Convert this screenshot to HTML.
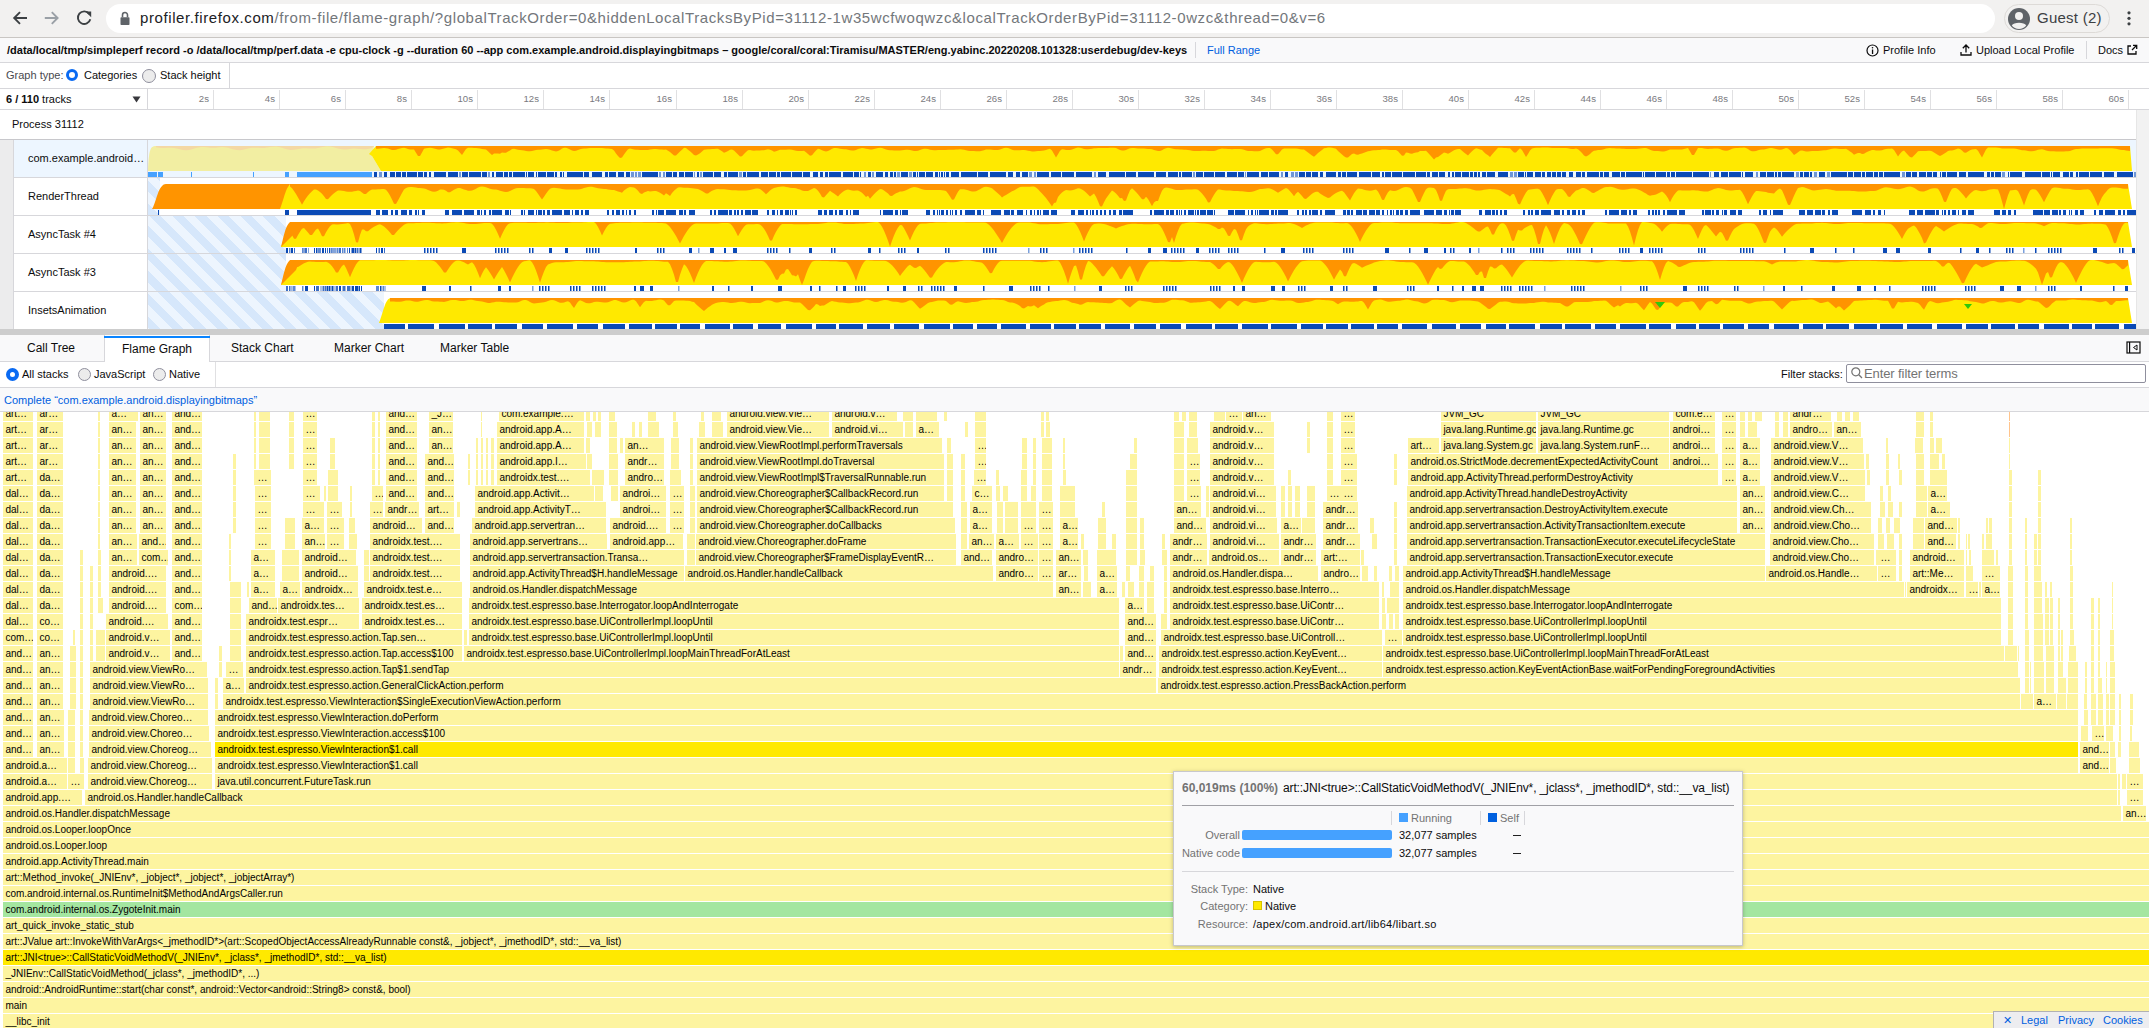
<!DOCTYPE html>
<html><head><meta charset="utf-8"><title>Firefox Profiler</title><style>
html,body{margin:0;padding:0}
body{width:2149px;height:1028px;overflow:hidden;position:relative;font-family:"Liberation Sans",sans-serif;background:#fff}
.b,.s{position:absolute;height:15px;overflow:hidden;white-space:nowrap}
.b{font-size:10px;line-height:16px;color:#000;padding-left:2.4px;box-sizing:border-box}
</style></head>
<body>

<div id="chrome" style="position:absolute;left:0;top:0;width:2149px;height:38px;background:#f2f1f0;border-bottom:1px solid #c9c6c3;box-sizing:border-box"></div>
<svg style="position:absolute;left:0;top:0" width="110" height="37" viewBox="0 0 110 37">
  <g fill="none" stroke="#3c4043" stroke-width="1.9" stroke-linecap="butt">
    <path d="M27 18 H14.2 M20 12.2 L14.2 18 L20 23.8"/>
  </g>
  <g fill="none" stroke="#9aa0a6" stroke-width="1.9" stroke-linecap="butt">
    <path d="M44.8 18 H57.6 M51.8 12.2 L57.6 18 L51.8 23.8"/>
  </g>
  <path d="M89.2 13.8 A6.3 6.3 0 1 0 90.3 19.2" fill="none" stroke="#3c4043" stroke-width="1.9"/>
  <path d="M85.3 11.4 L91.2 11.4 L91.2 17.3 Z" fill="#3c4043"/>
</svg>
<div style="position:absolute;left:106px;top:4px;width:1889px;height:29px;border-radius:15px;background:#fff"></div>
<svg style="position:absolute;left:117px;top:9px" width="16" height="18" viewBox="0 0 16 18">
  <rect x="3.5" y="8.2" width="9" height="7.8" rx="0.8" fill="#5f6368"/>
  <path d="M5.5 8.2 V6 A2.5 2.5 0 0 1 10.5 6 V8.2" fill="none" stroke="#5f6368" stroke-width="1.6"/>
</svg>
<div style="position:absolute;left:140px;top:8px;font-size:15px;line-height:20px;letter-spacing:0.595px;color:#202124;white-space:nowrap">profiler.firefox.com<span style="color:#73777b">/from-file/flame-graph/?globalTrackOrder=0&amp;hiddenLocalTracksByPid=31112-1w35wcfwoqwzc&amp;localTrackOrderByPid=31112-0wzc&amp;thread=0&amp;v=6</span></div>
<div style="position:absolute;left:2004px;top:4px;width:106px;height:29px;border-radius:15px;background:#f2f1f0;border:1px solid #dddad7;box-sizing:border-box"></div>
<svg style="position:absolute;left:2007px;top:7px" width="24" height="24" viewBox="0 0 24 24">
  <circle cx="12" cy="12" r="11" fill="#5f6368"/>
  <circle cx="12" cy="9" r="4" fill="#f2f1f0"/>
  <path d="M4.8 18.5 C6.5 14.8 17.5 14.8 19.2 18.5 C17.5 20.7 15 22 12 22 C9 22 6.5 20.7 4.8 18.5 Z" fill="#f2f1f0"/>
</svg>
<div style="position:absolute;left:2037px;top:8px;font-size:15px;line-height:20px;color:#3c4043;letter-spacing:0.25px;white-space:nowrap">Guest (2)</div>
<svg style="position:absolute;left:2123px;top:9px" width="12" height="20" viewBox="0 0 12 20">
  <circle cx="6" cy="3.8" r="1.6" fill="#3c4043"/><circle cx="6" cy="9.3" r="1.6" fill="#3c4043"/><circle cx="6" cy="14.8" r="1.6" fill="#3c4043"/>
</svg>


<div style="position:absolute;left:0;top:38px;width:2149px;height:25px;background:#f9f9fa;border-bottom:1px solid #d7d7db;box-sizing:border-box"></div>
<div style="position:absolute;left:7px;top:44px;font-weight:bold;font-size:11px;line-height:13px;color:#0c0c0d;white-space:nowrap">/data/local/tmp/simpleperf record -o /data/local/tmp/perf.data -e cpu-clock -g --duration 60 --app com.example.android.displayingbitmaps – google/coral/coral:Tiramisu/MASTER/eng.yabinc.20220208.101328:userdebug/dev-keys</div>
<div style="position:absolute;left:1195px;top:42px;width:1px;height:16px;background:#d7d7db"></div>
<div style="position:absolute;left:1207px;top:44px;font-size:11px;line-height:13px;color:#0060df;white-space:nowrap">Full Range</div>
<svg style="position:absolute;left:1866px;top:44px" width="13" height="13" viewBox="0 0 13 13">
  <circle cx="6.5" cy="6.5" r="5.5" fill="none" stroke="#0c0c0d" stroke-width="1.2"/>
  <rect x="5.9" y="5.5" width="1.3" height="4.5" fill="#0c0c0d"/><circle cx="6.5" cy="3.7" r="0.8" fill="#0c0c0d"/>
</svg>
<div style="position:absolute;left:1883px;top:44px;font-size:11px;line-height:13px;color:#0c0c0d;white-space:nowrap">Profile Info</div>
<svg style="position:absolute;left:1959px;top:43px" width="14" height="14" viewBox="0 0 14 14">
  <path d="M7 2 V9.5 M3.8 5.2 L7 2 L10.2 5.2 M2 9 V12 H12 V9" fill="none" stroke="#0c0c0d" stroke-width="1.3"/>
</svg>
<div style="position:absolute;left:1976px;top:44px;font-size:11px;line-height:13px;color:#0c0c0d;white-space:nowrap">Upload Local Profile</div>
<div style="position:absolute;left:2086px;top:41px;width:1px;height:18px;background:#d7d7db"></div>
<div style="position:absolute;left:2098px;top:44px;font-size:11px;line-height:13px;color:#0c0c0d;white-space:nowrap">Docs</div>
<svg style="position:absolute;left:2126px;top:44px" width="12" height="12" viewBox="0 0 12 12">
  <path d="M5 2 H2 V10 H10 V7" fill="none" stroke="#0c0c0d" stroke-width="1.3"/>
  <path d="M6 6 L10.5 1.5 M7 1.3 H10.7 V5" fill="none" stroke="#0c0c0d" stroke-width="1.3"/>
</svg>


<div style="position:absolute;left:0;top:63px;width:2149px;height:25px;background:#fff"></div>
<div style="position:absolute;left:6px;top:69px;font-size:11px;line-height:13px;color:#4a4a4f;white-space:nowrap">Graph type:</div>
<div style="position:absolute;left:66px;top:69px;width:6px;height:6px;border-radius:50%;border:3.5px solid #0a6af2;background:#fff"></div>
<div style="position:absolute;left:84px;top:69px;font-size:11px;line-height:13px;color:#0c0c0d;white-space:nowrap">Categories</div>
<div style="position:absolute;left:142px;top:69px;width:12px;height:12px;border-radius:50%;border:1px solid #8f8f9d;background:#ececec"></div>
<div style="position:absolute;left:160px;top:69px;font-size:11px;line-height:13px;color:#0c0c0d;white-space:nowrap">Stack height</div>
<div style="position:absolute;left:229px;top:62px;width:1px;height:26px;background:#d7d7db"></div>


<div style="position:absolute;left:0;top:88px;width:2149px;height:22px;background:#fff;border-top:1px solid #d7d7db;border-bottom:1px solid #d7d7db;box-sizing:border-box"></div>
<div style="position:absolute;left:6px;top:93px;font-size:11px;line-height:13px;color:#0c0c0d;white-space:nowrap"><b>6 / 110</b> tracks</div>
<svg style="position:absolute;left:132px;top:96px" width="9" height="7" viewBox="0 0 9 7"><path d="M0.5 0.5 H8.5 L4.5 6.5 Z" fill="#38383d"/></svg>
<div style="position:absolute;left:147px;top:88px;width:1px;height:22px;background:#d7d7db"></div>

<div style="position:absolute;left:213px;top:90px;width:1px;height:19px;background:#e0e0e2"></div>
<div style="position:absolute;left:153px;top:93px;width:56px;text-align:right;font-size:9.6px;line-height:12px;color:#7a7a80;white-space:nowrap">2s</div>
<div style="position:absolute;left:279px;top:90px;width:1px;height:19px;background:#e0e0e2"></div>
<div style="position:absolute;left:219px;top:93px;width:56px;text-align:right;font-size:9.6px;line-height:12px;color:#7a7a80;white-space:nowrap">4s</div>
<div style="position:absolute;left:345px;top:90px;width:1px;height:19px;background:#e0e0e2"></div>
<div style="position:absolute;left:285px;top:93px;width:56px;text-align:right;font-size:9.6px;line-height:12px;color:#7a7a80;white-space:nowrap">6s</div>
<div style="position:absolute;left:411px;top:90px;width:1px;height:19px;background:#e0e0e2"></div>
<div style="position:absolute;left:351px;top:93px;width:56px;text-align:right;font-size:9.6px;line-height:12px;color:#7a7a80;white-space:nowrap">8s</div>
<div style="position:absolute;left:477px;top:90px;width:1px;height:19px;background:#e0e0e2"></div>
<div style="position:absolute;left:417px;top:93px;width:56px;text-align:right;font-size:9.6px;line-height:12px;color:#7a7a80;white-space:nowrap">10s</div>
<div style="position:absolute;left:543px;top:90px;width:1px;height:19px;background:#e0e0e2"></div>
<div style="position:absolute;left:483px;top:93px;width:56px;text-align:right;font-size:9.6px;line-height:12px;color:#7a7a80;white-space:nowrap">12s</div>
<div style="position:absolute;left:609px;top:90px;width:1px;height:19px;background:#e0e0e2"></div>
<div style="position:absolute;left:549px;top:93px;width:56px;text-align:right;font-size:9.6px;line-height:12px;color:#7a7a80;white-space:nowrap">14s</div>
<div style="position:absolute;left:676px;top:90px;width:1px;height:19px;background:#e0e0e2"></div>
<div style="position:absolute;left:616px;top:93px;width:56px;text-align:right;font-size:9.6px;line-height:12px;color:#7a7a80;white-space:nowrap">16s</div>
<div style="position:absolute;left:742px;top:90px;width:1px;height:19px;background:#e0e0e2"></div>
<div style="position:absolute;left:682px;top:93px;width:56px;text-align:right;font-size:9.6px;line-height:12px;color:#7a7a80;white-space:nowrap">18s</div>
<div style="position:absolute;left:808px;top:90px;width:1px;height:19px;background:#e0e0e2"></div>
<div style="position:absolute;left:748px;top:93px;width:56px;text-align:right;font-size:9.6px;line-height:12px;color:#7a7a80;white-space:nowrap">20s</div>
<div style="position:absolute;left:874px;top:90px;width:1px;height:19px;background:#e0e0e2"></div>
<div style="position:absolute;left:814px;top:93px;width:56px;text-align:right;font-size:9.6px;line-height:12px;color:#7a7a80;white-space:nowrap">22s</div>
<div style="position:absolute;left:940px;top:90px;width:1px;height:19px;background:#e0e0e2"></div>
<div style="position:absolute;left:880px;top:93px;width:56px;text-align:right;font-size:9.6px;line-height:12px;color:#7a7a80;white-space:nowrap">24s</div>
<div style="position:absolute;left:1006px;top:90px;width:1px;height:19px;background:#e0e0e2"></div>
<div style="position:absolute;left:946px;top:93px;width:56px;text-align:right;font-size:9.6px;line-height:12px;color:#7a7a80;white-space:nowrap">26s</div>
<div style="position:absolute;left:1072px;top:90px;width:1px;height:19px;background:#e0e0e2"></div>
<div style="position:absolute;left:1012px;top:93px;width:56px;text-align:right;font-size:9.6px;line-height:12px;color:#7a7a80;white-space:nowrap">28s</div>
<div style="position:absolute;left:1138px;top:90px;width:1px;height:19px;background:#e0e0e2"></div>
<div style="position:absolute;left:1078px;top:93px;width:56px;text-align:right;font-size:9.6px;line-height:12px;color:#7a7a80;white-space:nowrap">30s</div>
<div style="position:absolute;left:1204px;top:90px;width:1px;height:19px;background:#e0e0e2"></div>
<div style="position:absolute;left:1144px;top:93px;width:56px;text-align:right;font-size:9.6px;line-height:12px;color:#7a7a80;white-space:nowrap">32s</div>
<div style="position:absolute;left:1270px;top:90px;width:1px;height:19px;background:#e0e0e2"></div>
<div style="position:absolute;left:1210px;top:93px;width:56px;text-align:right;font-size:9.6px;line-height:12px;color:#7a7a80;white-space:nowrap">34s</div>
<div style="position:absolute;left:1336px;top:90px;width:1px;height:19px;background:#e0e0e2"></div>
<div style="position:absolute;left:1276px;top:93px;width:56px;text-align:right;font-size:9.6px;line-height:12px;color:#7a7a80;white-space:nowrap">36s</div>
<div style="position:absolute;left:1402px;top:90px;width:1px;height:19px;background:#e0e0e2"></div>
<div style="position:absolute;left:1342px;top:93px;width:56px;text-align:right;font-size:9.6px;line-height:12px;color:#7a7a80;white-space:nowrap">38s</div>
<div style="position:absolute;left:1468px;top:90px;width:1px;height:19px;background:#e0e0e2"></div>
<div style="position:absolute;left:1408px;top:93px;width:56px;text-align:right;font-size:9.6px;line-height:12px;color:#7a7a80;white-space:nowrap">40s</div>
<div style="position:absolute;left:1534px;top:90px;width:1px;height:19px;background:#e0e0e2"></div>
<div style="position:absolute;left:1474px;top:93px;width:56px;text-align:right;font-size:9.6px;line-height:12px;color:#7a7a80;white-space:nowrap">42s</div>
<div style="position:absolute;left:1600px;top:90px;width:1px;height:19px;background:#e0e0e2"></div>
<div style="position:absolute;left:1540px;top:93px;width:56px;text-align:right;font-size:9.6px;line-height:12px;color:#7a7a80;white-space:nowrap">44s</div>
<div style="position:absolute;left:1666px;top:90px;width:1px;height:19px;background:#e0e0e2"></div>
<div style="position:absolute;left:1606px;top:93px;width:56px;text-align:right;font-size:9.6px;line-height:12px;color:#7a7a80;white-space:nowrap">46s</div>
<div style="position:absolute;left:1732px;top:90px;width:1px;height:19px;background:#e0e0e2"></div>
<div style="position:absolute;left:1672px;top:93px;width:56px;text-align:right;font-size:9.6px;line-height:12px;color:#7a7a80;white-space:nowrap">48s</div>
<div style="position:absolute;left:1798px;top:90px;width:1px;height:19px;background:#e0e0e2"></div>
<div style="position:absolute;left:1738px;top:93px;width:56px;text-align:right;font-size:9.6px;line-height:12px;color:#7a7a80;white-space:nowrap">50s</div>
<div style="position:absolute;left:1864px;top:90px;width:1px;height:19px;background:#e0e0e2"></div>
<div style="position:absolute;left:1804px;top:93px;width:56px;text-align:right;font-size:9.6px;line-height:12px;color:#7a7a80;white-space:nowrap">52s</div>
<div style="position:absolute;left:1930px;top:90px;width:1px;height:19px;background:#e0e0e2"></div>
<div style="position:absolute;left:1870px;top:93px;width:56px;text-align:right;font-size:9.6px;line-height:12px;color:#7a7a80;white-space:nowrap">54s</div>
<div style="position:absolute;left:1996px;top:90px;width:1px;height:19px;background:#e0e0e2"></div>
<div style="position:absolute;left:1936px;top:93px;width:56px;text-align:right;font-size:9.6px;line-height:12px;color:#7a7a80;white-space:nowrap">56s</div>
<div style="position:absolute;left:2062px;top:90px;width:1px;height:19px;background:#e0e0e2"></div>
<div style="position:absolute;left:2002px;top:93px;width:56px;text-align:right;font-size:9.6px;line-height:12px;color:#7a7a80;white-space:nowrap">58s</div>
<div style="position:absolute;left:2128px;top:90px;width:1px;height:19px;background:#e0e0e2"></div>
<div style="position:absolute;left:2068px;top:93px;width:56px;text-align:right;font-size:9.6px;line-height:12px;color:#7a7a80;white-space:nowrap">60s</div>

<div style="position:absolute;left:0;top:110px;width:2136px;height:30px;background:#fff;border-bottom:1px solid #c8c8cc;box-sizing:border-box"></div>
<div style="position:absolute;left:12px;top:118px;font-size:11px;line-height:13px;color:#0c0c0d;white-space:nowrap">Process 31112</div>
<div style="position:absolute;left:2136px;top:110px;width:13px;height:220px;background:#f2f2f2;border-left:1px solid #e6e6e6;box-sizing:border-box"></div>

<div style="position:absolute;left:0;top:140px;width:14px;height:190px;background:#ececed;border-right:1px solid #d7d7db;box-sizing:border-box"></div>
<div style="position:absolute;left:14px;top:140px;width:2122px;height:38px;background:#edf6ff;border-bottom:1px solid #d7d7db;box-sizing:border-box"></div>
<div style="position:absolute;left:28px;top:152px;font-size:11px;line-height:13px;color:#0c0c0d;white-space:nowrap">com.example.android…</div>
<div style="position:absolute;left:147px;top:140px;width:1px;height:37px;background:#d7d7db"></div>
<div style="position:absolute;left:14px;top:178px;width:2122px;height:38px;background:#fff;border-bottom:1px solid #d7d7db;box-sizing:border-box"></div>
<div style="position:absolute;left:28px;top:190px;font-size:11px;line-height:13px;color:#0c0c0d;white-space:nowrap">RenderThread</div>
<div style="position:absolute;left:147px;top:178px;width:1px;height:37px;background:#d7d7db"></div>
<div style="position:absolute;left:14px;top:216px;width:2122px;height:38px;background:#fff;border-bottom:1px solid #d7d7db;box-sizing:border-box"></div>
<div style="position:absolute;left:28px;top:228px;font-size:11px;line-height:13px;color:#0c0c0d;white-space:nowrap">AsyncTask #4</div>
<div style="position:absolute;left:147px;top:216px;width:1px;height:37px;background:#d7d7db"></div>
<div style="position:absolute;left:14px;top:254px;width:2122px;height:38px;background:#fff;border-bottom:1px solid #d7d7db;box-sizing:border-box"></div>
<div style="position:absolute;left:28px;top:266px;font-size:11px;line-height:13px;color:#0c0c0d;white-space:nowrap">AsyncTask #3</div>
<div style="position:absolute;left:147px;top:254px;width:1px;height:37px;background:#d7d7db"></div>
<div style="position:absolute;left:14px;top:292px;width:2122px;height:38px;background:#fff;border-bottom:1px solid #d7d7db;box-sizing:border-box"></div>
<div style="position:absolute;left:28px;top:304px;font-size:11px;line-height:13px;color:#0c0c0d;white-space:nowrap">InsetsAnimation</div>
<div style="position:absolute;left:147px;top:292px;width:1px;height:37px;background:#d7d7db"></div>
<div style="position:absolute;left:148px;top:178px;width:12px;height:37px;background:repeating-linear-gradient(45deg,#edf5fe 0px,#edf5fe 8px,#d6e7fb 8px,#d6e7fb 16px);background-attachment:fixed"></div>
<div style="position:absolute;left:148px;top:216px;width:138px;height:37px;background:repeating-linear-gradient(45deg,#edf5fe 0px,#edf5fe 8px,#d6e7fb 8px,#d6e7fb 16px);background-attachment:fixed"></div>
<div style="position:absolute;left:148px;top:254px;width:138px;height:37px;background:repeating-linear-gradient(45deg,#edf5fe 0px,#edf5fe 8px,#d6e7fb 8px,#d6e7fb 16px);background-attachment:fixed"></div>
<div style="position:absolute;left:148px;top:292px;width:236px;height:37px;background:repeating-linear-gradient(45deg,#edf5fe 0px,#edf5fe 8px,#d6e7fb 8px,#d6e7fb 16px);background-attachment:fixed"></div>
<svg style="position:absolute;left:0;top:0" width="2149" height="335" viewBox="0 0 2149 335">
<path d="M148,171 C149,150 150,146 156,146 L374,146 L372,156 L381,171 Z" fill="#f2eea2"/>
<path d="M156,146 L156,147.275855750327 L159,147.79524111260116 L162,148.0754487604258 L165,148.05728198359256 L168,147.87415717763864 L171,147.7701404472669 L174,147.95845470132318 L177,148.4947134782284 L180,149.23171568264323 L183,149.88078547638548 L186,150.14979862266676 L189,149.88830934857074 L192,149.16596949000177 L195,148.24394049728483 L198,147.45315517910055 L201,147.04043427156253 L204,147.05952568632682 L207,147.36093189648548 L210,147.68382395434108 L213,147.8012952447072 L216,147.64330411887332 L219,147.33362069903555 L222,147.12174362546185 L225,147.2451604163982 L228,147.79356692823103 L231,148.6461197145663 L234,149.5156964192198 L237,150.0794438101329 L240,150.13059160351165 L243,149.67529621792593 L246,148.9259288725838 L249,148.1946359902045 L252,147.7414106150825 L255,147.6535854854522 L258,147.81705278744857 L261,147.9921906194505 L264,147.95369935588408 L267,147.62087160827085 L270,147.10996279011482 L273,146.68063530608043 L276,146.60323722771645 L279,147.01483667403383 L282,147.8383250472818 L285,148.80718358290312 L288,149.58485357433267 L291,149.9194800596901 L294,149.75674307865984 L297,149.25478723350494 L300,148.6950243988493 L303,148.33537930864114 L306,148.28140233004763 L309,148.44088369884435 L312,148.58425147251307 L315,148.47838128574037 L318,148.02352387658888 L321,147.32131724841219 L324,146.6372002872118 L327,146.27487923255006 L330,146.42597175058742 L333,147.07123668949603 L336,147.984027359574 L339,148.83490470324395 L342,149.34511222692905 L345,149.41201475161537 L348,149.14418572022038 L351,148.79010232719702 L354,148.59868247060103 L357,148.68440856744724 L360,148.96690533163576 L363,149.2161033181735 L366,149.1794254244512 L369,148.72485012831478 L372,147.92509810031856 L374,146 Z" fill="#f4d8a4"/>
<path d="M369,154 L376,146 L2130,146 L2132,171 L381,171 L372,156 Z" fill="#ffe900"/>
<path d="M376,146 L376,148.8 L378,148.7 L380,148.5 L382,148.3 L384,148.1 L386,148.2 L388,148.6 L390,149.3 L392,149.9 L394,150.1 L396,149.8 L398,149.1 L400,148.4 L402,147.9 L404,147.8 L406,148.3 L408,148.9 L410,149.4 L412,149.6 L414,149.6 L416,152.8 L418,156.0 L420,155.9 L422,152.4 L424,148.7 L426,148.2 L428,147.9 L430,147.7 L432,147.9 L434,148.5 L436,149.1 L438,149.5 L440,149.5 L442,149.1 L444,148.4 L446,147.9 L448,147.6 L450,147.8 L452,148.3 L454,148.8 L456,149.2 L458,150.5 L460,152.8 L462,154.9 L464,151.9 L466,149.1 L468,147.8 L470,147.8 L472,147.8 L474,147.9 L476,147.9 L478,148.2 L480,148.6 L482,149.0 L484,149.2 L486,149.4 L488,151.3 L490,153.3 L492,155.1 L494,153.6 L496,153.4 L498,153.5 L500,153.8 L502,152.4 L504,152.7 L506,152.8 L508,151.6 L510,150.4 L512,149.1 L514,148.8 L516,149.3 L518,149.8 L520,150.0 L522,150.2 L524,150.5 L526,151.0 L528,151.3 L530,151.2 L532,150.9 L534,150.4 L536,150.0 L538,149.8 L540,149.7 L542,149.5 L544,149.3 L546,149.1 L548,149.2 L550,149.7 L552,150.4 L554,151.1 L556,151.4 L558,151.0 L560,149.9 L562,148.6 L564,147.8 L566,147.8 L568,148.5 L570,149.6 L572,150.6 L574,150.9 L576,150.7 L578,150.0 L580,149.2 L582,148.7 L584,148.6 L586,148.5 L588,148.3 L590,148.1 L592,148.1 L594,148.1 L596,148.0 L598,148.0 L600,148.0 L602,148.0 L604,148.2 L606,148.4 L608,148.6 L610,148.7 L612,149.0 L614,150.6 L616,153.4 L618,156.0 L620,158.1 L622,157.5 L624,154.6 L626,151.7 L628,149.3 L630,148.4 L632,148.9 L634,149.4 L636,149.8 L638,149.8 L640,149.9 L642,150.0 L644,150.0 L646,150.1 L648,149.9 L650,149.6 L652,149.3 L654,149.0 L656,149.0 L658,149.2 L660,149.4 L662,149.6 L664,149.7 L666,149.5 L668,150.8 L670,152.1 L672,153.7 L674,155.6 L676,155.6 L678,153.6 L680,151.6 L682,149.7 L684,147.8 L686,148.0 L688,149.7 L690,151.3 L692,152.9 L694,154.9 L696,155.5 L698,154.6 L700,153.3 L702,151.6 L704,149.8 L706,149.5 L708,149.2 L710,149.2 L712,149.1 L714,148.9 L716,148.8 L718,148.8 L720,149.9 L722,151.3 L724,152.8 L726,151.9 L728,150.9 L730,149.7 L732,149.5 L734,150.4 L736,152.5 L738,154.6 L740,156.5 L742,156.3 L744,154.0 L746,152.0 L748,150.3 L750,149.9 L752,150.4 L754,150.7 L756,150.6 L758,150.5 L760,150.4 L762,150.3 L764,150.2 L766,149.8 L768,149.2 L770,149.8 L772,150.6 L774,151.8 L776,151.2 L778,150.5 L780,149.8 L782,149.8 L784,149.7 L786,149.7 L788,149.6 L790,149.6 L792,149.8 L794,150.2 L796,150.7 L798,151.0 L800,151.0 L802,150.9 L804,150.7 L806,152.3 L808,154.1 L810,155.8 L812,155.3 L814,152.8 L816,150.6 L818,148.7 L820,149.3 L822,150.3 L824,151.1 L826,151.4 L828,151.0 L830,150.0 L832,148.8 L834,148.1 L836,148.0 L838,148.3 L840,148.7 L842,149.0 L844,149.2 L846,149.3 L848,149.7 L850,150.2 L852,150.5 L854,150.5 L856,149.9 L858,149.1 L860,148.4 L862,148.1 L864,148.3 L866,148.7 L868,149.1 L870,149.4 L872,149.4 L874,149.0 L876,148.4 L878,147.9 L880,147.7 L882,148.0 L884,148.7 L886,149.5 L888,150.1 L890,150.2 L892,150.3 L894,150.4 L896,150.5 L898,150.6 L900,150.5 L902,150.2 L904,150.0 L906,149.8 L908,149.8 L910,150.1 L912,150.5 L914,150.9 L916,151.0 L918,150.7 L920,150.1 L922,149.3 L924,148.8 L926,148.8 L928,149.1 L930,149.7 L932,150.1 L934,150.3 L936,150.2 L938,150.1 L940,150.0 L942,149.9 L944,149.9 L946,149.9 L948,149.8 L950,149.8 L952,149.8 L954,149.8 L956,149.6 L958,149.4 L960,149.3 L962,149.4 L964,149.7 L966,150.2 L968,150.7 L970,150.9 L972,150.9 L974,151.0 L976,151.2 L978,151.3 L980,151.2 L982,150.8 L984,150.2 L986,149.6 L988,149.4 L990,149.5 L992,149.7 L994,150.0 L996,150.1 L998,150.1 L1000,149.6 L1002,148.7 L1004,148.0 L1006,147.7 L1008,148.0 L1010,148.8 L1012,149.7 L1014,150.2 L1016,150.3 L1018,150.3 L1020,150.2 L1022,150.1 L1024,150.1 L1026,150.3 L1028,150.7 L1030,151.1 L1032,151.4 L1034,151.5 L1036,151.3 L1038,151.1 L1040,150.9 L1042,150.8 L1044,150.5 L1046,149.9 L1048,149.2 L1050,148.7 L1052,150.4 L1054,153.9 L1056,157.5 L1058,154.2 L1060,150.8 L1062,149.2 L1064,149.5 L1066,149.9 L1068,150.1 L1070,150.1 L1072,149.5 L1074,148.7 L1076,147.9 L1078,147.6 L1080,147.8 L1082,148.3 L1084,148.9 L1086,149.3 L1088,149.3 L1090,149.1 L1092,148.7 L1094,148.3 L1096,148.2 L1098,148.1 L1100,148.1 L1102,148.0 L1104,148.0 L1106,148.0 L1108,147.9 L1110,147.8 L1112,147.8 L1114,147.7 L1116,148.1 L1118,148.9 L1120,149.9 L1122,150.5 L1124,150.5 L1126,149.9 L1128,149.1 L1130,148.3 L1132,148.0 L1134,148.1 L1136,148.2 L1138,148.4 L1140,148.5 L1142,148.5 L1144,148.6 L1146,148.8 L1148,149.0 L1150,149.1 L1152,149.3 L1154,149.9 L1156,150.5 L1158,150.9 L1160,150.9 L1162,150.2 L1164,149.1 L1166,148.2 L1168,147.8 L1170,148.0 L1172,148.4 L1174,148.9 L1176,149.3 L1178,149.3 L1180,149.4 L1182,149.5 L1184,149.7 L1186,149.7 L1188,149.9 L1190,150.2 L1192,150.7 L1194,151.0 L1196,151.0 L1198,151.0 L1200,150.9 L1202,150.8 L1204,150.8 L1206,150.8 L1208,150.9 L1210,150.9 L1212,151.0 L1214,150.9 L1216,150.4 L1218,149.6 L1220,148.9 L1222,148.6 L1224,148.7 L1226,148.8 L1228,149.0 L1230,149.1 L1232,149.2 L1234,149.1 L1236,149.0 L1238,149.0 L1240,148.9 L1242,149.2 L1244,149.8 L1246,150.5 L1248,151.0 L1250,151.0 L1252,151.1 L1254,151.2 L1256,151.3 L1258,151.3 L1260,151.0 L1262,150.0 L1264,148.9 L1266,148.2 L1268,148.1 L1270,148.1 L1272,149.4 L1274,151.8 L1276,154.3 L1278,154.3 L1280,151.9 L1282,149.6 L1284,148.4 L1286,148.4 L1288,148.4 L1290,148.4 L1292,148.4 L1294,148.4 L1296,148.6 L1298,148.8 L1300,149.2 L1302,149.4 L1304,149.5 L1306,151.0 L1308,152.5 L1310,154.1 L1312,155.5 L1314,156.8 L1316,155.0 L1318,153.1 L1320,151.4 L1322,149.9 L1324,148.3 L1326,147.9 L1328,147.6 L1330,147.5 L1332,147.7 L1334,148.2 L1336,148.8 L1338,150.9 L1340,152.8 L1342,154.5 L1344,156.2 L1346,157.6 L1348,157.6 L1350,155.8 L1352,154.1 L1354,153.4 L1356,154.6 L1358,154.7 L1360,153.9 L1362,153.4 L1364,152.8 L1366,151.9 L1368,151.2 L1370,150.9 L1372,150.5 L1374,150.3 L1376,150.2 L1378,150.1 L1380,149.9 L1382,149.6 L1384,149.6 L1386,149.6 L1388,149.7 L1390,149.9 L1392,150.0 L1394,150.0 L1396,150.0 L1398,151.2 L1400,153.5 L1402,155.8 L1404,155.5 L1406,152.5 L1408,152.7 L1410,153.6 L1412,153.7 L1414,153.0 L1416,152.6 L1418,152.2 L1420,151.1 L1422,151.0 L1424,150.9 L1426,150.7 L1428,152.8 L1430,155.0 L1432,157.3 L1434,159.6 L1436,157.5 L1438,157.1 L1440,155.6 L1442,153.9 L1444,152.5 L1446,153.1 L1448,153.8 L1450,152.7 L1452,151.5 L1454,150.3 L1456,149.4 L1458,149.1 L1460,149.1 L1462,150.7 L1464,152.4 L1466,154.0 L1468,155.4 L1470,153.3 L1472,151.3 L1474,149.6 L1476,148.2 L1478,148.8 L1480,149.5 L1482,150.0 L1484,152.2 L1486,153.9 L1488,155.3 L1490,156.9 L1492,154.4 L1494,152.2 L1496,150.0 L1498,147.8 L1500,147.8 L1502,147.8 L1504,147.9 L1506,148.1 L1508,148.3 L1510,148.3 L1512,150.4 L1514,152.5 L1516,152.4 L1518,150.3 L1520,148.2 L1522,150.0 L1524,153.6 L1526,157.1 L1528,153.9 L1530,150.4 L1532,148.4 L1534,148.0 L1536,147.7 L1538,147.7 L1540,147.7 L1542,147.6 L1544,147.5 L1546,147.5 L1548,147.6 L1550,147.8 L1552,148.0 L1554,148.1 L1556,148.1 L1558,148.1 L1560,148.0 L1562,147.9 L1564,147.9 L1566,148.0 L1568,148.3 L1570,148.7 L1572,148.9 L1574,148.9 L1576,148.6 L1578,149.2 L1580,151.0 L1582,153.0 L1584,155.6 L1586,156.6 L1588,155.6 L1590,154.1 L1592,152.0 L1594,150.7 L1596,150.4 L1598,150.1 L1600,150.0 L1602,149.7 L1604,149.2 L1606,148.6 L1608,148.2 L1610,148.1 L1612,148.2 L1614,148.3 L1616,148.5 L1618,148.5 L1620,148.6 L1622,148.7 L1624,148.8 L1626,148.9 L1628,148.9 L1630,148.9 L1632,148.9 L1634,148.9 L1636,149.0 L1638,148.8 L1640,148.6 L1642,148.2 L1644,148.0 L1646,148.1 L1648,148.7 L1650,149.7 L1652,150.6 L1654,150.9 L1656,151.0 L1658,151.1 L1660,151.3 L1662,151.5 L1664,151.4 L1666,150.9 L1668,150.2 L1670,149.6 L1672,149.4 L1674,149.4 L1676,149.4 L1678,149.4 L1680,149.4 L1682,149.4 L1684,149.0 L1686,148.5 L1688,148.0 L1690,151.4 L1692,154.9 L1694,154.9 L1696,151.4 L1698,147.9 L1700,147.9 L1702,148.1 L1704,148.5 L1706,148.8 L1708,148.9 L1710,148.8 L1712,148.7 L1714,148.6 L1716,148.6 L1718,148.6 L1720,149.1 L1722,149.9 L1724,150.6 L1726,150.8 L1728,150.5 L1730,149.7 L1732,148.8 L1734,148.2 L1736,148.1 L1738,148.0 L1740,147.8 L1742,147.7 L1744,147.6 L1746,148.0 L1748,149.1 L1750,150.4 L1752,151.2 L1754,151.3 L1756,150.9 L1758,150.3 L1760,149.8 L1762,149.6 L1764,149.4 L1766,149.0 L1768,148.5 L1770,148.1 L1772,148.1 L1774,148.5 L1776,149.0 L1778,149.5 L1780,149.7 L1782,149.4 L1784,148.8 L1786,148.1 L1788,148.6 L1790,150.3 L1792,152.5 L1794,155.0 L1796,153.8 L1798,152.3 L1800,150.7 L1802,150.4 L1804,151.0 L1806,151.4 L1808,151.4 L1810,151.3 L1812,151.1 L1814,151.0 L1816,151.0 L1818,150.9 L1820,150.7 L1822,150.5 L1824,150.3 L1826,150.2 L1828,149.8 L1830,149.3 L1832,148.7 L1834,148.5 L1836,148.6 L1838,148.7 L1840,148.9 L1842,149.0 L1844,148.9 L1846,148.8 L1848,150.1 L1850,151.4 L1852,152.8 L1854,154.7 L1856,153.8 L1858,153.1 L1860,153.1 L1862,153.9 L1864,153.7 L1866,152.6 L1868,151.6 L1870,150.7 L1872,150.1 L1874,150.0 L1876,150.4 L1878,150.6 L1880,150.6 L1882,150.2 L1884,149.6 L1886,149.0 L1888,148.8 L1890,148.8 L1892,148.6 L1894,150.1 L1896,153.2 L1898,156.5 L1900,153.8 L1902,151.4 L1904,150.5 L1906,152.8 L1908,154.9 L1910,157.1 L1912,157.6 L1914,155.6 L1916,153.5 L1918,151.3 L1920,151.1 L1922,151.0 L1924,150.9 L1926,150.9 L1928,150.8 L1930,150.8 L1932,151.3 L1934,152.5 L1936,153.7 L1938,154.9 L1940,156.0 L1942,154.9 L1944,153.7 L1946,152.4 L1948,151.1 L1950,150.5 L1952,150.4 L1954,149.9 L1956,149.3 L1958,148.6 L1960,149.1 L1962,150.6 L1964,152.4 L1966,152.8 L1968,151.6 L1970,150.3 L1972,149.4 L1974,149.2 L1976,149.0 L1978,150.8 L1980,154.3 L1982,157.6 L1984,153.5 L1986,149.5 L1988,147.6 L1990,147.6 L1992,147.6 L1994,147.6 L1996,147.6 L1998,147.7 L2000,148.0 L2002,148.4 L2004,148.6 L2006,148.6 L2008,148.6 L2010,148.6 L2012,148.5 L2014,148.5 L2016,148.7 L2018,149.3 L2020,149.8 L2022,150.2 L2024,150.3 L2026,150.5 L2028,150.9 L2030,151.2 L2032,151.3 L2034,151.1 L2036,150.5 L2038,149.8 L2040,149.4 L2042,149.3 L2044,149.8 L2046,150.4 L2048,151.0 L2050,151.2 L2052,151.3 L2054,151.3 L2056,151.4 L2058,151.4 L2060,151.4 L2062,151.4 L2064,151.4 L2066,151.3 L2068,151.3 L2070,151.0 L2072,150.3 L2074,149.5 L2076,149.0 L2078,148.9 L2080,148.8 L2082,148.6 L2084,148.4 L2086,148.4 L2088,148.4 L2090,148.4 L2092,148.4 L2094,148.4 L2096,148.4 L2098,148.4 L2100,148.3 L2102,148.3 L2104,148.3 L2106,148.3 L2108,148.3 L2110,148.3 L2112,148.3 L2114,148.4 L2116,148.7 L2118,149.3 L2120,149.8 L2122,150.0 L2124,150.1 L2126,150.5 L2128,150.8 L2130,151.1 L2130,146 Z" fill="#ff9400"/>
<rect x="148" y="172" width="1988" height="5" fill="#edf6ff"/>
<rect x="148" y="172" width="9" height="5" fill="#45a1ff"/><rect x="158" y="172" width="5" height="5" fill="#45a1ff"/><rect x="191" y="172" width="1" height="5" fill="#45a1ff"/><rect x="253" y="172" width="1" height="5" fill="#45a1ff"/><rect x="285" y="172" width="4" height="5" fill="#45a1ff"/><rect x="297" y="172" width="75" height="5" fill="#45a1ff"/>
<rect x="374" y="172" width="3" height="5" fill="#0b4ab5"/><rect x="379" y="172" width="3" height="5" fill="#6f96d6"/><rect x="384" y="172" width="3" height="5" fill="#0b4ab5"/><rect x="390" y="172" width="5" height="5" fill="#0b4ab5"/><rect x="396" y="172" width="5" height="5" fill="#0b4ab5"/><rect x="402" y="172" width="4" height="5" fill="#0b4ab5"/><rect x="407" y="172" width="10" height="5" fill="#0b4ab5"/><rect x="418" y="172" width="5" height="5" fill="#0b4ab5"/><rect x="424" y="172" width="3" height="5" fill="#0b4ab5"/><rect x="429" y="172" width="2" height="5" fill="#0b4ab5"/><rect x="434" y="172" width="12" height="5" fill="#0b4ab5"/><rect x="448" y="172" width="10" height="5" fill="#0b4ab5"/><rect x="459" y="172" width="2" height="5" fill="#6f96d6"/><rect x="462" y="172" width="6" height="5" fill="#0b4ab5"/><rect x="469" y="172" width="12" height="5" fill="#0b4ab5"/><rect x="482" y="172" width="5" height="5" fill="#0b4ab5"/><rect x="488" y="172" width="2" height="5" fill="#6f96d6"/><rect x="492" y="172" width="2" height="5" fill="#0b4ab5"/><rect x="496" y="172" width="7" height="5" fill="#0b4ab5"/><rect x="504" y="172" width="4" height="5" fill="#0b4ab5"/><rect x="509" y="172" width="3" height="5" fill="#0b4ab5"/><rect x="513" y="172" width="12" height="5" fill="#0b4ab5"/><rect x="526" y="172" width="1" height="5" fill="#0b4ab5"/><rect x="528" y="172" width="6" height="5" fill="#0b4ab5"/><rect x="536" y="172" width="1" height="5" fill="#0b4ab5"/><rect x="538" y="172" width="8" height="5" fill="#0b4ab5"/><rect x="547" y="172" width="7" height="5" fill="#0b4ab5"/><rect x="555" y="172" width="2" height="5" fill="#0b4ab5"/><rect x="560" y="172" width="2" height="5" fill="#0b4ab5"/><rect x="563" y="172" width="1" height="5" fill="#0b4ab5"/><rect x="567" y="172" width="16" height="5" fill="#0b4ab5"/><rect x="584" y="172" width="5" height="5" fill="#0b4ab5"/><rect x="592" y="172" width="10" height="5" fill="#0b4ab5"/><rect x="605" y="172" width="3" height="5" fill="#0b4ab5"/><rect x="609" y="172" width="7" height="5" fill="#0b4ab5"/><rect x="618" y="172" width="6" height="5" fill="#0b4ab5"/><rect x="626" y="172" width="4" height="5" fill="#0b4ab5"/><rect x="631" y="172" width="3" height="5" fill="#6f96d6"/><rect x="635" y="172" width="2" height="5" fill="#6f96d6"/><rect x="638" y="172" width="3" height="5" fill="#6f96d6"/><rect x="642" y="172" width="16" height="5" fill="#0b4ab5"/><rect x="659" y="172" width="2" height="5" fill="#6f96d6"/><rect x="663" y="172" width="2" height="5" fill="#6f96d6"/><rect x="666" y="172" width="6" height="5" fill="#0b4ab5"/><rect x="673" y="172" width="4" height="5" fill="#0b4ab5"/><rect x="679" y="172" width="5" height="5" fill="#0b4ab5"/><rect x="685" y="172" width="8" height="5" fill="#0b4ab5"/><rect x="694" y="172" width="1" height="5" fill="#6f96d6"/><rect x="697" y="172" width="2" height="5" fill="#0b4ab5"/><rect x="700" y="172" width="2" height="5" fill="#6f96d6"/><rect x="703" y="172" width="10" height="5" fill="#0b4ab5"/><rect x="714" y="172" width="7" height="5" fill="#0b4ab5"/><rect x="724" y="172" width="3" height="5" fill="#0b4ab5"/><rect x="728" y="172" width="10" height="5" fill="#0b4ab5"/><rect x="739" y="172" width="3" height="5" fill="#6f96d6"/><rect x="743" y="172" width="3" height="5" fill="#0b4ab5"/><rect x="747" y="172" width="12" height="5" fill="#0b4ab5"/><rect x="761" y="172" width="7" height="5" fill="#0b4ab5"/><rect x="769" y="172" width="7" height="5" fill="#0b4ab5"/><rect x="777" y="172" width="3" height="5" fill="#0b4ab5"/><rect x="781" y="172" width="10" height="5" fill="#0b4ab5"/><rect x="792" y="172" width="10" height="5" fill="#0b4ab5"/><rect x="803" y="172" width="7" height="5" fill="#0b4ab5"/><rect x="813" y="172" width="5" height="5" fill="#0b4ab5"/><rect x="820" y="172" width="3" height="5" fill="#0b4ab5"/><rect x="825" y="172" width="3" height="5" fill="#0b4ab5"/><rect x="829" y="172" width="12" height="5" fill="#0b4ab5"/><rect x="843" y="172" width="10" height="5" fill="#0b4ab5"/><rect x="854" y="172" width="5" height="5" fill="#0b4ab5"/><rect x="860" y="172" width="1" height="5" fill="#0b4ab5"/><rect x="864" y="172" width="2" height="5" fill="#6f96d6"/><rect x="868" y="172" width="3" height="5" fill="#0b4ab5"/><rect x="872" y="172" width="2" height="5" fill="#6f96d6"/><rect x="876" y="172" width="7" height="5" fill="#0b4ab5"/><rect x="885" y="172" width="3" height="5" fill="#0b4ab5"/><rect x="890" y="172" width="3" height="5" fill="#0b4ab5"/><rect x="894" y="172" width="2" height="5" fill="#0b4ab5"/><rect x="897" y="172" width="3" height="5" fill="#6f96d6"/><rect x="901" y="172" width="7" height="5" fill="#0b4ab5"/><rect x="909" y="172" width="3" height="5" fill="#6f96d6"/><rect x="913" y="172" width="3" height="5" fill="#0b4ab5"/><rect x="917" y="172" width="1" height="5" fill="#0b4ab5"/><rect x="919" y="172" width="6" height="5" fill="#0b4ab5"/><rect x="926" y="172" width="7" height="5" fill="#0b4ab5"/><rect x="935" y="172" width="3" height="5" fill="#0b4ab5"/><rect x="939" y="172" width="1" height="5" fill="#0b4ab5"/><rect x="941" y="172" width="2" height="5" fill="#0b4ab5"/><rect x="944" y="172" width="1" height="5" fill="#0b4ab5"/><rect x="946" y="172" width="3" height="5" fill="#0b4ab5"/><rect x="951" y="172" width="8" height="5" fill="#0b4ab5"/><rect x="961" y="172" width="16" height="5" fill="#0b4ab5"/><rect x="978" y="172" width="10" height="5" fill="#0b4ab5"/><rect x="990" y="172" width="16" height="5" fill="#0b4ab5"/><rect x="1008" y="172" width="5" height="5" fill="#0b4ab5"/><rect x="1016" y="172" width="4" height="5" fill="#0b4ab5"/><rect x="1022" y="172" width="6" height="5" fill="#0b4ab5"/><rect x="1029" y="172" width="3" height="5" fill="#6f96d6"/><rect x="1034" y="172" width="2" height="5" fill="#6f96d6"/><rect x="1037" y="172" width="12" height="5" fill="#0b4ab5"/><rect x="1051" y="172" width="10" height="5" fill="#0b4ab5"/><rect x="1062" y="172" width="12" height="5" fill="#0b4ab5"/><rect x="1076" y="172" width="16" height="5" fill="#0b4ab5"/><rect x="1094" y="172" width="2" height="5" fill="#6f96d6"/><rect x="1098" y="172" width="8" height="5" fill="#0b4ab5"/><rect x="1109" y="172" width="16" height="5" fill="#0b4ab5"/><rect x="1126" y="172" width="10" height="5" fill="#0b4ab5"/><rect x="1138" y="172" width="16" height="5" fill="#0b4ab5"/><rect x="1156" y="172" width="10" height="5" fill="#0b4ab5"/><rect x="1168" y="172" width="10" height="5" fill="#0b4ab5"/><rect x="1179" y="172" width="2" height="5" fill="#0b4ab5"/><rect x="1182" y="172" width="10" height="5" fill="#0b4ab5"/><rect x="1193" y="172" width="2" height="5" fill="#6f96d6"/><rect x="1196" y="172" width="7" height="5" fill="#0b4ab5"/><rect x="1204" y="172" width="10" height="5" fill="#0b4ab5"/><rect x="1215" y="172" width="10" height="5" fill="#0b4ab5"/><rect x="1227" y="172" width="10" height="5" fill="#0b4ab5"/><rect x="1238" y="172" width="6" height="5" fill="#0b4ab5"/><rect x="1245" y="172" width="1" height="5" fill="#6f96d6"/><rect x="1247" y="172" width="12" height="5" fill="#0b4ab5"/><rect x="1261" y="172" width="7" height="5" fill="#0b4ab5"/><rect x="1269" y="172" width="10" height="5" fill="#0b4ab5"/><rect x="1281" y="172" width="2" height="5" fill="#6f96d6"/><rect x="1285" y="172" width="3" height="5" fill="#0b4ab5"/><rect x="1291" y="172" width="3" height="5" fill="#6f96d6"/><rect x="1295" y="172" width="3" height="5" fill="#6f96d6"/><rect x="1299" y="172" width="6" height="5" fill="#0b4ab5"/><rect x="1306" y="172" width="5" height="5" fill="#0b4ab5"/><rect x="1312" y="172" width="6" height="5" fill="#0b4ab5"/><rect x="1320" y="172" width="3" height="5" fill="#0b4ab5"/><rect x="1326" y="172" width="10" height="5" fill="#0b4ab5"/><rect x="1338" y="172" width="3" height="5" fill="#0b4ab5"/><rect x="1342" y="172" width="4" height="5" fill="#0b4ab5"/><rect x="1347" y="172" width="10" height="5" fill="#0b4ab5"/><rect x="1359" y="172" width="12" height="5" fill="#0b4ab5"/><rect x="1372" y="172" width="8" height="5" fill="#0b4ab5"/><rect x="1382" y="172" width="2" height="5" fill="#0b4ab5"/><rect x="1385" y="172" width="6" height="5" fill="#0b4ab5"/><rect x="1392" y="172" width="10" height="5" fill="#0b4ab5"/><rect x="1403" y="172" width="12" height="5" fill="#0b4ab5"/><rect x="1416" y="172" width="10" height="5" fill="#0b4ab5"/><rect x="1427" y="172" width="3" height="5" fill="#0b4ab5"/><rect x="1432" y="172" width="6" height="5" fill="#0b4ab5"/><rect x="1439" y="172" width="6" height="5" fill="#0b4ab5"/><rect x="1448" y="172" width="2" height="5" fill="#0b4ab5"/><rect x="1452" y="172" width="2" height="5" fill="#0b4ab5"/><rect x="1455" y="172" width="6" height="5" fill="#0b4ab5"/><rect x="1462" y="172" width="7" height="5" fill="#0b4ab5"/><rect x="1470" y="172" width="3" height="5" fill="#0b4ab5"/><rect x="1474" y="172" width="3" height="5" fill="#0b4ab5"/><rect x="1478" y="172" width="2" height="5" fill="#0b4ab5"/><rect x="1482" y="172" width="4" height="5" fill="#0b4ab5"/><rect x="1487" y="172" width="8" height="5" fill="#0b4ab5"/><rect x="1498" y="172" width="10" height="5" fill="#0b4ab5"/><rect x="1510" y="172" width="3" height="5" fill="#6f96d6"/><rect x="1514" y="172" width="3" height="5" fill="#6f96d6"/><rect x="1518" y="172" width="6" height="5" fill="#0b4ab5"/><rect x="1525" y="172" width="1" height="5" fill="#0b4ab5"/><rect x="1527" y="172" width="6" height="5" fill="#0b4ab5"/><rect x="1535" y="172" width="6" height="5" fill="#0b4ab5"/><rect x="1542" y="172" width="3" height="5" fill="#0b4ab5"/><rect x="1547" y="172" width="4" height="5" fill="#0b4ab5"/><rect x="1552" y="172" width="4" height="5" fill="#0b4ab5"/><rect x="1557" y="172" width="4" height="5" fill="#0b4ab5"/><rect x="1562" y="172" width="4" height="5" fill="#0b4ab5"/><rect x="1569" y="172" width="4" height="5" fill="#0b4ab5"/><rect x="1576" y="172" width="5" height="5" fill="#0b4ab5"/><rect x="1582" y="172" width="3" height="5" fill="#0b4ab5"/><rect x="1587" y="172" width="12" height="5" fill="#0b4ab5"/><rect x="1600" y="172" width="3" height="5" fill="#0b4ab5"/><rect x="1604" y="172" width="5" height="5" fill="#0b4ab5"/><rect x="1612" y="172" width="8" height="5" fill="#0b4ab5"/><rect x="1621" y="172" width="4" height="5" fill="#0b4ab5"/><rect x="1626" y="172" width="16" height="5" fill="#0b4ab5"/><rect x="1643" y="172" width="1" height="5" fill="#0b4ab5"/><rect x="1645" y="172" width="10" height="5" fill="#0b4ab5"/><rect x="1656" y="172" width="10" height="5" fill="#0b4ab5"/><rect x="1667" y="172" width="3" height="5" fill="#0b4ab5"/><rect x="1671" y="172" width="4" height="5" fill="#0b4ab5"/><rect x="1676" y="172" width="16" height="5" fill="#0b4ab5"/><rect x="1693" y="172" width="16" height="5" fill="#0b4ab5"/><rect x="1710" y="172" width="1" height="5" fill="#6f96d6"/><rect x="1714" y="172" width="5" height="5" fill="#0b4ab5"/><rect x="1721" y="172" width="7" height="5" fill="#0b4ab5"/><rect x="1729" y="172" width="12" height="5" fill="#0b4ab5"/><rect x="1742" y="172" width="1" height="5" fill="#0b4ab5"/><rect x="1745" y="172" width="8" height="5" fill="#0b4ab5"/><rect x="1756" y="172" width="2" height="5" fill="#6f96d6"/><rect x="1760" y="172" width="6" height="5" fill="#0b4ab5"/><rect x="1767" y="172" width="7" height="5" fill="#0b4ab5"/><rect x="1775" y="172" width="2" height="5" fill="#0b4ab5"/><rect x="1778" y="172" width="3" height="5" fill="#0b4ab5"/><rect x="1782" y="172" width="12" height="5" fill="#0b4ab5"/><rect x="1796" y="172" width="3" height="5" fill="#6f96d6"/><rect x="1800" y="172" width="3" height="5" fill="#0b4ab5"/><rect x="1804" y="172" width="5" height="5" fill="#0b4ab5"/><rect x="1810" y="172" width="2" height="5" fill="#0b4ab5"/><rect x="1814" y="172" width="3" height="5" fill="#6f96d6"/><rect x="1819" y="172" width="6" height="5" fill="#0b4ab5"/><rect x="1827" y="172" width="3" height="5" fill="#6f96d6"/><rect x="1831" y="172" width="16" height="5" fill="#0b4ab5"/><rect x="1848" y="172" width="5" height="5" fill="#0b4ab5"/><rect x="1854" y="172" width="7" height="5" fill="#0b4ab5"/><rect x="1862" y="172" width="3" height="5" fill="#0b4ab5"/><rect x="1866" y="172" width="7" height="5" fill="#0b4ab5"/><rect x="1874" y="172" width="4" height="5" fill="#0b4ab5"/><rect x="1879" y="172" width="4" height="5" fill="#0b4ab5"/><rect x="1884" y="172" width="16" height="5" fill="#0b4ab5"/><rect x="1902" y="172" width="3" height="5" fill="#6f96d6"/><rect x="1906" y="172" width="5" height="5" fill="#0b4ab5"/><rect x="1912" y="172" width="5" height="5" fill="#0b4ab5"/><rect x="1919" y="172" width="7" height="5" fill="#0b4ab5"/><rect x="1927" y="172" width="5" height="5" fill="#0b4ab5"/><rect x="1933" y="172" width="4" height="5" fill="#0b4ab5"/><rect x="1940" y="172" width="1" height="5" fill="#0b4ab5"/><rect x="1942" y="172" width="4" height="5" fill="#0b4ab5"/><rect x="1947" y="172" width="10" height="5" fill="#0b4ab5"/><rect x="1959" y="172" width="7" height="5" fill="#0b4ab5"/><rect x="1968" y="172" width="16" height="5" fill="#0b4ab5"/><rect x="1987" y="172" width="3" height="5" fill="#0b4ab5"/><rect x="1991" y="172" width="3" height="5" fill="#0b4ab5"/><rect x="1995" y="172" width="6" height="5" fill="#0b4ab5"/><rect x="2002" y="172" width="3" height="5" fill="#6f96d6"/><rect x="2008" y="172" width="1" height="5" fill="#0b4ab5"/><rect x="2010" y="172" width="12" height="5" fill="#0b4ab5"/><rect x="2025" y="172" width="16" height="5" fill="#0b4ab5"/><rect x="2042" y="172" width="8" height="5" fill="#0b4ab5"/><rect x="2051" y="172" width="1" height="5" fill="#0b4ab5"/><rect x="2053" y="172" width="7" height="5" fill="#0b4ab5"/><rect x="2063" y="172" width="6" height="5" fill="#0b4ab5"/><rect x="2070" y="172" width="3" height="5" fill="#0b4ab5"/><rect x="2076" y="172" width="2" height="5" fill="#0b4ab5"/><rect x="2079" y="172" width="10" height="5" fill="#0b4ab5"/><rect x="2090" y="172" width="12" height="5" fill="#0b4ab5"/><rect x="2104" y="172" width="10" height="5" fill="#0b4ab5"/><rect x="2117" y="172" width="16" height="5" fill="#0b4ab5"/><rect x="2134" y="172" width="2" height="5" fill="#6f96d6"/>
<path d="M152,209 C156,204 158,184 166,184 L290,184 L282,209 Z" fill="#ff9400"/>
<path d="M280,209 C284,200 286,184 292,184 L2128,184 L2132,209 Z" fill="#ffe900"/>
<path d="M290,184 L290,186.5 L292,188.3 L294,190.9 L296,194.0 L298,197.4 L300,201.0 L302,204.8 L304,201.3 L306,198.2 L308,195.6 L310,193.2 L312,191.2 L314,189.6 L316,189.4 L318,190.4 L320,191.9 L322,193.8 L324,196.2 L326,199.1 L328,199.3 L330,196.9 L332,194.9 L334,193.3 L336,191.7 L338,190.4 L340,190.5 L342,190.8 L344,191.1 L346,191.5 L348,191.7 L350,191.8 L352,191.7 L354,191.3 L356,190.9 L358,190.4 L360,191.1 L362,192.4 L364,194.1 L366,194.0 L368,192.1 L370,190.5 L372,189.4 L374,189.4 L376,189.4 L378,189.3 L380,189.2 L382,189.0 L384,188.9 L386,189.7 L388,192.3 L390,195.6 L392,199.5 L394,203.7 L396,204.0 L398,200.4 L400,196.7 L402,193.0 L404,189.6 L406,188.0 L408,187.3 L410,187.0 L412,187.1 L414,187.3 L416,187.6 L418,187.9 L420,188.1 L422,188.2 L424,188.4 L426,189.0 L428,189.9 L430,190.8 L432,191.5 L434,191.7 L436,191.4 L438,190.7 L440,189.6 L442,189.4 L444,189.7 L446,190.8 L448,192.2 L450,192.3 L452,191.0 L454,189.7 L456,188.7 L458,187.9 L460,188.1 L462,188.7 L464,189.4 L466,190.1 L468,190.7 L470,190.8 L472,190.6 L474,189.8 L476,188.7 L478,187.6 L480,186.8 L482,186.5 L484,186.7 L486,187.2 L488,188.0 L490,188.7 L492,189.3 L494,189.5 L496,189.6 L498,190.1 L500,190.7 L502,191.3 L504,191.8 L506,192.0 L508,191.7 L510,191.0 L512,190.0 L514,189.0 L516,188.3 L518,188.0 L520,188.0 L522,188.1 L524,188.1 L526,188.2 L528,188.2 L530,188.2 L532,188.4 L534,189.0 L536,191.1 L538,193.8 L540,196.7 L542,199.6 L544,196.7 L546,193.7 L548,190.9 L550,188.7 L552,188.1 L554,187.8 L556,187.9 L558,188.2 L560,188.6 L562,189.0 L564,189.3 L566,189.4 L568,189.4 L570,189.4 L572,189.5 L574,189.5 L576,189.5 L578,189.5 L580,189.3 L582,188.8 L584,188.1 L586,187.4 L588,186.9 L590,186.7 L592,186.8 L594,187.2 L596,187.7 L598,188.2 L600,188.6 L602,188.8 L604,188.9 L606,189.1 L608,189.4 L610,189.7 L612,190.0 L614,190.1 L616,190.7 L618,191.4 L620,192.0 L622,192.8 L624,190.6 L626,188.9 L628,187.7 L630,187.0 L632,187.2 L634,187.4 L636,188.8 L638,190.7 L640,193.2 L642,193.9 L644,192.6 L646,191.7 L648,191.1 L650,191.4 L652,191.3 L654,191.0 L656,191.0 L658,191.7 L660,192.7 L662,194.1 L664,195.4 L666,193.3 L668,194.5 L670,196.0 L672,193.1 L674,190.8 L676,189.0 L678,187.6 L680,187.3 L682,187.6 L684,187.7 L686,187.8 L688,187.8 L690,188.0 L692,188.3 L694,188.6 L696,188.8 L698,189.1 L700,190.0 L702,191.0 L704,192.2 L706,193.4 L708,193.4 L710,192.0 L712,190.8 L714,189.9 L716,189.2 L718,189.0 L720,189.2 L722,189.2 L724,189.3 L726,189.5 L728,189.8 L730,190.0 L732,190.3 L734,190.3 L736,190.3 L738,190.4 L740,190.4 L742,190.4 L744,190.4 L746,190.5 L748,190.3 L750,190.0 L752,189.5 L754,189.0 L756,188.6 L758,188.5 L760,189.0 L762,190.4 L764,192.3 L766,194.3 L768,192.4 L770,190.6 L772,189.0 L774,188.1 L776,187.6 L778,187.1 L780,186.7 L782,186.5 L784,186.6 L786,186.9 L788,187.3 L790,187.7 L792,188.0 L794,188.1 L796,188.3 L798,188.9 L800,189.6 L802,190.4 L804,190.9 L806,191.1 L808,190.9 L810,190.1 L812,189.0 L814,187.9 L816,188.7 L818,190.8 L820,193.6 L822,197.0 L824,197.6 L826,195.2 L828,193.0 L830,190.8 L832,192.2 L834,193.6 L836,195.0 L838,196.6 L840,194.3 L842,192.4 L844,190.9 L846,190.0 L848,189.5 L850,189.9 L852,190.5 L854,190.7 L856,190.5 L858,190.5 L860,191.4 L862,192.8 L864,194.7 L866,197.1 L868,195.8 L870,198.8 L872,196.4 L874,194.3 L876,192.3 L878,190.4 L880,189.0 L882,189.2 L884,190.4 L886,191.9 L888,193.6 L890,195.7 L892,196.0 L894,194.4 L896,193.3 L898,192.4 L900,191.6 L902,191.4 L904,191.1 L906,190.3 L908,189.2 L910,188.2 L912,187.4 L914,187.1 L916,187.3 L918,187.8 L920,188.5 L922,189.2 L924,189.7 L926,189.9 L928,189.9 L930,189.9 L932,189.9 L934,189.9 L936,189.9 L938,189.9 L940,190.0 L942,190.2 L944,190.6 L946,191.0 L948,193.4 L950,196.5 L952,199.8 L954,199.4 L956,195.4 L958,191.8 L960,189.3 L962,189.2 L964,189.3 L966,189.8 L968,190.3 L970,190.9 L972,191.4 L974,191.5 L976,191.2 L978,190.3 L980,189.2 L982,188.0 L984,187.1 L986,186.8 L988,187.0 L990,187.6 L992,188.3 L994,189.9 L996,191.8 L998,193.5 L1000,195.3 L1002,197.5 L1004,196.1 L1006,194.9 L1008,193.7 L1010,192.5 L1012,191.3 L1014,190.4 L1016,189.2 L1018,188.0 L1020,187.1 L1022,186.8 L1024,186.8 L1026,186.8 L1028,186.7 L1030,186.7 L1032,186.6 L1034,186.6 L1036,187.6 L1038,189.3 L1040,191.4 L1042,193.6 L1044,195.7 L1046,198.1 L1048,200.8 L1050,203.5 L1052,206.4 L1054,203.0 L1056,202.5 L1058,197.1 L1060,194.6 L1062,192.5 L1064,191.0 L1066,190.0 L1068,190.3 L1070,190.4 L1072,190.2 L1074,189.7 L1076,189.0 L1078,188.2 L1080,188.5 L1082,189.4 L1084,190.8 L1086,192.5 L1088,194.4 L1090,196.5 L1092,195.1 L1094,193.6 L1096,196.7 L1098,201.2 L1100,206.2 L1102,206.5 L1104,202.2 L1106,198.4 L1108,195.8 L1110,193.1 L1112,190.6 L1114,191.8 L1116,193.6 L1118,195.8 L1120,198.3 L1122,198.1 L1124,200.9 L1126,200.6 L1128,195.0 L1130,190.3 L1132,188.3 L1134,190.0 L1136,192.0 L1138,194.3 L1140,196.7 L1142,199.3 L1144,199.3 L1146,196.8 L1148,198.9 L1150,202.5 L1152,206.2 L1154,202.6 L1156,200.9 L1158,200.9 L1160,195.4 L1162,190.7 L1164,188.2 L1166,187.5 L1168,187.7 L1170,188.2 L1172,188.8 L1174,189.5 L1176,189.9 L1178,190.1 L1180,190.0 L1182,189.9 L1184,189.7 L1186,189.6 L1188,189.4 L1190,189.4 L1192,189.4 L1194,189.3 L1196,189.2 L1198,189.7 L1200,191.4 L1202,193.6 L1204,196.0 L1206,198.8 L1208,202.5 L1210,202.3 L1212,198.2 L1214,194.7 L1216,191.7 L1218,189.6 L1220,189.4 L1222,189.9 L1224,190.3 L1226,190.5 L1228,190.5 L1230,190.6 L1232,190.8 L1234,191.0 L1236,191.1 L1238,191.1 L1240,191.2 L1242,191.3 L1244,191.5 L1246,191.7 L1248,191.9 L1250,191.9 L1252,191.7 L1254,191.2 L1256,190.4 L1258,189.7 L1260,189.1 L1262,188.9 L1264,188.8 L1266,188.5 L1268,188.3 L1270,188.6 L1272,189.3 L1274,190.3 L1276,191.5 L1278,192.8 L1280,191.4 L1282,190.2 L1284,189.0 L1286,188.0 L1288,189.1 L1290,191.2 L1292,193.6 L1294,196.2 L1296,193.6 L1298,191.7 L1300,193.7 L1302,196.0 L1304,198.6 L1306,199.0 L1308,197.3 L1310,195.4 L1312,193.8 L1314,192.5 L1316,191.7 L1318,191.8 L1320,193.4 L1322,194.7 L1324,195.9 L1326,196.9 L1328,198.0 L1330,197.5 L1332,195.7 L1334,194.2 L1336,193.0 L1338,192.0 L1340,191.2 L1342,190.7 L1344,192.3 L1346,194.9 L1348,197.7 L1350,200.5 L1352,196.8 L1354,193.3 L1356,190.4 L1358,188.6 L1360,188.7 L1362,189.1 L1364,189.7 L1366,190.2 L1368,190.6 L1370,190.7 L1372,190.6 L1374,190.1 L1376,189.5 L1378,191.6 L1380,195.2 L1382,199.8 L1384,200.0 L1386,195.7 L1388,192.3 L1390,190.2 L1392,190.7 L1394,190.9 L1396,190.7 L1398,189.9 L1400,189.0 L1402,188.0 L1404,187.2 L1406,187.0 L1408,187.2 L1410,187.8 L1412,189.6 L1414,193.4 L1416,197.7 L1418,202.1 L1420,201.9 L1422,197.3 L1424,192.9 L1426,189.2 L1428,187.8 L1430,187.6 L1432,187.7 L1434,188.1 L1436,189.9 L1438,194.8 L1440,200.7 L1442,200.8 L1444,195.3 L1446,190.7 L1448,189.2 L1450,189.1 L1452,189.0 L1454,189.0 L1456,188.9 L1458,188.8 L1460,188.6 L1462,188.4 L1464,188.3 L1466,188.3 L1468,188.4 L1470,188.8 L1472,189.4 L1474,190.0 L1476,190.4 L1478,190.6 L1480,190.5 L1482,190.2 L1484,189.8 L1486,189.5 L1488,189.2 L1490,189.1 L1492,189.2 L1494,189.3 L1496,189.5 L1498,189.8 L1500,190.3 L1502,191.5 L1504,192.7 L1506,193.9 L1508,195.1 L1510,196.4 L1512,194.2 L1514,194.1 L1516,198.6 L1518,203.8 L1520,204.4 L1522,200.1 L1524,196.1 L1526,192.5 L1528,189.9 L1530,189.6 L1532,189.3 L1534,189.0 L1536,188.8 L1538,188.7 L1540,189.7 L1542,192.7 L1544,196.4 L1546,200.6 L1548,205.2 L1550,200.5 L1552,196.3 L1554,192.7 L1556,189.8 L1558,188.9 L1560,189.0 L1562,189.1 L1564,190.7 L1566,193.3 L1568,196.5 L1570,196.9 L1572,194.6 L1574,192.5 L1576,190.6 L1578,189.9 L1580,188.9 L1582,188.1 L1584,188.1 L1586,188.8 L1588,190.0 L1590,191.3 L1592,192.8 L1594,192.9 L1596,191.8 L1598,190.7 L1600,189.5 L1602,188.4 L1604,187.5 L1606,187.0 L1608,186.9 L1610,186.8 L1612,187.0 L1614,187.6 L1616,188.3 L1618,189.1 L1620,189.6 L1622,189.8 L1624,189.7 L1626,189.5 L1628,189.2 L1630,188.8 L1632,188.6 L1634,188.5 L1636,188.7 L1638,189.4 L1640,190.3 L1642,191.3 L1644,192.4 L1646,193.6 L1648,195.1 L1650,195.7 L1652,195.3 L1654,194.9 L1656,194.4 L1658,193.6 L1660,192.4 L1662,191.4 L1664,193.0 L1666,195.2 L1668,198.2 L1670,202.2 L1672,198.2 L1674,194.9 L1676,192.4 L1678,190.5 L1680,190.3 L1682,190.6 L1684,190.6 L1686,190.5 L1688,190.4 L1690,190.4 L1692,190.3 L1694,190.3 L1696,190.4 L1698,190.6 L1700,190.9 L1702,191.3 L1704,191.5 L1706,191.6 L1708,191.4 L1710,190.7 L1712,189.9 L1714,189.0 L1716,188.4 L1718,188.1 L1720,188.3 L1722,188.7 L1724,189.3 L1726,189.9 L1728,190.3 L1730,190.5 L1732,190.4 L1734,190.3 L1736,190.1 L1738,189.9 L1740,189.8 L1742,192.1 L1744,195.5 L1746,199.7 L1748,204.3 L1750,200.2 L1752,196.5 L1754,193.2 L1756,191.0 L1758,191.1 L1760,191.3 L1762,191.5 L1764,191.7 L1766,192.0 L1768,192.7 L1770,193.1 L1772,193.3 L1774,193.6 L1776,191.2 L1778,189.5 L1780,188.5 L1782,190.2 L1784,194.7 L1786,199.7 L1788,204.8 L1790,205.1 L1792,200.5 L1794,195.8 L1796,191.4 L1798,188.1 L1800,187.4 L1802,187.1 L1804,187.3 L1806,187.9 L1808,188.8 L1810,189.6 L1812,190.2 L1814,190.4 L1816,190.3 L1818,190.1 L1820,189.7 L1822,189.4 L1824,189.2 L1826,189.1 L1828,189.2 L1830,189.5 L1832,189.9 L1834,190.3 L1836,190.7 L1838,190.8 L1840,190.8 L1842,190.8 L1844,190.8 L1846,190.8 L1848,190.8 L1850,190.8 L1852,190.9 L1854,191.0 L1856,191.2 L1858,191.4 L1860,191.5 L1862,191.5 L1864,191.5 L1866,191.4 L1868,191.3 L1870,191.1 L1872,191.0 L1874,191.0 L1876,190.7 L1878,190.0 L1880,189.1 L1882,188.2 L1884,187.5 L1886,187.2 L1888,187.4 L1890,187.7 L1892,188.2 L1894,188.7 L1896,189.1 L1898,189.2 L1900,189.1 L1902,188.6 L1904,187.9 L1906,187.2 L1908,186.7 L1910,186.5 L1912,186.9 L1914,187.8 L1916,189.1 L1918,190.4 L1920,191.3 L1922,191.6 L1924,191.4 L1926,190.8 L1928,189.9 L1930,189.0 L1932,188.4 L1934,188.2 L1936,188.3 L1938,188.7 L1940,192.0 L1942,196.6 L1944,201.7 L1946,201.9 L1948,196.9 L1950,192.3 L1952,188.8 L1954,188.1 L1956,188.0 L1958,189.3 L1960,191.2 L1962,193.4 L1964,195.8 L1966,198.4 L1968,196.0 L1970,193.8 L1972,191.9 L1974,190.6 L1976,190.0 L1978,190.4 L1980,191.0 L1982,191.2 L1984,191.1 L1986,190.7 L1988,190.1 L1990,189.6 L1992,189.2 L1994,189.0 L1996,189.2 L1998,189.5 L2000,194.4 L2002,201.4 L2004,209.0 L2006,201.8 L2008,195.2 L2010,190.6 L2012,190.3 L2014,190.0 L2016,189.8 L2018,191.0 L2020,195.0 L2022,199.9 L2024,205.5 L2026,199.7 L2028,194.6 L2030,190.6 L2032,189.3 L2034,189.2 L2036,189.8 L2038,192.1 L2040,195.1 L2042,198.5 L2044,202.3 L2046,198.2 L2048,194.4 L2050,191.0 L2052,188.3 L2054,187.4 L2056,187.5 L2058,187.7 L2060,188.1 L2062,188.4 L2064,188.7 L2066,188.7 L2068,188.8 L2070,189.1 L2072,189.4 L2074,189.7 L2076,190.0 L2078,190.1 L2080,190.0 L2082,189.8 L2084,189.6 L2086,189.4 L2088,189.2 L2090,190.3 L2092,193.2 L2094,197.0 L2096,201.4 L2098,206.2 L2100,201.6 L2102,197.3 L2104,194.3 L2106,191.9 L2108,189.6 L2110,187.9 L2112,187.5 L2114,187.4 L2116,187.5 L2118,187.7 L2120,188.1 L2122,188.5 L2124,188.7 L2126,188.8 L2128,188.7 L2128,184 Z" fill="#ff9400"/>
<rect x="158" y="210" width="1" height="5" fill="#0b4ab5"/>
<rect x="285" y="210" width="4" height="5" fill="#0b4ab5"/><rect x="297" y="210" width="74" height="5" fill="#0b4ab5"/>
<rect x="376" y="210" width="4" height="5" fill="#0b4ab5"/><rect x="382" y="210" width="6" height="5" fill="#0b4ab5"/><rect x="391" y="210" width="2" height="5" fill="#0b4ab5"/><rect x="395" y="210" width="3" height="5" fill="#0b4ab5"/><rect x="401" y="210" width="6" height="5" fill="#0b4ab5"/><rect x="409" y="210" width="3" height="5" fill="#0b4ab5"/><rect x="415" y="210" width="2" height="5" fill="#0b4ab5"/><rect x="418" y="210" width="1" height="5" fill="#0b4ab5"/><rect x="422" y="210" width="3" height="5" fill="#0b4ab5"/><rect x="445" y="210" width="4" height="5" fill="#0b4ab5"/><rect x="452" y="210" width="10" height="5" fill="#0b4ab5"/><rect x="464" y="210" width="10" height="5" fill="#0b4ab5"/><rect x="477" y="210" width="3" height="5" fill="#0b4ab5"/><rect x="481" y="210" width="1" height="5" fill="#0b4ab5"/><rect x="484" y="210" width="2" height="5" fill="#0b4ab5"/><rect x="489" y="210" width="2" height="5" fill="#0b4ab5"/><rect x="492" y="210" width="10" height="5" fill="#0b4ab5"/><rect x="505" y="210" width="4" height="5" fill="#0b4ab5"/><rect x="510" y="210" width="1" height="5" fill="#0b4ab5"/><rect x="521" y="210" width="2" height="5" fill="#0b4ab5"/><rect x="524" y="210" width="1" height="5" fill="#0b4ab5"/><rect x="528" y="210" width="6" height="5" fill="#0b4ab5"/><rect x="536" y="210" width="1" height="5" fill="#0b4ab5"/><rect x="538" y="210" width="4" height="5" fill="#0b4ab5"/><rect x="543" y="210" width="2" height="5" fill="#0b4ab5"/><rect x="547" y="210" width="3" height="5" fill="#0b4ab5"/><rect x="552" y="210" width="10" height="5" fill="#0b4ab5"/><rect x="564" y="210" width="6" height="5" fill="#0b4ab5"/><rect x="572" y="210" width="1" height="5" fill="#0b4ab5"/><rect x="575" y="210" width="4" height="5" fill="#0b4ab5"/><rect x="581" y="210" width="2" height="5" fill="#0b4ab5"/><rect x="585" y="210" width="4" height="5" fill="#0b4ab5"/><rect x="607" y="210" width="2" height="5" fill="#0b4ab5"/><rect x="612" y="210" width="2" height="5" fill="#0b4ab5"/><rect x="616" y="210" width="4" height="5" fill="#0b4ab5"/><rect x="622" y="210" width="2" height="5" fill="#0b4ab5"/><rect x="626" y="210" width="1" height="5" fill="#0b4ab5"/><rect x="629" y="210" width="2" height="5" fill="#0b4ab5"/><rect x="634" y="210" width="2" height="5" fill="#0b4ab5"/><rect x="652" y="210" width="2" height="5" fill="#0b4ab5"/><rect x="656" y="210" width="1" height="5" fill="#0b4ab5"/><rect x="658" y="210" width="6" height="5" fill="#0b4ab5"/><rect x="666" y="210" width="10" height="5" fill="#0b4ab5"/><rect x="679" y="210" width="4" height="5" fill="#0b4ab5"/><rect x="684" y="210" width="2" height="5" fill="#0b4ab5"/><rect x="689" y="210" width="6" height="5" fill="#0b4ab5"/><rect x="710" y="210" width="2" height="5" fill="#0b4ab5"/><rect x="714" y="210" width="2" height="5" fill="#0b4ab5"/><rect x="718" y="210" width="10" height="5" fill="#0b4ab5"/><rect x="729" y="210" width="3" height="5" fill="#0b4ab5"/><rect x="734" y="210" width="2" height="5" fill="#0b4ab5"/><rect x="737" y="210" width="2" height="5" fill="#0b4ab5"/><rect x="741" y="210" width="2" height="5" fill="#0b4ab5"/><rect x="745" y="210" width="6" height="5" fill="#0b4ab5"/><rect x="752" y="210" width="6" height="5" fill="#0b4ab5"/><rect x="767" y="210" width="2" height="5" fill="#0b4ab5"/><rect x="772" y="210" width="3" height="5" fill="#0b4ab5"/><rect x="777" y="210" width="1" height="5" fill="#0b4ab5"/><rect x="780" y="210" width="3" height="5" fill="#0b4ab5"/><rect x="785" y="210" width="4" height="5" fill="#0b4ab5"/><rect x="790" y="210" width="1" height="5" fill="#0b4ab5"/><rect x="792" y="210" width="1" height="5" fill="#0b4ab5"/><rect x="795" y="210" width="2" height="5" fill="#0b4ab5"/><rect x="818" y="210" width="4" height="5" fill="#0b4ab5"/><rect x="824" y="210" width="3" height="5" fill="#0b4ab5"/><rect x="829" y="210" width="4" height="5" fill="#0b4ab5"/><rect x="835" y="210" width="2" height="5" fill="#0b4ab5"/><rect x="839" y="210" width="4" height="5" fill="#0b4ab5"/><rect x="846" y="210" width="2" height="5" fill="#0b4ab5"/><rect x="850" y="210" width="1" height="5" fill="#0b4ab5"/><rect x="853" y="210" width="6" height="5" fill="#0b4ab5"/><rect x="880" y="210" width="1" height="5" fill="#0b4ab5"/><rect x="883" y="210" width="10" height="5" fill="#0b4ab5"/><rect x="895" y="210" width="3" height="5" fill="#0b4ab5"/><rect x="900" y="210" width="1" height="5" fill="#0b4ab5"/><rect x="902" y="210" width="6" height="5" fill="#0b4ab5"/><rect x="926" y="210" width="4" height="5" fill="#0b4ab5"/><rect x="933" y="210" width="2" height="5" fill="#0b4ab5"/><rect x="937" y="210" width="1" height="5" fill="#0b4ab5"/><rect x="939" y="210" width="1" height="5" fill="#0b4ab5"/><rect x="941" y="210" width="3" height="5" fill="#0b4ab5"/><rect x="946" y="210" width="2" height="5" fill="#0b4ab5"/><rect x="950" y="210" width="1" height="5" fill="#0b4ab5"/><rect x="952" y="210" width="1" height="5" fill="#0b4ab5"/><rect x="955" y="210" width="2" height="5" fill="#0b4ab5"/><rect x="960" y="210" width="2" height="5" fill="#0b4ab5"/><rect x="965" y="210" width="10" height="5" fill="#0b4ab5"/><rect x="977" y="210" width="4" height="5" fill="#0b4ab5"/><rect x="983" y="210" width="1" height="5" fill="#0b4ab5"/><rect x="991" y="210" width="10" height="5" fill="#0b4ab5"/><rect x="1004" y="210" width="6" height="5" fill="#0b4ab5"/><rect x="1011" y="210" width="3" height="5" fill="#0b4ab5"/><rect x="1017" y="210" width="6" height="5" fill="#0b4ab5"/><rect x="1026" y="210" width="1" height="5" fill="#0b4ab5"/><rect x="1030" y="210" width="2" height="5" fill="#0b4ab5"/><rect x="1034" y="210" width="1" height="5" fill="#0b4ab5"/><rect x="1037" y="210" width="2" height="5" fill="#0b4ab5"/><rect x="1040" y="210" width="1" height="5" fill="#0b4ab5"/><rect x="1043" y="210" width="6" height="5" fill="#0b4ab5"/><rect x="1051" y="210" width="6" height="5" fill="#0b4ab5"/><rect x="1071" y="210" width="4" height="5" fill="#0b4ab5"/><rect x="1078" y="210" width="6" height="5" fill="#0b4ab5"/><rect x="1086" y="210" width="2" height="5" fill="#0b4ab5"/><rect x="1090" y="210" width="1" height="5" fill="#0b4ab5"/><rect x="1092" y="210" width="2" height="5" fill="#0b4ab5"/><rect x="1096" y="210" width="2" height="5" fill="#0b4ab5"/><rect x="1100" y="210" width="2" height="5" fill="#0b4ab5"/><rect x="1104" y="210" width="2" height="5" fill="#0b4ab5"/><rect x="1109" y="210" width="2" height="5" fill="#0b4ab5"/><rect x="1113" y="210" width="3" height="5" fill="#0b4ab5"/><rect x="1119" y="210" width="3" height="5" fill="#0b4ab5"/><rect x="1123" y="210" width="10" height="5" fill="#0b4ab5"/><rect x="1150" y="210" width="2" height="5" fill="#0b4ab5"/><rect x="1154" y="210" width="10" height="5" fill="#0b4ab5"/><rect x="1166" y="210" width="3" height="5" fill="#0b4ab5"/><rect x="1170" y="210" width="4" height="5" fill="#0b4ab5"/><rect x="1176" y="210" width="2" height="5" fill="#0b4ab5"/><rect x="1179" y="210" width="1" height="5" fill="#0b4ab5"/><rect x="1181" y="210" width="1" height="5" fill="#0b4ab5"/><rect x="1184" y="210" width="2" height="5" fill="#0b4ab5"/><rect x="1188" y="210" width="6" height="5" fill="#0b4ab5"/><rect x="1195" y="210" width="1" height="5" fill="#0b4ab5"/><rect x="1197" y="210" width="2" height="5" fill="#0b4ab5"/><rect x="1200" y="210" width="6" height="5" fill="#0b4ab5"/><rect x="1207" y="210" width="6" height="5" fill="#0b4ab5"/><rect x="1214" y="210" width="1" height="5" fill="#0b4ab5"/><rect x="1228" y="210" width="6" height="5" fill="#0b4ab5"/><rect x="1235" y="210" width="10" height="5" fill="#0b4ab5"/><rect x="1248" y="210" width="1" height="5" fill="#0b4ab5"/><rect x="1251" y="210" width="2" height="5" fill="#0b4ab5"/><rect x="1255" y="210" width="1" height="5" fill="#0b4ab5"/><rect x="1257" y="210" width="1" height="5" fill="#0b4ab5"/><rect x="1259" y="210" width="10" height="5" fill="#0b4ab5"/><rect x="1271" y="210" width="3" height="5" fill="#0b4ab5"/><rect x="1275" y="210" width="2" height="5" fill="#0b4ab5"/><rect x="1278" y="210" width="10" height="5" fill="#0b4ab5"/><rect x="1297" y="210" width="2" height="5" fill="#0b4ab5"/><rect x="1302" y="210" width="2" height="5" fill="#0b4ab5"/><rect x="1305" y="210" width="2" height="5" fill="#0b4ab5"/><rect x="1309" y="210" width="2" height="5" fill="#0b4ab5"/><rect x="1312" y="210" width="6" height="5" fill="#0b4ab5"/><rect x="1320" y="210" width="2" height="5" fill="#0b4ab5"/><rect x="1325" y="210" width="10" height="5" fill="#0b4ab5"/><rect x="1343" y="210" width="3" height="5" fill="#0b4ab5"/><rect x="1347" y="210" width="3" height="5" fill="#0b4ab5"/><rect x="1351" y="210" width="2" height="5" fill="#0b4ab5"/><rect x="1356" y="210" width="6" height="5" fill="#0b4ab5"/><rect x="1363" y="210" width="4" height="5" fill="#0b4ab5"/><rect x="1369" y="210" width="6" height="5" fill="#0b4ab5"/><rect x="1376" y="210" width="4" height="5" fill="#0b4ab5"/><rect x="1382" y="210" width="2" height="5" fill="#0b4ab5"/><rect x="1387" y="210" width="1" height="5" fill="#0b4ab5"/><rect x="1390" y="210" width="2" height="5" fill="#0b4ab5"/><rect x="1393" y="210" width="1" height="5" fill="#0b4ab5"/><rect x="1396" y="210" width="3" height="5" fill="#0b4ab5"/><rect x="1400" y="210" width="3" height="5" fill="#0b4ab5"/><rect x="1405" y="210" width="3" height="5" fill="#0b4ab5"/><rect x="1410" y="210" width="10" height="5" fill="#0b4ab5"/><rect x="1424" y="210" width="10" height="5" fill="#0b4ab5"/><rect x="1436" y="210" width="6" height="5" fill="#0b4ab5"/><rect x="1444" y="210" width="3" height="5" fill="#0b4ab5"/><rect x="1449" y="210" width="1" height="5" fill="#0b4ab5"/><rect x="1451" y="210" width="3" height="5" fill="#0b4ab5"/><rect x="1455" y="210" width="6" height="5" fill="#0b4ab5"/><rect x="1479" y="210" width="3" height="5" fill="#0b4ab5"/><rect x="1485" y="210" width="6" height="5" fill="#0b4ab5"/><rect x="1492" y="210" width="3" height="5" fill="#0b4ab5"/><rect x="1496" y="210" width="2" height="5" fill="#0b4ab5"/><rect x="1500" y="210" width="2" height="5" fill="#0b4ab5"/><rect x="1504" y="210" width="3" height="5" fill="#0b4ab5"/><rect x="1523" y="210" width="2" height="5" fill="#0b4ab5"/><rect x="1528" y="210" width="2" height="5" fill="#0b4ab5"/><rect x="1531" y="210" width="2" height="5" fill="#0b4ab5"/><rect x="1535" y="210" width="4" height="5" fill="#0b4ab5"/><rect x="1541" y="210" width="10" height="5" fill="#0b4ab5"/><rect x="1554" y="210" width="6" height="5" fill="#0b4ab5"/><rect x="1562" y="210" width="2" height="5" fill="#0b4ab5"/><rect x="1567" y="210" width="3" height="5" fill="#0b4ab5"/><rect x="1572" y="210" width="4" height="5" fill="#0b4ab5"/><rect x="1578" y="210" width="2" height="5" fill="#0b4ab5"/><rect x="1582" y="210" width="3" height="5" fill="#0b4ab5"/><rect x="1605" y="210" width="2" height="5" fill="#0b4ab5"/><rect x="1609" y="210" width="10" height="5" fill="#0b4ab5"/><rect x="1621" y="210" width="6" height="5" fill="#0b4ab5"/><rect x="1629" y="210" width="2" height="5" fill="#0b4ab5"/><rect x="1633" y="210" width="4" height="5" fill="#0b4ab5"/><rect x="1648" y="210" width="2" height="5" fill="#0b4ab5"/><rect x="1652" y="210" width="2" height="5" fill="#0b4ab5"/><rect x="1655" y="210" width="2" height="5" fill="#0b4ab5"/><rect x="1658" y="210" width="2" height="5" fill="#0b4ab5"/><rect x="1663" y="210" width="2" height="5" fill="#0b4ab5"/><rect x="1667" y="210" width="10" height="5" fill="#0b4ab5"/><rect x="1679" y="210" width="6" height="5" fill="#0b4ab5"/><rect x="1702" y="210" width="2" height="5" fill="#0b4ab5"/><rect x="1705" y="210" width="6" height="5" fill="#0b4ab5"/><rect x="1712" y="210" width="2" height="5" fill="#0b4ab5"/><rect x="1716" y="210" width="3" height="5" fill="#0b4ab5"/><rect x="1722" y="210" width="1" height="5" fill="#0b4ab5"/><rect x="1724" y="210" width="3" height="5" fill="#0b4ab5"/><rect x="1730" y="210" width="6" height="5" fill="#0b4ab5"/><rect x="1738" y="210" width="4" height="5" fill="#0b4ab5"/><rect x="1759" y="210" width="2" height="5" fill="#0b4ab5"/><rect x="1763" y="210" width="4" height="5" fill="#0b4ab5"/><rect x="1770" y="210" width="1" height="5" fill="#0b4ab5"/><rect x="1773" y="210" width="10" height="5" fill="#0b4ab5"/><rect x="1799" y="210" width="6" height="5" fill="#0b4ab5"/><rect x="1807" y="210" width="6" height="5" fill="#0b4ab5"/><rect x="1815" y="210" width="6" height="5" fill="#0b4ab5"/><rect x="1822" y="210" width="3" height="5" fill="#0b4ab5"/><rect x="1828" y="210" width="2" height="5" fill="#0b4ab5"/><rect x="1832" y="210" width="6" height="5" fill="#0b4ab5"/><rect x="1852" y="210" width="10" height="5" fill="#0b4ab5"/><rect x="1865" y="210" width="6" height="5" fill="#0b4ab5"/><rect x="1873" y="210" width="2" height="5" fill="#0b4ab5"/><rect x="1878" y="210" width="3" height="5" fill="#0b4ab5"/><rect x="1884" y="210" width="1" height="5" fill="#0b4ab5"/><rect x="1909" y="210" width="6" height="5" fill="#0b4ab5"/><rect x="1917" y="210" width="6" height="5" fill="#0b4ab5"/><rect x="1925" y="210" width="10" height="5" fill="#0b4ab5"/><rect x="1936" y="210" width="3" height="5" fill="#0b4ab5"/><rect x="1942" y="210" width="1" height="5" fill="#0b4ab5"/><rect x="1944" y="210" width="2" height="5" fill="#0b4ab5"/><rect x="1948" y="210" width="2" height="5" fill="#0b4ab5"/><rect x="1952" y="210" width="4" height="5" fill="#0b4ab5"/><rect x="1958" y="210" width="1" height="5" fill="#0b4ab5"/><rect x="1962" y="210" width="4" height="5" fill="#0b4ab5"/><rect x="1968" y="210" width="6" height="5" fill="#0b4ab5"/><rect x="1994" y="210" width="6" height="5" fill="#0b4ab5"/><rect x="2002" y="210" width="4" height="5" fill="#0b4ab5"/><rect x="2008" y="210" width="3" height="5" fill="#0b4ab5"/><rect x="2014" y="210" width="2" height="5" fill="#0b4ab5"/><rect x="2033" y="210" width="10" height="5" fill="#0b4ab5"/><rect x="2044" y="210" width="6" height="5" fill="#0b4ab5"/><rect x="2052" y="210" width="6" height="5" fill="#0b4ab5"/><rect x="2059" y="210" width="2" height="5" fill="#0b4ab5"/><rect x="2063" y="210" width="3" height="5" fill="#0b4ab5"/><rect x="2069" y="210" width="1" height="5" fill="#0b4ab5"/><rect x="2071" y="210" width="1" height="5" fill="#0b4ab5"/><rect x="2075" y="210" width="3" height="5" fill="#0b4ab5"/><rect x="2080" y="210" width="4" height="5" fill="#0b4ab5"/><rect x="2094" y="210" width="2" height="5" fill="#0b4ab5"/><rect x="2099" y="210" width="4" height="5" fill="#0b4ab5"/><rect x="2105" y="210" width="10" height="5" fill="#0b4ab5"/><rect x="2118" y="210" width="3" height="5" fill="#0b4ab5"/><rect x="2123" y="210" width="2" height="5" fill="#0b4ab5"/><rect x="2127" y="210" width="9" height="5" fill="#0b4ab5"/>
<path d="M281,247 C285,238 287,222 293,222 L2128,222 L2132,247 Z" fill="#ffe900"/>
<path d="M281,247 C283,240 285,226 290,222 L300,222 L296,232 Z" fill="#ff9400"/>
<path d="M292,222 L292,235.0 L294,238.7 L296,238.7 L298,235.1 L300,231.7 L302,228.8 L304,228.0 L306,230.2 L308,232.5 L310,235.1 L312,235.0 L314,232.2 L316,229.6 L318,228.4 L320,232.0 L322,236.2 L324,236.3 L326,232.2 L328,228.9 L330,226.2 L332,224.5 L334,224.2 L336,224.4 L338,224.4 L340,224.3 L342,224.0 L344,223.7 L346,223.4 L348,223.1 L350,224.0 L352,228.3 L354,234.5 L356,242.2 L358,242.4 L360,234.9 L362,229.5 L364,229.4 L366,231.2 L368,231.2 L370,229.5 L372,228.1 L374,226.8 L376,225.7 L378,224.8 L380,224.3 L382,225.2 L384,226.6 L386,228.3 L388,230.3 L390,232.5 L392,234.9 L394,234.9 L396,232.5 L398,230.3 L400,228.2 L402,226.4 L404,224.8 L406,223.7 L408,223.3 L410,223.2 L412,223.2 L414,223.2 L416,223.1 L418,223.0 L420,222.9 L422,222.8 L424,222.8 L426,222.7 L428,222.7 L430,222.8 L432,222.9 L434,223.0 L436,223.2 L438,223.3 L440,223.3 L442,223.4 L444,223.3 L446,223.2 L448,223.0 L450,222.8 L452,222.6 L454,222.4 L456,222.3 L458,222.3 L460,222.5 L462,222.8 L464,223.1 L466,223.5 L468,223.8 L470,224.0 L472,224.1 L474,224.0 L476,223.9 L478,223.7 L480,223.4 L482,223.2 L484,223.0 L486,222.9 L488,222.9 L490,223.0 L492,223.7 L494,226.3 L496,229.8 L498,234.0 L500,238.8 L502,234.3 L504,230.2 L506,226.7 L508,224.2 L510,223.3 L512,223.0 L514,222.8 L516,222.7 L518,222.7 L520,222.7 L522,222.7 L524,222.8 L526,222.8 L528,222.9 L530,222.9 L532,222.9 L534,222.9 L536,222.9 L538,222.8 L540,222.8 L542,222.7 L544,222.7 L546,222.6 L548,222.6 L550,222.7 L552,222.7 L554,222.8 L556,222.9 L558,223.0 L560,223.0 L562,223.1 L564,223.0 L566,223.0 L568,222.9 L570,222.7 L572,222.6 L574,222.5 L576,222.5 L578,222.5 L580,222.4 L582,222.4 L584,222.3 L586,222.2 L588,222.1 L590,222.0 L592,222.0 L594,222.1 L596,223.8 L598,226.9 L600,230.9 L602,235.5 L604,231.5 L606,228.1 L608,225.3 L610,223.7 L612,223.5 L614,223.3 L616,223.1 L618,222.9 L620,222.8 L622,222.7 L624,222.7 L626,222.7 L628,222.7 L630,222.7 L632,222.6 L634,222.6 L636,222.6 L638,222.6 L640,222.6 L642,222.6 L644,222.7 L646,222.7 L648,222.7 L650,222.7 L652,222.8 L654,222.8 L656,222.8 L658,222.9 L660,223.0 L662,223.1 L664,223.2 L666,223.5 L668,225.0 L670,227.1 L672,229.7 L674,232.7 L676,236.0 L678,239.7 L680,243.6 L682,239.7 L684,236.0 L686,232.7 L688,229.8 L690,227.3 L692,225.3 L694,223.9 L696,223.6 L698,223.6 L700,223.6 L702,223.6 L704,223.6 L706,223.6 L708,223.6 L710,223.6 L712,223.6 L714,223.6 L716,223.5 L718,223.4 L720,223.2 L722,223.1 L724,223.0 L726,222.9 L728,222.9 L730,223.5 L732,225.6 L734,228.6 L736,232.2 L738,236.3 L740,232.7 L742,229.4 L744,226.7 L746,224.7 L748,224.3 L750,224.2 L752,224.2 L754,224.2 L756,224.1 L758,224.1 L760,224.4 L762,226.2 L764,228.8 L766,232.1 L768,236.0 L770,240.5 L772,240.4 L774,235.7 L776,231.7 L778,228.4 L780,225.8 L782,224.1 L784,223.9 L786,224.0 L788,224.1 L790,224.1 L792,224.1 L794,224.2 L796,224.2 L798,224.2 L800,224.3 L802,224.3 L804,224.3 L806,224.2 L808,224.2 L810,224.1 L812,224.0 L814,224.0 L816,224.0 L818,223.9 L820,223.8 L822,223.6 L824,223.2 L826,222.9 L828,222.6 L830,222.4 L832,222.4 L834,222.4 L836,222.6 L838,222.9 L840,223.3 L842,223.6 L844,223.9 L846,224.1 L848,224.1 L850,224.0 L852,224.0 L854,223.9 L856,223.8 L858,223.7 L860,223.6 L862,223.6 L864,223.5 L866,223.3 L868,223.0 L870,222.7 L872,222.4 L874,222.2 L876,222.1 L878,222.0 L880,223.7 L882,226.8 L884,230.8 L886,235.5 L888,240.8 L890,246.7 L892,240.8 L894,235.6 L896,231.1 L898,227.6 L900,225.0 L902,225.2 L904,228.2 L906,231.9 L908,235.9 L910,240.4 L912,235.7 L914,231.5 L916,228.0 L918,225.2 L920,223.7 L922,223.6 L924,223.6 L926,223.5 L928,223.3 L930,223.1 L932,222.9 L934,222.7 L936,222.6 L938,222.6 L940,222.6 L942,222.5 L944,222.5 L946,222.4 L948,222.3 L950,222.3 L952,222.3 L954,222.3 L956,222.3 L958,222.3 L960,222.3 L962,222.3 L964,222.3 L966,222.4 L968,222.4 L970,222.4 L972,222.4 L974,222.5 L976,222.5 L978,222.5 L980,222.6 L982,222.6 L984,222.6 L986,222.8 L988,223.9 L990,225.7 L992,228.0 L994,230.6 L996,233.4 L998,236.4 L1000,239.6 L1002,242.9 L1004,239.2 L1006,235.7 L1008,232.5 L1010,229.7 L1012,227.3 L1014,225.2 L1016,223.6 L1018,222.7 L1020,222.6 L1022,222.5 L1024,222.4 L1026,222.4 L1028,222.4 L1030,222.6 L1032,222.9 L1034,223.2 L1036,223.6 L1038,223.9 L1040,224.2 L1042,224.3 L1044,224.2 L1046,224.2 L1048,224.2 L1050,224.1 L1052,224.0 L1054,224.0 L1056,224.0 L1058,224.0 L1060,223.8 L1062,223.6 L1064,223.3 L1066,223.0 L1068,222.7 L1070,222.5 L1072,222.4 L1074,222.5 L1076,224.3 L1078,227.4 L1080,231.5 L1082,236.2 L1084,241.4 L1086,236.6 L1088,232.3 L1090,228.6 L1092,225.6 L1094,223.9 L1096,223.8 L1098,223.6 L1100,223.6 L1102,223.7 L1104,224.1 L1106,224.6 L1108,225.3 L1110,226.0 L1112,226.8 L1114,227.6 L1116,228.4 L1118,227.6 L1120,226.8 L1122,226.1 L1124,225.4 L1126,224.8 L1128,224.3 L1130,223.9 L1132,223.7 L1134,223.7 L1136,223.8 L1138,223.9 L1140,224.0 L1142,224.1 L1144,224.2 L1146,224.2 L1148,224.2 L1150,224.2 L1152,224.2 L1154,224.1 L1156,224.1 L1158,224.0 L1160,225.6 L1162,228.6 L1164,232.4 L1166,237.0 L1168,242.1 L1170,242.2 L1172,237.0 L1174,242.9 L1176,236.3 L1178,230.7 L1180,226.3 L1182,223.7 L1184,223.4 L1186,223.0 L1188,222.8 L1190,222.6 L1192,222.5 L1194,222.5 L1196,222.7 L1198,222.9 L1200,223.2 L1202,223.4 L1204,223.6 L1206,223.7 L1208,223.9 L1210,224.5 L1212,225.4 L1214,226.4 L1216,227.6 L1218,229.0 L1220,229.0 L1222,227.5 L1224,228.4 L1226,231.8 L1228,235.8 L1230,235.9 L1232,232.1 L1234,228.9 L1236,229.7 L1238,234.6 L1240,240.3 L1242,240.2 L1244,234.3 L1246,229.2 L1248,226.5 L1250,225.1 L1252,224.0 L1254,223.3 L1256,223.3 L1258,223.5 L1260,223.7 L1262,223.9 L1264,224.1 L1266,224.2 L1268,224.2 L1270,224.1 L1272,224.0 L1274,223.8 L1276,223.7 L1278,223.5 L1280,223.4 L1282,223.4 L1284,223.4 L1286,223.3 L1288,223.1 L1290,223.1 L1292,223.4 L1294,224.0 L1296,224.7 L1298,225.7 L1300,226.7 L1302,227.9 L1304,226.7 L1306,225.6 L1308,224.7 L1310,223.8 L1312,223.2 L1314,222.7 L1316,222.5 L1318,222.5 L1320,222.5 L1322,222.4 L1324,222.4 L1326,222.4 L1328,222.4 L1330,222.4 L1332,222.6 L1334,222.7 L1336,222.9 L1338,223.1 L1340,223.2 L1342,223.2 L1344,223.2 L1346,223.1 L1348,223.3 L1350,224.8 L1352,227.1 L1354,230.0 L1356,233.5 L1358,237.5 L1360,241.9 L1362,237.7 L1364,233.9 L1366,230.6 L1368,227.7 L1370,225.3 L1372,223.6 L1374,223.1 L1376,223.0 L1378,222.9 L1380,222.7 L1382,222.6 L1384,222.4 L1386,222.4 L1388,222.4 L1390,222.4 L1392,222.6 L1394,222.7 L1396,222.9 L1398,223.1 L1400,223.2 L1402,223.2 L1404,223.2 L1406,223.2 L1408,223.2 L1410,223.2 L1412,223.2 L1414,223.2 L1416,223.2 L1418,223.2 L1420,223.3 L1422,223.3 L1424,223.3 L1426,223.3 L1428,223.3 L1430,223.3 L1432,223.3 L1434,223.4 L1436,223.5 L1438,223.6 L1440,223.8 L1442,224.0 L1444,224.1 L1446,224.1 L1448,224.1 L1450,224.0 L1452,223.6 L1454,223.2 L1456,222.8 L1458,222.4 L1460,222.1 L1462,222.0 L1464,222.2 L1466,223.0 L1468,224.2 L1470,225.6 L1472,227.1 L1474,228.6 L1476,230.2 L1478,231.6 L1480,231.6 L1482,230.0 L1484,228.4 L1486,227.0 L1488,226.5 L1490,230.0 L1492,234.5 L1494,234.5 L1496,230.0 L1498,226.4 L1500,223.9 L1502,223.3 L1504,223.4 L1506,225.6 L1508,229.5 L1510,234.7 L1512,240.8 L1514,240.8 L1516,234.8 L1518,229.7 L1520,230.5 L1522,230.5 L1524,228.4 L1526,227.2 L1528,226.2 L1530,225.3 L1532,225.1 L1534,229.6 L1536,236.1 L1538,244.0 L1540,243.9 L1542,235.8 L1544,229.2 L1546,225.2 L1548,228.5 L1550,232.8 L1552,238.0 L1554,244.0 L1556,238.0 L1558,232.8 L1560,228.3 L1562,224.9 L1564,223.1 L1566,223.5 L1568,224.1 L1570,225.4 L1572,228.1 L1574,231.5 L1576,235.3 L1578,239.6 L1580,244.1 L1582,244.2 L1584,239.7 L1586,235.4 L1588,231.5 L1590,227.9 L1592,224.9 L1594,222.8 L1596,222.2 L1598,222.2 L1600,222.3 L1602,222.5 L1604,222.8 L1606,223.1 L1608,223.4 L1610,223.5 L1612,223.6 L1614,223.6 L1616,223.6 L1618,223.6 L1620,223.6 L1622,223.6 L1624,223.6 L1626,223.6 L1628,226.4 L1630,231.5 L1632,238.0 L1634,245.6 L1636,237.3 L1638,230.3 L1640,225.0 L1642,222.1 L1644,222.1 L1646,222.3 L1648,222.6 L1650,222.9 L1652,223.2 L1654,223.7 L1656,225.1 L1658,226.9 L1660,229.1 L1662,231.7 L1664,229.2 L1666,227.0 L1668,225.2 L1670,224.0 L1672,223.7 L1674,223.7 L1676,223.8 L1678,223.9 L1680,224.1 L1682,224.2 L1684,224.3 L1686,224.3 L1688,224.3 L1690,224.8 L1692,227.0 L1694,230.3 L1696,234.4 L1698,239.1 L1700,233.9 L1702,229.5 L1704,226.0 L1706,225.0 L1708,226.8 L1710,229.0 L1712,231.4 L1714,234.0 L1716,236.6 L1718,234.1 L1720,231.7 L1722,232.8 L1724,236.5 L1726,240.7 L1728,240.4 L1730,235.9 L1732,231.9 L1734,229.0 L1736,227.5 L1738,226.2 L1740,225.0 L1742,224.0 L1744,223.4 L1746,223.2 L1748,223.2 L1750,223.3 L1752,223.5 L1754,223.7 L1756,225.6 L1758,228.8 L1760,232.9 L1762,237.7 L1764,242.9 L1766,242.7 L1768,236.9 L1770,231.8 L1772,228.9 L1774,227.4 L1776,228.7 L1778,231.0 L1780,233.7 L1782,236.7 L1784,234.3 L1786,232.1 L1788,230.1 L1790,228.2 L1792,226.5 L1794,225.1 L1796,224.0 L1798,223.7 L1800,223.7 L1802,223.6 L1804,223.6 L1806,223.6 L1808,223.6 L1810,223.5 L1812,223.4 L1814,223.2 L1816,223.1 L1818,223.0 L1820,222.9 L1822,222.8 L1824,222.9 L1826,223.1 L1828,223.3 L1830,223.6 L1832,223.8 L1834,224.0 L1836,224.1 L1838,224.1 L1840,224.0 L1842,223.8 L1844,223.6 L1846,223.3 L1848,223.1 L1850,223.0 L1852,222.9 L1854,222.9 L1856,223.0 L1858,223.0 L1860,223.1 L1862,223.1 L1864,223.2 L1866,223.2 L1868,223.2 L1870,223.2 L1872,223.2 L1874,223.2 L1876,223.3 L1878,223.3 L1880,223.3 L1882,223.3 L1884,223.3 L1886,223.4 L1888,223.5 L1890,223.7 L1892,224.8 L1894,226.8 L1896,229.3 L1898,232.3 L1900,235.5 L1902,238.9 L1904,235.0 L1906,231.4 L1908,228.8 L1910,227.5 L1912,226.3 L1914,225.4 L1916,227.3 L1918,230.4 L1920,234.0 L1922,238.1 L1924,243.4 L1926,242.5 L1928,238.2 L1930,234.3 L1932,230.8 L1934,227.7 L1936,226.1 L1938,227.3 L1940,228.6 L1942,230.0 L1944,231.6 L1946,230.1 L1948,228.7 L1950,227.4 L1952,226.3 L1954,225.3 L1956,224.4 L1958,223.8 L1960,223.5 L1962,223.6 L1964,223.7 L1966,223.8 L1968,224.0 L1970,224.0 L1972,224.1 L1974,224.6 L1976,225.5 L1978,226.6 L1980,228.0 L1982,227.7 L1984,225.9 L1986,224.4 L1988,223.3 L1990,222.9 L1992,223.1 L1994,223.3 L1996,223.6 L1998,223.8 L2000,224.0 L2002,224.1 L2004,224.0 L2006,223.9 L2008,223.7 L2010,223.5 L2012,223.3 L2014,223.1 L2016,223.0 L2018,223.0 L2020,223.0 L2022,223.1 L2024,223.1 L2026,223.2 L2028,223.2 L2030,223.2 L2032,223.3 L2034,223.2 L2036,223.5 L2038,223.9 L2040,224.6 L2042,225.3 L2044,226.2 L2046,225.2 L2048,224.3 L2050,223.6 L2052,223.1 L2054,222.9 L2056,223.1 L2058,223.2 L2060,223.2 L2062,223.3 L2064,223.3 L2066,223.5 L2068,223.7 L2070,223.9 L2072,224.1 L2074,224.3 L2076,224.4 L2078,224.4 L2080,224.4 L2082,224.2 L2084,224.1 L2086,223.9 L2088,223.8 L2090,223.7 L2092,223.6 L2094,223.7 L2096,223.7 L2098,223.8 L2100,223.8 L2102,223.9 L2104,224.2 L2106,224.7 L2108,227.8 L2110,232.0 L2112,237.2 L2114,243.2 L2116,242.9 L2118,236.5 L2120,231.0 L2122,226.6 L2124,223.6 L2126,222.8 L2128,222.8 L2128,222 Z" fill="#ff9400"/>
<rect x="286" y="248" width="2" height="5" fill="#0b4ab5"/><rect x="289" y="248" width="1.5" height="5" fill="#5d88d0"/><rect x="291.0" y="248" width="2" height="5" fill="#0b4ab5"/><rect x="294.0" y="248" width="1" height="5" fill="#3d6fc4"/>
<rect x="302" y="248" width="1" height="5" fill="#5d88d0"/><rect x="303.5" y="248" width="1" height="5" fill="#0b4ab5"/><rect x="305.0" y="248" width="2" height="5" fill="#3d6fc4"/><rect x="308.5" y="248" width="0.5" height="5" fill="#0b4ab5"/>
<rect x="314" y="248" width="1" height="5" fill="#0b4ab5"/><rect x="316" y="248" width="1.5" height="5" fill="#0b4ab5"/><rect x="318.0" y="248" width="3" height="5" fill="#5d88d0"/><rect x="322.0" y="248" width="2" height="5" fill="#0b4ab5"/><rect x="325.0" y="248" width="1" height="5" fill="#0b4ab5"/><rect x="327.0" y="248" width="1" height="5" fill="#3d6fc4"/><rect x="329.0" y="248" width="1" height="5" fill="#0b4ab5"/><rect x="330.5" y="248" width="1.5" height="5" fill="#5d88d0"/><rect x="332.5" y="248" width="1" height="5" fill="#0b4ab5"/><rect x="334.5" y="248" width="1" height="5" fill="#0b4ab5"/><rect x="336.5" y="248" width="2" height="5" fill="#5d88d0"/><rect x="339.0" y="248" width="2" height="5" fill="#3d6fc4"/><rect x="342.0" y="248" width="1.5" height="5" fill="#5d88d0"/><rect x="344.0" y="248" width="1.5" height="5" fill="#5d88d0"/><rect x="347.0" y="248" width="1" height="5" fill="#5d88d0"/><rect x="349.0" y="248" width="1" height="5" fill="#0b4ab5"/><rect x="351.5" y="248" width="3" height="5" fill="#0b4ab5"/><rect x="355.0" y="248" width="1" height="5" fill="#0b4ab5"/><rect x="356.5" y="248" width="2" height="5" fill="#3d6fc4"/><rect x="359.5" y="248" width="2" height="5" fill="#0b4ab5"/>
<rect x="376" y="248" width="1" height="5" fill="#0b4ab5"/><rect x="378.5" y="248" width="1.5" height="5" fill="#3d6fc4"/><rect x="381.0" y="248" width="2" height="5" fill="#0b4ab5"/><rect x="384.0" y="248" width="1" height="5" fill="#3d6fc4"/>
<rect x="424" y="248" width="1.5" height="5" fill="#0b4ab5"/><rect x="427" y="248" width="1.5" height="5" fill="#0b4ab5"/><rect x="430" y="248" width="1.5" height="5" fill="#0b4ab5"/><rect x="433" y="248" width="1.5" height="5" fill="#0b4ab5"/><rect x="436" y="248" width="1.5" height="5" fill="#0b4ab5"/><rect x="462" y="248" width="4" height="5" fill="#0b4ab5"/><rect x="495" y="248" width="1.5" height="5" fill="#0b4ab5"/><rect x="498" y="248" width="1.5" height="5" fill="#0b4ab5"/><rect x="501" y="248" width="1.5" height="5" fill="#0b4ab5"/><rect x="504" y="248" width="1.5" height="5" fill="#0b4ab5"/><rect x="507" y="248" width="1.5" height="5" fill="#0b4ab5"/><rect x="529" y="248" width="1.5" height="5" fill="#0b4ab5"/><rect x="532" y="248" width="1.5" height="5" fill="#0b4ab5"/><rect x="549" y="248" width="3" height="5" fill="#0b4ab5"/><rect x="565" y="248" width="3" height="5" fill="#0b4ab5"/><rect x="586" y="248" width="1.5" height="5" fill="#0b4ab5"/><rect x="589" y="248" width="1.5" height="5" fill="#0b4ab5"/><rect x="592" y="248" width="1.5" height="5" fill="#0b4ab5"/><rect x="595" y="248" width="1.5" height="5" fill="#0b4ab5"/><rect x="598" y="248" width="1.5" height="5" fill="#0b4ab5"/><rect x="635" y="248" width="2" height="5" fill="#0b4ab5"/><rect x="657" y="248" width="1.5" height="5" fill="#0b4ab5"/><rect x="660" y="248" width="1.5" height="5" fill="#0b4ab5"/><rect x="663" y="248" width="1.5" height="5" fill="#0b4ab5"/><rect x="689" y="248" width="3" height="5" fill="#0b4ab5"/><rect x="698" y="248" width="1.5" height="5" fill="#7aa0dd"/><rect x="710" y="248" width="4" height="5" fill="#0b4ab5"/><rect x="724" y="248" width="2" height="5" fill="#0b4ab5"/><rect x="733" y="248" width="4" height="5" fill="#0b4ab5"/><rect x="767" y="248" width="1.5" height="5" fill="#0b4ab5"/><rect x="770" y="248" width="1.5" height="5" fill="#0b4ab5"/><rect x="773" y="248" width="1.5" height="5" fill="#0b4ab5"/><rect x="776" y="248" width="1.5" height="5" fill="#0b4ab5"/><rect x="789" y="248" width="1.5" height="5" fill="#0b4ab5"/><rect x="809" y="248" width="3" height="5" fill="#0b4ab5"/><rect x="831" y="248" width="1.5" height="5" fill="#0b4ab5"/><rect x="834" y="248" width="1.5" height="5" fill="#0b4ab5"/><rect x="868" y="248" width="3" height="5" fill="#0b4ab5"/><rect x="879" y="248" width="1.5" height="5" fill="#0b4ab5"/><rect x="898" y="248" width="1.5" height="5" fill="#0b4ab5"/><rect x="901" y="248" width="1.5" height="5" fill="#0b4ab5"/><rect x="904" y="248" width="1.5" height="5" fill="#0b4ab5"/><rect x="917" y="248" width="2" height="5" fill="#0b4ab5"/><rect x="945" y="248" width="1.5" height="5" fill="#0b4ab5"/><rect x="948" y="248" width="1.5" height="5" fill="#0b4ab5"/><rect x="983" y="248" width="1.5" height="5" fill="#0b4ab5"/><rect x="986" y="248" width="1.5" height="5" fill="#0b4ab5"/><rect x="989" y="248" width="1.5" height="5" fill="#0b4ab5"/><rect x="992" y="248" width="1.5" height="5" fill="#0b4ab5"/><rect x="995" y="248" width="1.5" height="5" fill="#0b4ab5"/><rect x="1028" y="248" width="1.5" height="5" fill="#7aa0dd"/><rect x="1040" y="248" width="1.5" height="5" fill="#0b4ab5"/><rect x="1043" y="248" width="1.5" height="5" fill="#0b4ab5"/><rect x="1046" y="248" width="1.5" height="5" fill="#0b4ab5"/><rect x="1073" y="248" width="1.5" height="5" fill="#7aa0dd"/><rect x="1079" y="248" width="1.5" height="5" fill="#0b4ab5"/><rect x="1082" y="248" width="1.5" height="5" fill="#0b4ab5"/><rect x="1085" y="248" width="1.5" height="5" fill="#0b4ab5"/><rect x="1088" y="248" width="1.5" height="5" fill="#0b4ab5"/><rect x="1091" y="248" width="1.5" height="5" fill="#0b4ab5"/><rect x="1126" y="248" width="1.5" height="5" fill="#0b4ab5"/><rect x="1148" y="248" width="3" height="5" fill="#0b4ab5"/><rect x="1163" y="248" width="4" height="5" fill="#0b4ab5"/><rect x="1171" y="248" width="1.5" height="5" fill="#0b4ab5"/><rect x="1174" y="248" width="1.5" height="5" fill="#0b4ab5"/><rect x="1177" y="248" width="1.5" height="5" fill="#0b4ab5"/><rect x="1180" y="248" width="1.5" height="5" fill="#0b4ab5"/><rect x="1183" y="248" width="1.5" height="5" fill="#0b4ab5"/><rect x="1196" y="248" width="3" height="5" fill="#0b4ab5"/><rect x="1209" y="248" width="1.5" height="5" fill="#0b4ab5"/><rect x="1212" y="248" width="1.5" height="5" fill="#0b4ab5"/><rect x="1215" y="248" width="1.5" height="5" fill="#0b4ab5"/><rect x="1218" y="248" width="1.5" height="5" fill="#0b4ab5"/><rect x="1228" y="248" width="1.5" height="5" fill="#0b4ab5"/><rect x="1231" y="248" width="1.5" height="5" fill="#0b4ab5"/><rect x="1234" y="248" width="1.5" height="5" fill="#0b4ab5"/><rect x="1237" y="248" width="1.5" height="5" fill="#0b4ab5"/><rect x="1264" y="248" width="1.5" height="5" fill="#0b4ab5"/><rect x="1281" y="248" width="4" height="5" fill="#0b4ab5"/><rect x="1303" y="248" width="1.5" height="5" fill="#0b4ab5"/><rect x="1306" y="248" width="1.5" height="5" fill="#0b4ab5"/><rect x="1309" y="248" width="1.5" height="5" fill="#0b4ab5"/><rect x="1312" y="248" width="1.5" height="5" fill="#0b4ab5"/><rect x="1343" y="248" width="1.5" height="5" fill="#0b4ab5"/><rect x="1346" y="248" width="1.5" height="5" fill="#0b4ab5"/><rect x="1349" y="248" width="1.5" height="5" fill="#0b4ab5"/><rect x="1352" y="248" width="1.5" height="5" fill="#0b4ab5"/><rect x="1385" y="248" width="4" height="5" fill="#0b4ab5"/><rect x="1409" y="248" width="1.5" height="5" fill="#0b4ab5"/><rect x="1424" y="248" width="4" height="5" fill="#0b4ab5"/><rect x="1444" y="248" width="2" height="5" fill="#0b4ab5"/><rect x="1450" y="248" width="1.5" height="5" fill="#0b4ab5"/><rect x="1453" y="248" width="1.5" height="5" fill="#0b4ab5"/><rect x="1469" y="248" width="2" height="5" fill="#0b4ab5"/><rect x="1478" y="248" width="1.5" height="5" fill="#7aa0dd"/><rect x="1501" y="248" width="1.5" height="5" fill="#0b4ab5"/><rect x="1507" y="248" width="1.5" height="5" fill="#0b4ab5"/><rect x="1510" y="248" width="1.5" height="5" fill="#0b4ab5"/><rect x="1513" y="248" width="1.5" height="5" fill="#0b4ab5"/><rect x="1530" y="248" width="1.5" height="5" fill="#0b4ab5"/><rect x="1533" y="248" width="1.5" height="5" fill="#0b4ab5"/><rect x="1536" y="248" width="1.5" height="5" fill="#0b4ab5"/><rect x="1539" y="248" width="1.5" height="5" fill="#0b4ab5"/><rect x="1542" y="248" width="1.5" height="5" fill="#0b4ab5"/><rect x="1567" y="248" width="1.5" height="5" fill="#0b4ab5"/><rect x="1570" y="248" width="1.5" height="5" fill="#0b4ab5"/><rect x="1573" y="248" width="1.5" height="5" fill="#0b4ab5"/><rect x="1576" y="248" width="1.5" height="5" fill="#0b4ab5"/><rect x="1579" y="248" width="1.5" height="5" fill="#0b4ab5"/><rect x="1591" y="248" width="1.5" height="5" fill="#0b4ab5"/><rect x="1619" y="248" width="1.5" height="5" fill="#0b4ab5"/><rect x="1622" y="248" width="1.5" height="5" fill="#0b4ab5"/><rect x="1625" y="248" width="1.5" height="5" fill="#0b4ab5"/><rect x="1628" y="248" width="1.5" height="5" fill="#0b4ab5"/><rect x="1640" y="248" width="3" height="5" fill="#0b4ab5"/><rect x="1649" y="248" width="1.5" height="5" fill="#0b4ab5"/><rect x="1652" y="248" width="1.5" height="5" fill="#0b4ab5"/><rect x="1655" y="248" width="1.5" height="5" fill="#0b4ab5"/><rect x="1658" y="248" width="1.5" height="5" fill="#0b4ab5"/><rect x="1661" y="248" width="1.5" height="5" fill="#0b4ab5"/><rect x="1698" y="248" width="1.5" height="5" fill="#0b4ab5"/><rect x="1701" y="248" width="1.5" height="5" fill="#0b4ab5"/><rect x="1704" y="248" width="1.5" height="5" fill="#0b4ab5"/><rect x="1740" y="248" width="1.5" height="5" fill="#0b4ab5"/><rect x="1743" y="248" width="1.5" height="5" fill="#0b4ab5"/><rect x="1746" y="248" width="1.5" height="5" fill="#0b4ab5"/><rect x="1749" y="248" width="1.5" height="5" fill="#0b4ab5"/><rect x="1752" y="248" width="1.5" height="5" fill="#0b4ab5"/><rect x="1784" y="248" width="1.5" height="5" fill="#0b4ab5"/><rect x="1810" y="248" width="4" height="5" fill="#0b4ab5"/><rect x="1835" y="248" width="1.5" height="5" fill="#0b4ab5"/><rect x="1853" y="248" width="1.5" height="5" fill="#0b4ab5"/><rect x="1883" y="248" width="4" height="5" fill="#0b4ab5"/><rect x="1896" y="248" width="4" height="5" fill="#0b4ab5"/><rect x="1928" y="248" width="3" height="5" fill="#0b4ab5"/><rect x="1960" y="248" width="1.5" height="5" fill="#0b4ab5"/><rect x="1976" y="248" width="3" height="5" fill="#0b4ab5"/><rect x="1989" y="248" width="1.5" height="5" fill="#0b4ab5"/><rect x="2006" y="248" width="1.5" height="5" fill="#0b4ab5"/><rect x="2009" y="248" width="1.5" height="5" fill="#0b4ab5"/><rect x="2012" y="248" width="1.5" height="5" fill="#0b4ab5"/><rect x="2023" y="248" width="1.5" height="5" fill="#7aa0dd"/><rect x="2035" y="248" width="1.5" height="5" fill="#0b4ab5"/><rect x="2048" y="248" width="1.5" height="5" fill="#0b4ab5"/><rect x="2051" y="248" width="1.5" height="5" fill="#0b4ab5"/><rect x="2054" y="248" width="1.5" height="5" fill="#0b4ab5"/><rect x="2057" y="248" width="1.5" height="5" fill="#0b4ab5"/><rect x="2060" y="248" width="1.5" height="5" fill="#0b4ab5"/><rect x="2093" y="248" width="4" height="5" fill="#0b4ab5"/><rect x="2119" y="248" width="1.5" height="5" fill="#0b4ab5"/><rect x="2122" y="248" width="1.5" height="5" fill="#0b4ab5"/><rect x="2132" y="248" width="3" height="5" fill="#0b4ab5"/>
<path d="M281,285 C285,276 287,260 293,260 L2128,260 L2132,285 Z" fill="#ffe900"/>
<path d="M281,285 C283,278 285,264 290,260 L300,260 L296,270 Z" fill="#ff9400"/>
<path d="M292,260 L292,264.4 L294,265.7 L296,267.1 L298,267.1 L300,265.7 L302,264.4 L304,263.3 L306,262.4 L308,261.7 L310,261.6 L312,261.7 L314,261.8 L316,261.9 L318,261.9 L320,262.0 L322,262.0 L324,261.9 L326,261.7 L328,262.5 L330,264.1 L332,266.3 L334,269.1 L336,272.4 L338,272.4 L340,268.9 L342,265.9 L344,264.5 L346,268.1 L348,272.4 L350,277.3 L352,272.5 L354,268.2 L356,264.6 L358,261.8 L360,260.3 L362,260.3 L364,260.3 L366,260.3 L368,260.3 L370,260.3 L372,260.2 L374,260.2 L376,260.1 L378,260.1 L380,260.0 L382,260.0 L384,260.1 L386,260.1 L388,260.2 L390,260.3 L392,260.5 L394,260.5 L396,260.6 L398,260.6 L400,260.5 L402,260.5 L404,260.4 L406,260.3 L408,260.2 L410,260.1 L412,260.1 L414,260.1 L416,260.1 L418,260.2 L420,260.2 L422,260.2 L424,260.3 L426,260.3 L428,260.3 L430,260.3 L432,260.4 L434,260.9 L436,262.3 L438,264.4 L440,266.8 L442,269.6 L444,272.6 L446,272.6 L448,269.4 L450,266.6 L452,264.1 L454,262.1 L456,260.7 L458,260.4 L460,260.8 L462,261.5 L464,262.3 L466,263.4 L468,264.6 L470,263.3 L472,262.2 L474,264.5 L476,268.3 L478,272.9 L480,278.2 L482,273.8 L484,270.0 L486,267.2 L488,269.8 L490,272.8 L492,276.0 L494,279.6 L496,276.0 L498,272.7 L500,269.7 L502,267.1 L504,270.3 L506,273.9 L508,278.0 L510,282.5 L512,278.0 L514,273.9 L516,270.2 L518,267.1 L520,264.3 L522,262.2 L524,261.3 L526,260.9 L528,260.5 L530,260.3 L532,262.2 L534,265.8 L536,270.6 L538,276.3 L540,282.8 L542,276.8 L544,271.5 L546,267.0 L548,264.6 L550,263.8 L552,263.1 L554,262.6 L556,262.3 L558,262.2 L560,262.3 L562,262.3 L564,262.3 L566,262.1 L568,261.9 L570,261.7 L572,261.4 L574,261.2 L576,261.1 L578,261.1 L580,261.1 L582,261.1 L584,261.2 L586,261.2 L588,261.2 L590,261.3 L592,261.3 L594,261.3 L596,261.4 L598,261.6 L600,261.8 L602,262.0 L604,262.1 L606,262.2 L608,262.2 L610,262.2 L612,262.2 L614,262.2 L616,262.3 L618,262.3 L620,262.3 L622,262.3 L624,262.3 L626,262.1 L628,262.0 L630,261.8 L632,261.7 L634,261.5 L636,261.5 L638,261.4 L640,261.4 L642,261.3 L644,261.1 L646,260.9 L648,260.8 L650,260.7 L652,260.7 L654,260.7 L656,260.9 L658,261.1 L660,261.3 L662,261.6 L664,261.7 L666,261.8 L668,261.8 L670,264.3 L672,268.9 L674,274.8 L676,281.9 L678,281.9 L680,274.8 L682,268.9 L684,264.3 L686,265.9 L688,269.3 L690,273.3 L692,277.9 L694,283.1 L696,277.6 L698,272.8 L700,268.6 L702,265.1 L704,262.4 L706,261.0 L708,261.1 L710,261.1 L712,261.1 L714,261.2 L716,261.2 L718,261.3 L720,261.5 L722,261.6 L724,261.7 L726,261.7 L728,261.7 L730,261.6 L732,261.4 L734,261.2 L736,261.0 L738,260.7 L740,260.6 L742,260.6 L744,260.6 L746,260.6 L748,260.7 L750,260.8 L752,260.9 L754,260.9 L756,261.0 L758,261.0 L760,261.0 L762,261.1 L764,261.5 L766,263.3 L768,265.7 L770,268.6 L772,272.0 L774,275.7 L776,279.8 L778,279.7 L780,275.5 L782,273.7 L784,273.6 L786,269.6 L788,269.0 L790,272.0 L792,275.3 L794,275.5 L796,276.5 L798,274.2 L800,280.0 L802,285.0 L804,280.0 L806,274.2 L808,269.1 L810,264.9 L812,261.8 L814,260.9 L816,260.8 L818,260.8 L820,260.8 L822,260.9 L824,261.0 L826,261.0 L828,261.1 L830,261.2 L832,261.2 L834,261.2 L836,261.3 L838,261.5 L840,261.7 L842,261.8 L844,262.0 L846,262.0 L848,263.8 L850,267.0 L852,270.9 L854,275.6 L856,280.9 L858,274.8 L860,269.5 L862,265.2 L864,261.9 L866,260.2 L868,260.3 L870,260.5 L872,260.6 L874,260.8 L876,260.8 L878,260.8 L880,260.8 L882,260.7 L884,260.7 L886,260.9 L888,261.9 L890,263.4 L892,265.2 L894,267.5 L896,270.0 L898,272.8 L900,275.9 L902,273.2 L904,270.7 L906,268.3 L908,266.1 L910,264.8 L912,266.2 L914,267.7 L916,267.9 L918,266.8 L920,265.7 L922,267.5 L924,269.8 L926,272.3 L928,274.9 L930,277.7 L932,277.4 L934,274.1 L936,271.1 L938,268.5 L940,266.2 L942,264.4 L944,263.0 L946,262.1 L948,262.1 L950,262.3 L952,262.3 L954,262.2 L956,262.0 L958,261.7 L960,261.3 L962,260.9 L964,260.6 L966,260.4 L968,260.4 L970,260.6 L972,260.9 L974,261.3 L976,261.7 L978,262.1 L980,262.3 L982,262.8 L984,264.6 L986,267.0 L988,269.9 L990,273.2 L992,272.9 L994,269.0 L996,265.7 L998,263.1 L1000,261.2 L1002,260.8 L1004,260.8 L1006,260.8 L1008,260.8 L1010,260.8 L1012,260.8 L1014,260.8 L1016,260.8 L1018,260.8 L1020,260.7 L1022,260.7 L1024,260.7 L1026,260.7 L1028,260.7 L1030,260.8 L1032,261.1 L1034,261.4 L1036,261.7 L1038,261.9 L1040,262.1 L1042,262.2 L1044,262.1 L1046,261.9 L1048,261.6 L1050,261.3 L1052,261.0 L1054,260.7 L1056,260.6 L1058,260.5 L1060,262.6 L1062,266.4 L1064,271.3 L1066,277.1 L1068,283.7 L1070,277.0 L1072,271.1 L1074,266.1 L1076,265.5 L1078,271.8 L1080,279.4 L1082,279.4 L1084,271.7 L1086,265.5 L1088,261.1 L1090,261.5 L1092,263.2 L1094,265.4 L1096,267.8 L1098,270.5 L1100,273.3 L1102,276.2 L1104,276.2 L1106,273.4 L1108,270.7 L1110,268.4 L1112,266.2 L1114,268.4 L1116,271.6 L1118,275.1 L1120,278.9 L1122,278.8 L1124,274.8 L1126,271.2 L1128,267.9 L1130,265.8 L1132,269.9 L1134,274.7 L1136,280.3 L1138,282.4 L1140,277.5 L1142,273.0 L1144,269.1 L1146,265.7 L1148,263.1 L1150,261.6 L1152,261.6 L1154,261.5 L1156,261.4 L1158,261.4 L1160,261.3 L1162,261.3 L1164,261.3 L1166,261.4 L1168,261.6 L1170,261.7 L1172,261.9 L1174,262.0 L1176,262.1 L1178,262.1 L1180,262.0 L1182,261.8 L1184,261.5 L1186,261.3 L1188,261.1 L1190,260.9 L1192,260.9 L1194,260.9 L1196,261.1 L1198,261.2 L1200,261.4 L1202,261.7 L1204,261.8 L1206,261.9 L1208,261.9 L1210,262.1 L1212,263.2 L1214,264.8 L1216,266.8 L1218,269.1 L1220,269.0 L1222,266.6 L1224,264.5 L1226,263.0 L1228,262.0 L1230,262.4 L1232,264.5 L1234,267.3 L1236,270.7 L1238,274.4 L1240,278.6 L1242,283.1 L1244,278.3 L1246,273.9 L1248,270.0 L1250,266.7 L1252,264.0 L1254,262.2 L1256,261.8 L1258,261.9 L1260,262.0 L1262,262.2 L1264,262.3 L1266,262.3 L1268,262.3 L1270,262.2 L1272,262.0 L1274,261.8 L1276,262.6 L1278,264.3 L1280,266.7 L1282,269.7 L1284,273.2 L1286,277.1 L1288,281.4 L1290,277.4 L1292,273.7 L1294,270.3 L1296,267.3 L1298,264.7 L1300,262.6 L1302,261.3 L1304,261.1 L1306,260.8 L1308,260.6 L1310,260.4 L1312,260.4 L1314,260.4 L1316,260.4 L1318,260.4 L1320,260.4 L1322,261.5 L1324,263.4 L1326,265.8 L1328,268.6 L1330,272.0 L1332,275.7 L1334,279.8 L1336,276.1 L1338,272.7 L1340,269.6 L1342,271.7 L1344,276.3 L1346,276.2 L1348,271.4 L1350,267.2 L1352,263.8 L1354,262.9 L1356,263.8 L1358,264.9 L1360,266.2 L1362,267.7 L1364,266.7 L1366,265.8 L1368,265.0 L1370,264.2 L1372,263.4 L1374,262.6 L1376,261.9 L1378,261.5 L1380,261.1 L1382,260.7 L1384,260.4 L1386,260.3 L1388,260.3 L1390,260.4 L1392,260.7 L1394,261.1 L1396,261.5 L1398,261.8 L1400,262.1 L1402,262.1 L1404,262.1 L1406,262.2 L1408,262.2 L1410,262.2 L1412,262.3 L1414,262.7 L1416,264.3 L1418,266.6 L1420,269.4 L1422,272.7 L1424,276.4 L1426,280.4 L1428,284.8 L1430,280.5 L1432,276.5 L1434,272.8 L1436,269.3 L1438,267.0 L1440,269.0 L1442,268.6 L1444,266.0 L1446,263.8 L1448,262.1 L1450,261.0 L1452,260.9 L1454,261.1 L1456,261.3 L1458,261.4 L1460,261.5 L1462,261.6 L1464,261.6 L1466,262.5 L1468,264.2 L1470,266.3 L1472,268.9 L1474,271.8 L1476,275.0 L1478,275.0 L1480,271.8 L1482,271.5 L1484,278.1 L1486,278.1 L1488,271.6 L1490,266.4 L1492,266.8 L1494,268.4 L1496,268.3 L1498,266.6 L1500,265.0 L1502,264.4 L1504,266.5 L1506,268.8 L1508,271.6 L1510,274.5 L1512,277.6 L1514,274.2 L1516,271.1 L1518,268.2 L1520,265.6 L1522,263.5 L1524,261.8 L1526,260.7 L1528,260.5 L1530,260.7 L1532,260.8 L1534,261.0 L1536,261.0 L1538,261.0 L1540,261.1 L1542,261.1 L1544,261.2 L1546,261.3 L1548,261.3 L1550,261.4 L1552,261.4 L1554,261.3 L1556,261.2 L1558,261.0 L1560,260.8 L1562,260.6 L1564,260.4 L1566,260.3 L1568,260.3 L1570,260.4 L1572,260.5 L1574,260.6 L1576,260.8 L1578,260.9 L1580,261.0 L1582,261.0 L1584,261.1 L1586,261.2 L1588,261.5 L1590,261.8 L1592,262.1 L1594,262.3 L1596,262.5 L1598,262.5 L1600,262.3 L1602,262.0 L1604,261.5 L1606,261.1 L1608,260.7 L1610,260.5 L1612,260.4 L1614,260.4 L1616,260.7 L1618,261.0 L1620,261.3 L1622,261.7 L1624,262.0 L1626,262.1 L1628,262.1 L1630,262.0 L1632,261.8 L1634,261.5 L1636,261.2 L1638,260.9 L1640,260.8 L1642,260.7 L1644,260.7 L1646,260.8 L1648,261.0 L1650,261.2 L1652,261.3 L1654,263.8 L1656,268.1 L1658,273.5 L1660,279.9 L1662,273.2 L1664,267.5 L1666,263.0 L1668,261.1 L1670,261.7 L1672,262.6 L1674,263.7 L1676,265.1 L1678,266.7 L1680,267.1 L1682,266.2 L1684,265.3 L1686,264.4 L1688,263.5 L1690,262.7 L1692,262.2 L1694,262.0 L1696,261.9 L1698,261.8 L1700,261.7 L1702,261.7 L1704,261.7 L1706,261.6 L1708,261.4 L1710,261.2 L1712,261.0 L1714,260.8 L1716,260.7 L1718,260.7 L1720,260.7 L1722,260.8 L1724,260.8 L1726,260.8 L1728,260.9 L1730,260.9 L1732,260.9 L1734,260.9 L1736,260.9 L1738,260.9 L1740,260.9 L1742,260.9 L1744,260.9 L1746,260.9 L1748,260.9 L1750,260.9 L1752,261.0 L1754,261.1 L1756,261.2 L1758,261.2 L1760,261.3 L1762,261.3 L1764,261.3 L1766,261.7 L1768,262.5 L1770,263.4 L1772,264.5 L1774,263.5 L1776,262.6 L1778,261.9 L1780,261.5 L1782,261.5 L1784,261.5 L1786,261.6 L1788,261.6 L1790,261.6 L1792,261.6 L1794,261.6 L1796,261.4 L1798,261.1 L1800,260.7 L1802,260.4 L1804,260.2 L1806,260.0 L1808,260.0 L1810,260.2 L1812,260.5 L1814,260.8 L1816,261.2 L1818,261.6 L1820,261.8 L1822,261.9 L1824,261.9 L1826,262.0 L1828,262.1 L1830,262.2 L1832,262.3 L1834,262.4 L1836,262.5 L1838,262.5 L1840,262.3 L1842,262.1 L1844,261.8 L1846,261.5 L1848,261.2 L1850,261.0 L1852,261.0 L1854,260.9 L1856,260.9 L1858,260.9 L1860,260.8 L1862,260.8 L1864,260.8 L1866,260.8 L1868,260.8 L1870,260.8 L1872,260.9 L1874,261.0 L1876,261.1 L1878,261.2 L1880,261.3 L1882,261.3 L1884,261.4 L1886,261.5 L1888,261.6 L1890,261.7 L1892,261.8 L1894,261.9 L1896,262.0 L1898,262.0 L1900,261.9 L1902,261.8 L1904,261.6 L1906,261.4 L1908,261.2 L1910,261.1 L1912,261.1 L1914,261.1 L1916,261.1 L1918,261.0 L1920,261.0 L1922,261.0 L1924,261.0 L1926,260.9 L1928,260.9 L1930,260.9 L1932,260.9 L1934,260.8 L1936,261.0 L1938,262.3 L1940,264.1 L1942,266.4 L1944,266.5 L1946,264.3 L1948,262.7 L1950,263.3 L1952,265.8 L1954,268.7 L1956,272.0 L1958,275.5 L1960,279.2 L1962,283.2 L1964,282.9 L1966,278.5 L1968,274.5 L1970,270.8 L1972,267.7 L1974,265.0 L1976,263.8 L1978,265.0 L1980,266.3 L1982,267.6 L1984,266.8 L1986,266.0 L1988,265.2 L1990,264.3 L1992,263.5 L1994,262.7 L1996,262.1 L1998,261.7 L2000,261.6 L2002,261.5 L2004,261.5 L2006,261.4 L2008,261.2 L2010,261.0 L2012,260.8 L2014,260.7 L2016,260.6 L2018,260.6 L2020,260.6 L2022,260.7 L2024,260.7 L2026,261.3 L2028,262.2 L2030,263.5 L2032,264.9 L2034,266.7 L2036,268.7 L2038,272.4 L2040,278.7 L2042,285.0 L2044,279.2 L2046,273.4 L2048,272.1 L2050,277.4 L2052,277.3 L2054,272.1 L2056,267.6 L2058,264.1 L2060,262.2 L2062,262.2 L2064,263.3 L2066,265.4 L2068,268.0 L2070,271.2 L2072,274.7 L2074,278.6 L2076,282.9 L2078,278.6 L2080,274.5 L2082,270.6 L2084,267.1 L2086,264.0 L2088,261.6 L2090,260.2 L2092,260.1 L2094,260.1 L2096,260.5 L2098,260.9 L2100,261.5 L2102,262.1 L2104,262.7 L2106,263.4 L2108,264.1 L2110,263.5 L2112,263.2 L2114,262.9 L2116,263.8 L2118,265.5 L2120,267.3 L2122,269.2 L2124,269.1 L2126,267.1 L2128,265.3 L2128,260 Z" fill="#ff9400"/>
<rect x="286" y="286" width="2" height="5" fill="#3d6fc4"/><rect x="289" y="286" width="1" height="5" fill="#3d6fc4"/><rect x="290.5" y="286" width="1" height="5" fill="#3d6fc4"/><rect x="292.5" y="286" width="3" height="5" fill="#5d88d0"/>
<rect x="302" y="286" width="1.5" height="5" fill="#5d88d0"/><rect x="305.0" y="286" width="3" height="5" fill="#0b4ab5"/>
<rect x="314" y="286" width="1" height="5" fill="#0b4ab5"/><rect x="316" y="286" width="3" height="5" fill="#3d6fc4"/><rect x="320.5" y="286" width="1" height="5" fill="#5d88d0"/><rect x="322.5" y="286" width="2" height="5" fill="#3d6fc4"/><rect x="325.0" y="286" width="1" height="5" fill="#3d6fc4"/><rect x="326.5" y="286" width="1.5" height="5" fill="#0b4ab5"/><rect x="328.5" y="286" width="2" height="5" fill="#0b4ab5"/><rect x="331.5" y="286" width="2" height="5" fill="#0b4ab5"/><rect x="334.5" y="286" width="1" height="5" fill="#5d88d0"/><rect x="336.0" y="286" width="2" height="5" fill="#3d6fc4"/><rect x="339.0" y="286" width="2" height="5" fill="#0b4ab5"/><rect x="342.5" y="286" width="3" height="5" fill="#3d6fc4"/><rect x="347.0" y="286" width="3" height="5" fill="#3d6fc4"/><rect x="350.5" y="286" width="1" height="5" fill="#3d6fc4"/><rect x="352.0" y="286" width="2" height="5" fill="#0b4ab5"/><rect x="355.0" y="286" width="3" height="5" fill="#0b4ab5"/><rect x="358.5" y="286" width="1.5" height="5" fill="#0b4ab5"/><rect x="361.0" y="286" width="1.0" height="5" fill="#0b4ab5"/>
<rect x="376" y="286" width="3" height="5" fill="#5d88d0"/><rect x="380" y="286" width="1.5" height="5" fill="#0b4ab5"/><rect x="382.5" y="286" width="2" height="5" fill="#5d88d0"/><rect x="385.5" y="286" width="0.5" height="5" fill="#5d88d0"/>
<rect x="422" y="286" width="4" height="5" fill="#0b4ab5"/><rect x="449" y="286" width="2" height="5" fill="#0b4ab5"/><rect x="470" y="286" width="1.5" height="5" fill="#0b4ab5"/><rect x="498" y="286" width="3" height="5" fill="#0b4ab5"/><rect x="509" y="286" width="2" height="5" fill="#0b4ab5"/><rect x="532" y="286" width="1.5" height="5" fill="#7aa0dd"/><rect x="539" y="286" width="1.5" height="5" fill="#0b4ab5"/><rect x="542" y="286" width="1.5" height="5" fill="#0b4ab5"/><rect x="545" y="286" width="1.5" height="5" fill="#0b4ab5"/><rect x="548" y="286" width="1.5" height="5" fill="#0b4ab5"/><rect x="570" y="286" width="1.5" height="5" fill="#0b4ab5"/><rect x="573" y="286" width="1.5" height="5" fill="#0b4ab5"/><rect x="576" y="286" width="1.5" height="5" fill="#0b4ab5"/><rect x="579" y="286" width="1.5" height="5" fill="#0b4ab5"/><rect x="592" y="286" width="1.5" height="5" fill="#0b4ab5"/><rect x="595" y="286" width="1.5" height="5" fill="#0b4ab5"/><rect x="598" y="286" width="1.5" height="5" fill="#0b4ab5"/><rect x="601" y="286" width="1.5" height="5" fill="#0b4ab5"/><rect x="604" y="286" width="1.5" height="5" fill="#0b4ab5"/><rect x="634" y="286" width="2" height="5" fill="#0b4ab5"/><rect x="640" y="286" width="4" height="5" fill="#0b4ab5"/><rect x="650" y="286" width="3" height="5" fill="#0b4ab5"/><rect x="678" y="286" width="1.5" height="5" fill="#7aa0dd"/><rect x="712" y="286" width="2" height="5" fill="#0b4ab5"/><rect x="728" y="286" width="1.5" height="5" fill="#0b4ab5"/><rect x="751" y="286" width="2" height="5" fill="#0b4ab5"/><rect x="778" y="286" width="4" height="5" fill="#0b4ab5"/><rect x="810" y="286" width="2" height="5" fill="#0b4ab5"/><rect x="819" y="286" width="1.5" height="5" fill="#0b4ab5"/><rect x="836" y="286" width="1.5" height="5" fill="#0b4ab5"/><rect x="843" y="286" width="3" height="5" fill="#0b4ab5"/><rect x="855" y="286" width="1.5" height="5" fill="#0b4ab5"/><rect x="858" y="286" width="1.5" height="5" fill="#0b4ab5"/><rect x="861" y="286" width="1.5" height="5" fill="#0b4ab5"/><rect x="864" y="286" width="1.5" height="5" fill="#0b4ab5"/><rect x="887" y="286" width="2" height="5" fill="#0b4ab5"/><rect x="903" y="286" width="3" height="5" fill="#0b4ab5"/><rect x="918" y="286" width="1.5" height="5" fill="#0b4ab5"/><rect x="921" y="286" width="1.5" height="5" fill="#0b4ab5"/><rect x="931" y="286" width="1.5" height="5" fill="#0b4ab5"/><rect x="934" y="286" width="1.5" height="5" fill="#0b4ab5"/><rect x="937" y="286" width="1.5" height="5" fill="#0b4ab5"/><rect x="940" y="286" width="1.5" height="5" fill="#0b4ab5"/><rect x="943" y="286" width="1.5" height="5" fill="#0b4ab5"/><rect x="954" y="286" width="3" height="5" fill="#0b4ab5"/><rect x="983" y="286" width="1.5" height="5" fill="#0b4ab5"/><rect x="1009" y="286" width="4" height="5" fill="#0b4ab5"/><rect x="1030" y="286" width="1.5" height="5" fill="#0b4ab5"/><rect x="1033" y="286" width="1.5" height="5" fill="#0b4ab5"/><rect x="1036" y="286" width="1.5" height="5" fill="#0b4ab5"/><rect x="1039" y="286" width="1.5" height="5" fill="#0b4ab5"/><rect x="1048" y="286" width="1.5" height="5" fill="#0b4ab5"/><rect x="1074" y="286" width="1.5" height="5" fill="#7aa0dd"/><rect x="1099" y="286" width="3" height="5" fill="#0b4ab5"/><rect x="1125" y="286" width="1.5" height="5" fill="#0b4ab5"/><rect x="1128" y="286" width="1.5" height="5" fill="#0b4ab5"/><rect x="1131" y="286" width="1.5" height="5" fill="#0b4ab5"/><rect x="1163" y="286" width="1.5" height="5" fill="#0b4ab5"/><rect x="1166" y="286" width="1.5" height="5" fill="#0b4ab5"/><rect x="1169" y="286" width="1.5" height="5" fill="#0b4ab5"/><rect x="1172" y="286" width="1.5" height="5" fill="#0b4ab5"/><rect x="1175" y="286" width="1.5" height="5" fill="#0b4ab5"/><rect x="1210" y="286" width="1.5" height="5" fill="#0b4ab5"/><rect x="1213" y="286" width="1.5" height="5" fill="#0b4ab5"/><rect x="1216" y="286" width="1.5" height="5" fill="#0b4ab5"/><rect x="1219" y="286" width="1.5" height="5" fill="#0b4ab5"/><rect x="1233" y="286" width="2" height="5" fill="#0b4ab5"/><rect x="1242" y="286" width="3" height="5" fill="#0b4ab5"/><rect x="1271" y="286" width="4" height="5" fill="#0b4ab5"/><rect x="1282" y="286" width="3" height="5" fill="#0b4ab5"/><rect x="1298" y="286" width="1.5" height="5" fill="#0b4ab5"/><rect x="1301" y="286" width="1.5" height="5" fill="#0b4ab5"/><rect x="1304" y="286" width="1.5" height="5" fill="#0b4ab5"/><rect x="1330" y="286" width="3" height="5" fill="#0b4ab5"/><rect x="1343" y="286" width="1.5" height="5" fill="#0b4ab5"/><rect x="1346" y="286" width="1.5" height="5" fill="#0b4ab5"/><rect x="1373" y="286" width="4" height="5" fill="#0b4ab5"/><rect x="1407" y="286" width="1.5" height="5" fill="#0b4ab5"/><rect x="1410" y="286" width="1.5" height="5" fill="#0b4ab5"/><rect x="1413" y="286" width="1.5" height="5" fill="#0b4ab5"/><rect x="1437" y="286" width="2" height="5" fill="#0b4ab5"/><rect x="1452" y="286" width="1.5" height="5" fill="#0b4ab5"/><rect x="1462" y="286" width="2" height="5" fill="#0b4ab5"/><rect x="1472" y="286" width="4" height="5" fill="#0b4ab5"/><rect x="1480" y="286" width="4" height="5" fill="#0b4ab5"/><rect x="1501" y="286" width="1.5" height="5" fill="#0b4ab5"/><rect x="1504" y="286" width="1.5" height="5" fill="#0b4ab5"/><rect x="1507" y="286" width="1.5" height="5" fill="#0b4ab5"/><rect x="1510" y="286" width="1.5" height="5" fill="#0b4ab5"/><rect x="1519" y="286" width="1.5" height="5" fill="#0b4ab5"/><rect x="1522" y="286" width="1.5" height="5" fill="#0b4ab5"/><rect x="1525" y="286" width="1.5" height="5" fill="#0b4ab5"/><rect x="1528" y="286" width="1.5" height="5" fill="#0b4ab5"/><rect x="1531" y="286" width="1.5" height="5" fill="#0b4ab5"/><rect x="1544" y="286" width="1.5" height="5" fill="#7aa0dd"/><rect x="1571" y="286" width="1.5" height="5" fill="#0b4ab5"/><rect x="1574" y="286" width="1.5" height="5" fill="#0b4ab5"/><rect x="1577" y="286" width="1.5" height="5" fill="#0b4ab5"/><rect x="1580" y="286" width="1.5" height="5" fill="#0b4ab5"/><rect x="1583" y="286" width="1.5" height="5" fill="#0b4ab5"/><rect x="1620" y="286" width="1.5" height="5" fill="#7aa0dd"/><rect x="1640" y="286" width="1.5" height="5" fill="#0b4ab5"/><rect x="1643" y="286" width="1.5" height="5" fill="#0b4ab5"/><rect x="1646" y="286" width="1.5" height="5" fill="#0b4ab5"/><rect x="1683" y="286" width="4" height="5" fill="#0b4ab5"/><rect x="1698" y="286" width="1.5" height="5" fill="#0b4ab5"/><rect x="1701" y="286" width="1.5" height="5" fill="#0b4ab5"/><rect x="1704" y="286" width="1.5" height="5" fill="#0b4ab5"/><rect x="1707" y="286" width="1.5" height="5" fill="#0b4ab5"/><rect x="1734" y="286" width="1.5" height="5" fill="#0b4ab5"/><rect x="1737" y="286" width="1.5" height="5" fill="#0b4ab5"/><rect x="1763" y="286" width="1.5" height="5" fill="#7aa0dd"/><rect x="1783" y="286" width="2" height="5" fill="#0b4ab5"/><rect x="1801" y="286" width="1.5" height="5" fill="#0b4ab5"/><rect x="1832" y="286" width="3" height="5" fill="#0b4ab5"/><rect x="1857" y="286" width="4" height="5" fill="#0b4ab5"/><rect x="1874" y="286" width="2" height="5" fill="#0b4ab5"/><rect x="1889" y="286" width="1.5" height="5" fill="#0b4ab5"/><rect x="1922" y="286" width="1.5" height="5" fill="#0b4ab5"/><rect x="1925" y="286" width="1.5" height="5" fill="#0b4ab5"/><rect x="1928" y="286" width="1.5" height="5" fill="#0b4ab5"/><rect x="1931" y="286" width="1.5" height="5" fill="#0b4ab5"/><rect x="1934" y="286" width="1.5" height="5" fill="#0b4ab5"/><rect x="1965" y="286" width="1.5" height="5" fill="#0b4ab5"/><rect x="1968" y="286" width="1.5" height="5" fill="#0b4ab5"/><rect x="1971" y="286" width="1.5" height="5" fill="#0b4ab5"/><rect x="1974" y="286" width="1.5" height="5" fill="#0b4ab5"/><rect x="2000" y="286" width="4" height="5" fill="#0b4ab5"/><rect x="2017" y="286" width="4" height="5" fill="#0b4ab5"/><rect x="2035" y="286" width="1.5" height="5" fill="#7aa0dd"/><rect x="2048" y="286" width="1.5" height="5" fill="#0b4ab5"/><rect x="2051" y="286" width="1.5" height="5" fill="#0b4ab5"/><rect x="2054" y="286" width="1.5" height="5" fill="#0b4ab5"/><rect x="2080" y="286" width="2" height="5" fill="#0b4ab5"/><rect x="2113" y="286" width="1.5" height="5" fill="#0b4ab5"/><rect x="2125" y="286" width="3" height="5" fill="#0b4ab5"/>
<path d="M379,323 C383,314 385,298 391,298 L2128,298 L2132,323 Z" fill="#ffe900"/>
<path d="M390,298 L390,301.5 L392,301.5 L394,301.6 L396,301.7 L398,301.7 L400,301.7 L402,301.4 L404,300.9 L406,300.6 L408,300.4 L410,300.6 L412,301.0 L414,301.4 L416,301.7 L418,301.7 L420,301.3 L422,300.7 L424,300.2 L426,300.0 L428,300.1 L430,300.6 L432,301.2 L434,301.5 L436,301.6 L438,301.6 L440,301.7 L442,301.8 L444,301.9 L446,301.6 L448,301.0 L450,300.3 L452,299.9 L454,299.9 L456,300.1 L458,300.6 L460,301.0 L462,301.1 L464,301.0 L466,300.6 L468,300.1 L470,299.8 L472,299.8 L474,300.2 L476,300.7 L478,301.1 L480,301.3 L482,301.5 L484,302.0 L486,302.5 L488,302.9 L490,302.9 L492,302.6 L494,302.2 L496,301.8 L498,301.7 L500,301.8 L502,302.0 L504,302.2 L506,302.3 L508,302.4 L510,302.4 L512,302.5 L514,302.5 L516,302.5 L518,302.2 L520,301.5 L522,300.6 L524,300.0 L526,300.1 L528,300.8 L530,302.0 L532,303.1 L534,303.5 L536,303.3 L538,303.0 L540,302.7 L542,302.4 L544,302.3 L546,301.8 L548,300.9 L550,300.2 L552,299.9 L554,300.2 L556,301.1 L558,302.1 L560,302.7 L562,302.8 L564,302.4 L566,301.8 L568,301.3 L570,302.5 L572,305.4 L574,308.1 L576,304.8 L578,301.7 L580,300.3 L582,301.0 L584,302.0 L586,303.0 L588,303.3 L590,303.2 L592,302.7 L594,302.1 L596,301.8 L598,301.8 L600,302.0 L602,302.2 L604,302.5 L606,302.6 L608,302.3 L610,301.5 L612,300.7 L614,300.1 L616,300.1 L618,300.7 L620,301.5 L622,302.3 L624,302.6 L626,302.3 L628,301.4 L630,300.4 L632,299.8 L634,299.8 L636,301.3 L638,304.2 L640,307.2 L642,304.5 L644,301.9 L646,300.7 L648,300.9 L650,301.0 L652,300.9 L654,300.6 L656,300.2 L658,299.7 L660,299.6 L662,299.8 L664,300.5 L666,303.0 L668,305.3 L670,305.3 L672,303.2 L674,301.0 L676,300.5 L678,300.4 L680,300.4 L682,300.5 L684,300.6 L686,300.7 L688,300.7 L690,301.1 L692,301.7 L694,302.1 L696,304.3 L698,306.1 L700,307.8 L702,309.4 L704,311.1 L706,309.2 L708,307.6 L710,306.2 L712,304.8 L714,303.7 L716,302.9 L718,302.6 L720,302.3 L722,302.0 L724,302.0 L726,302.2 L728,302.6 L730,302.9 L732,303.0 L734,302.8 L736,302.5 L738,302.1 L740,301.8 L742,301.8 L744,302.1 L746,302.6 L748,303.0 L750,303.2 L752,303.1 L754,303.1 L756,303.0 L758,303.0 L760,302.9 L762,302.3 L764,301.3 L766,300.5 L768,300.2 L770,300.4 L772,301.1 L774,301.9 L776,302.4 L778,302.4 L780,302.1 L782,301.5 L784,301.1 L786,300.9 L788,301.1 L790,301.6 L792,302.1 L794,302.5 L796,302.5 L798,302.5 L800,302.4 L802,304.1 L804,306.0 L806,307.9 L808,310.0 L810,310.2 L812,308.4 L814,306.5 L816,304.0 L818,304.5 L820,305.9 L822,305.6 L824,305.4 L826,304.2 L828,303.0 L830,301.7 L832,301.0 L834,301.4 L836,301.8 L838,302.3 L840,302.4 L842,302.5 L844,302.8 L846,303.1 L848,303.3 L850,303.3 L852,303.1 L854,302.8 L856,302.5 L858,302.4 L860,302.1 L862,301.3 L864,300.4 L866,299.8 L868,299.7 L870,300.2 L872,301.0 L874,301.7 L876,301.9 L878,301.7 L880,301.1 L882,300.4 L884,300.0 L886,300.0 L888,300.3 L890,301.0 L892,301.5 L894,301.7 L896,301.8 L898,302.1 L900,302.5 L902,302.7 L904,302.6 L906,302.0 L908,301.1 L910,300.3 L912,300.6 L914,302.2 L916,304.4 L918,306.7 L920,308.7 L922,307.5 L924,306.0 L926,304.5 L928,302.9 L930,302.2 L932,302.0 L934,301.5 L936,300.9 L938,300.6 L940,300.5 L942,300.5 L944,300.4 L946,301.1 L948,302.7 L950,304.4 L952,304.7 L954,303.4 L956,302.1 L958,301.3 L960,301.7 L962,302.2 L964,302.7 L966,302.9 L968,302.7 L970,302.4 L972,302.1 L974,301.9 L976,301.8 L978,301.4 L980,300.7 L982,300.2 L984,300.0 L986,299.9 L988,299.8 L990,299.7 L992,299.6 L994,299.6 L996,299.7 L998,299.8 L1000,299.9 L1002,299.9 L1004,300.3 L1006,301.1 L1008,302.0 L1010,302.6 L1012,302.6 L1014,302.9 L1016,303.8 L1018,304.7 L1020,306.1 L1022,308.0 L1024,308.4 L1026,307.2 L1028,305.9 L1030,306.4 L1032,306.2 L1034,305.3 L1036,306.7 L1038,308.2 L1040,306.7 L1042,305.5 L1044,304.4 L1046,303.0 L1048,302.2 L1050,301.9 L1052,301.5 L1054,301.2 L1056,301.0 L1058,300.9 L1060,300.6 L1062,300.3 L1064,300.1 L1066,300.2 L1068,300.8 L1070,301.8 L1072,302.7 L1074,303.0 L1076,303.4 L1078,304.1 L1080,304.8 L1082,304.5 L1084,303.4 L1086,302.4 L1088,302.0 L1090,302.2 L1092,302.3 L1094,302.3 L1096,302.5 L1098,302.6 L1100,302.7 L1102,302.7 L1104,302.9 L1106,303.1 L1108,303.2 L1110,303.3 L1112,302.9 L1114,301.7 L1116,300.5 L1118,299.7 L1120,299.6 L1122,300.6 L1124,302.6 L1126,304.4 L1128,306.1 L1130,307.5 L1132,305.8 L1134,304.0 L1136,302.4 L1138,300.9 L1140,300.5 L1142,300.9 L1144,301.3 L1146,301.5 L1148,301.7 L1150,302.1 L1152,302.6 L1154,302.9 L1156,303.0 L1158,302.9 L1160,302.8 L1162,302.7 L1164,302.7 L1166,302.3 L1168,301.4 L1170,300.4 L1172,299.7 L1174,299.7 L1176,299.8 L1178,300.0 L1180,300.2 L1182,300.2 L1184,300.5 L1186,301.3 L1188,302.1 L1190,302.7 L1192,302.8 L1194,302.6 L1196,302.4 L1198,302.3 L1200,302.2 L1202,302.1 L1204,301.7 L1206,301.4 L1208,301.1 L1210,301.1 L1212,302.0 L1214,303.8 L1216,305.7 L1218,307.4 L1220,309.0 L1222,306.9 L1224,304.8 L1226,302.8 L1228,301.1 L1230,300.8 L1232,301.7 L1234,303.3 L1236,305.0 L1238,306.3 L1240,304.3 L1242,302.2 L1244,301.1 L1246,301.1 L1248,301.6 L1250,302.2 L1252,302.8 L1254,303.0 L1256,302.9 L1258,302.6 L1260,302.2 L1262,302.0 L1264,301.9 L1266,301.4 L1268,300.7 L1270,300.1 L1272,299.8 L1274,299.9 L1276,300.2 L1278,300.6 L1280,300.8 L1282,300.8 L1284,300.7 L1286,300.6 L1288,300.4 L1290,300.4 L1292,300.7 L1294,301.5 L1296,302.4 L1298,303.0 L1300,303.0 L1302,302.8 L1304,302.4 L1306,302.0 L1308,301.9 L1310,301.6 L1312,301.0 L1314,300.2 L1316,299.7 L1318,299.7 L1320,299.8 L1322,300.0 L1324,300.1 L1326,300.2 L1328,300.3 L1330,300.5 L1332,300.8 L1334,301.6 L1336,302.9 L1338,304.2 L1340,303.1 L1342,302.0 L1344,301.4 L1346,301.4 L1348,301.6 L1350,301.7 L1352,301.8 L1354,301.8 L1356,301.6 L1358,301.4 L1360,301.1 L1362,301.1 L1364,302.7 L1366,306.1 L1368,309.4 L1370,306.0 L1372,302.6 L1374,300.6 L1376,300.1 L1378,299.7 L1380,299.5 L1382,299.8 L1384,300.5 L1386,301.2 L1388,301.7 L1390,301.8 L1392,301.6 L1394,301.2 L1396,300.9 L1398,300.8 L1400,300.7 L1402,300.3 L1404,299.9 L1406,299.6 L1408,299.6 L1410,300.0 L1412,300.6 L1414,301.1 L1416,301.3 L1418,301.6 L1420,302.2 L1422,302.9 L1424,303.4 L1426,303.3 L1428,302.5 L1430,301.2 L1432,300.1 L1434,299.7 L1436,299.7 L1438,299.8 L1440,300.0 L1442,300.1 L1444,300.1 L1446,300.6 L1448,301.3 L1450,301.9 L1452,302.2 L1454,302.0 L1456,301.5 L1458,301.0 L1460,300.6 L1462,300.6 L1464,300.6 L1466,300.6 L1468,300.6 L1470,300.6 L1472,300.7 L1474,301.0 L1476,301.3 L1478,301.5 L1480,302.4 L1482,304.0 L1484,305.5 L1486,307.0 L1488,308.8 L1490,308.9 L1492,307.4 L1494,306.0 L1496,304.5 L1498,302.7 L1500,301.7 L1502,301.7 L1504,301.6 L1506,301.6 L1508,301.8 L1510,302.3 L1512,302.9 L1514,303.3 L1516,303.3 L1518,303.4 L1520,303.4 L1522,303.5 L1524,303.5 L1526,303.5 L1528,303.3 L1530,302.9 L1532,303.0 L1534,302.9 L1536,302.5 L1538,302.3 L1540,302.0 L1542,301.7 L1544,301.8 L1546,302.1 L1548,302.4 L1550,302.6 L1552,302.6 L1554,302.7 L1556,302.8 L1558,302.9 L1560,303.0 L1562,304.3 L1564,305.5 L1566,306.6 L1568,306.6 L1570,305.2 L1572,303.8 L1574,302.3 L1576,302.1 L1578,302.0 L1580,302.0 L1582,302.0 L1584,302.0 L1586,302.0 L1588,302.0 L1590,301.8 L1592,301.4 L1594,301.1 L1596,301.0 L1598,300.9 L1600,300.8 L1602,300.7 L1604,300.6 L1606,300.7 L1608,302.3 L1610,304.2 L1612,306.0 L1614,307.5 L1616,306.3 L1618,305.2 L1620,306.5 L1622,305.1 L1624,303.7 L1626,303.1 L1628,303.1 L1630,303.2 L1632,303.3 L1634,303.1 L1636,302.8 L1638,303.7 L1640,305.9 L1642,308.2 L1644,310.3 L1646,307.4 L1648,304.5 L1650,301.9 L1652,303.4 L1654,306.4 L1656,309.5 L1658,310.0 L1660,307.5 L1662,305.0 L1664,302.5 L1666,302.5 L1668,302.5 L1670,302.4 L1672,303.0 L1674,304.7 L1676,306.4 L1678,306.4 L1680,304.6 L1682,302.8 L1684,302.0 L1686,302.0 L1688,301.9 L1690,301.6 L1692,301.2 L1694,302.3 L1696,305.0 L1698,307.9 L1700,310.8 L1702,308.4 L1704,305.8 L1706,303.0 L1708,301.5 L1710,301.3 L1712,301.1 L1714,302.8 L1716,304.3 L1718,303.8 L1720,301.7 L1722,299.7 L1724,299.9 L1726,300.2 L1728,300.6 L1730,300.8 L1732,300.8 L1734,300.8 L1736,300.8 L1738,300.8 L1740,300.8 L1742,301.1 L1744,301.9 L1746,302.8 L1748,303.4 L1750,303.4 L1752,302.9 L1754,302.3 L1756,301.7 L1758,301.4 L1760,301.4 L1762,301.2 L1764,301.1 L1766,301.0 L1768,301.0 L1770,300.8 L1772,300.7 L1774,301.5 L1776,303.5 L1778,305.5 L1780,307.5 L1782,309.5 L1784,307.5 L1786,305.5 L1788,303.6 L1790,301.7 L1792,300.8 L1794,300.9 L1796,300.8 L1798,300.5 L1800,300.3 L1802,300.1 L1804,300.0 L1806,299.9 L1808,299.7 L1810,299.6 L1812,299.5 L1814,299.9 L1816,301.0 L1818,302.1 L1820,302.9 L1822,302.9 L1824,302.6 L1826,302.0 L1828,301.5 L1830,303.0 L1832,304.8 L1834,306.5 L1836,308.2 L1838,306.5 L1840,306.6 L1842,308.5 L1844,310.4 L1846,308.8 L1848,307.1 L1850,305.2 L1852,303.1 L1854,301.0 L1856,300.7 L1858,300.7 L1860,300.6 L1862,300.4 L1864,300.2 L1866,300.2 L1868,300.1 L1870,300.0 L1872,299.9 L1874,299.8 L1876,299.8 L1878,300.0 L1880,300.3 L1882,300.6 L1884,300.7 L1886,300.7 L1888,300.7 L1890,304.6 L1892,308.5 L1894,308.6 L1896,305.0 L1898,301.7 L1900,302.2 L1902,302.4 L1904,302.3 L1906,302.1 L1908,301.9 L1910,301.7 L1912,301.8 L1914,302.1 L1916,302.6 L1918,303.1 L1920,304.8 L1922,307.5 L1924,309.8 L1926,306.0 L1928,302.4 L1930,300.9 L1932,301.4 L1934,302.2 L1936,302.9 L1938,303.2 L1940,303.0 L1942,302.6 L1944,302.2 L1946,301.9 L1948,301.8 L1950,301.3 L1952,300.7 L1954,300.1 L1956,299.8 L1958,299.9 L1960,300.0 L1962,300.1 L1964,300.2 L1966,300.3 L1968,300.6 L1970,301.2 L1972,301.6 L1974,301.8 L1976,302.0 L1978,302.5 L1980,303.0 L1982,303.4 L1984,303.4 L1986,302.8 L1988,302.0 L1990,301.2 L1992,300.9 L1994,301.1 L1996,301.6 L1998,302.2 L2000,302.5 L2002,302.6 L2004,302.3 L2006,301.8 L2008,301.4 L2010,301.2 L2012,301.4 L2014,301.9 L2016,302.5 L2018,302.9 L2020,302.9 L2022,302.2 L2024,301.1 L2026,300.1 L2028,299.8 L2030,300.0 L2032,300.5 L2034,301.0 L2036,301.4 L2038,301.5 L2040,303.1 L2042,304.8 L2044,306.5 L2046,307.9 L2048,307.6 L2050,305.7 L2052,303.6 L2054,301.9 L2056,300.6 L2058,300.6 L2060,300.6 L2062,300.5 L2064,300.5 L2066,300.4 L2068,300.1 L2070,299.8 L2072,299.6 L2074,299.6 L2076,299.7 L2078,299.9 L2080,300.1 L2082,300.2 L2084,300.2 L2086,300.3 L2088,300.5 L2090,300.6 L2092,300.6 L2094,301.0 L2096,301.6 L2098,302.1 L2100,302.3 L2102,302.1 L2104,301.5 L2106,300.9 L2108,302.6 L2110,304.8 L2112,305.0 L2114,303.0 L2116,301.0 L2118,301.1 L2120,301.0 L2122,300.8 L2124,300.5 L2126,300.3 L2128,300.3 L2128,298 Z" fill="#ff9400"/>
<path d="M1655,302 L1665,302 L1660,308 Z" fill="#30c80b"/>
<path d="M1964,304 L1972,304 L1968,309 Z" fill="#30c80b"/>
<rect x="384" y="324" width="21" height="5" fill="#0b4ab5"/><rect x="408" y="324" width="26" height="5" fill="#0b4ab5"/><rect x="439" y="324" width="26" height="5" fill="#0b4ab5"/><rect x="468" y="324" width="24" height="5" fill="#0b4ab5"/><rect x="495" y="324" width="22" height="5" fill="#0b4ab5"/><rect x="522" y="324" width="21" height="5" fill="#0b4ab5"/><rect x="547" y="324" width="26" height="5" fill="#0b4ab5"/><rect x="577" y="324" width="21" height="5" fill="#0b4ab5"/><rect x="603" y="324" width="22" height="5" fill="#0b4ab5"/><rect x="629" y="324" width="23" height="5" fill="#0b4ab5"/><rect x="655" y="324" width="22" height="5" fill="#0b4ab5"/><rect x="680" y="324" width="20" height="5" fill="#0b4ab5"/><rect x="705" y="324" width="25" height="5" fill="#0b4ab5"/><rect x="733" y="324" width="20" height="5" fill="#0b4ab5"/><rect x="758" y="324" width="23" height="5" fill="#0b4ab5"/><rect x="786" y="324" width="26" height="5" fill="#0b4ab5"/><rect x="816" y="324" width="20" height="5" fill="#0b4ab5"/><rect x="839" y="324" width="24" height="5" fill="#0b4ab5"/><rect x="867" y="324" width="23" height="5" fill="#0b4ab5"/><rect x="894" y="324" width="25" height="5" fill="#0b4ab5"/><rect x="924" y="324" width="26" height="5" fill="#0b4ab5"/><rect x="953" y="324" width="20" height="5" fill="#0b4ab5"/><rect x="977" y="324" width="20" height="5" fill="#0b4ab5"/><rect x="1001" y="324" width="25" height="5" fill="#0b4ab5"/><rect x="1030" y="324" width="21" height="5" fill="#0b4ab5"/><rect x="1054" y="324" width="22" height="5" fill="#0b4ab5"/><rect x="1079" y="324" width="22" height="5" fill="#0b4ab5"/><rect x="1105" y="324" width="25" height="5" fill="#0b4ab5"/><rect x="1134" y="324" width="22" height="5" fill="#0b4ab5"/><rect x="1160" y="324" width="21" height="5" fill="#0b4ab5"/><rect x="1186" y="324" width="26" height="5" fill="#0b4ab5"/><rect x="1215" y="324" width="23" height="5" fill="#0b4ab5"/><rect x="1242" y="324" width="26" height="5" fill="#0b4ab5"/><rect x="1271" y="324" width="26" height="5" fill="#0b4ab5"/><rect x="1301" y="324" width="22" height="5" fill="#0b4ab5"/><rect x="1326" y="324" width="22" height="5" fill="#0b4ab5"/><rect x="1351" y="324" width="23" height="5" fill="#0b4ab5"/><rect x="1377" y="324" width="21" height="5" fill="#0b4ab5"/><rect x="1402" y="324" width="25" height="5" fill="#0b4ab5"/><rect x="1432" y="324" width="24" height="5" fill="#0b4ab5"/><rect x="1460" y="324" width="21" height="5" fill="#0b4ab5"/><rect x="1486" y="324" width="20" height="5" fill="#0b4ab5"/><rect x="1509" y="324" width="26" height="5" fill="#0b4ab5"/><rect x="1540" y="324" width="22" height="5" fill="#0b4ab5"/><rect x="1565" y="324" width="26" height="5" fill="#0b4ab5"/><rect x="1595" y="324" width="21" height="5" fill="#0b4ab5"/><rect x="1620" y="324" width="26" height="5" fill="#0b4ab5"/><rect x="1649" y="324" width="22" height="5" fill="#0b4ab5"/><rect x="1676" y="324" width="20" height="5" fill="#0b4ab5"/><rect x="1699" y="324" width="21" height="5" fill="#0b4ab5"/><rect x="1723" y="324" width="21" height="5" fill="#0b4ab5"/><rect x="1748" y="324" width="21" height="5" fill="#0b4ab5"/><rect x="1774" y="324" width="25" height="5" fill="#0b4ab5"/><rect x="1803" y="324" width="20" height="5" fill="#0b4ab5"/><rect x="1826" y="324" width="23" height="5" fill="#0b4ab5"/><rect x="1854" y="324" width="23" height="5" fill="#0b4ab5"/><rect x="1880" y="324" width="23" height="5" fill="#0b4ab5"/><rect x="1907" y="324" width="25" height="5" fill="#0b4ab5"/><rect x="1937" y="324" width="25" height="5" fill="#0b4ab5"/><rect x="1966" y="324" width="22" height="5" fill="#0b4ab5"/><rect x="1991" y="324" width="24" height="5" fill="#0b4ab5"/><rect x="2018" y="324" width="21" height="5" fill="#0b4ab5"/><rect x="2044" y="324" width="25" height="5" fill="#0b4ab5"/><rect x="2072" y="324" width="20" height="5" fill="#0b4ab5"/><rect x="2095" y="324" width="24" height="5" fill="#0b4ab5"/><rect x="2124" y="324" width="12" height="5" fill="#0b4ab5"/>
</svg>
<div style="position:absolute;left:0;top:329px;width:2149px;height:6px;background:#cdcdcd"></div>

<div style="position:absolute;left:0;top:335px;width:2149px;height:27px;background:#f9f9fa;border-bottom:1px solid #d7d7db;box-sizing:border-box"></div>
<div style="position:absolute;left:104px;top:335px;width:106px;height:27px;background:#fff;border-left:1px solid #d7d7db;border-right:1px solid #d7d7db;box-sizing:border-box"></div>
<div style="position:absolute;left:104px;top:336px;width:106px;height:2px;background:#0a84ff"></div>
<div style="position:absolute;left:27px;top:341px;font-size:12px;line-height:14px;color:#0c0c0d;white-space:nowrap">Call Tree</div>
<div style="position:absolute;left:122px;top:342px;font-size:12px;line-height:14px;color:#0c0c0d;white-space:nowrap">Flame Graph</div>
<div style="position:absolute;left:231px;top:341px;font-size:12px;line-height:14px;color:#0c0c0d;white-space:nowrap">Stack Chart</div>
<div style="position:absolute;left:334px;top:341px;font-size:12px;line-height:14px;color:#0c0c0d;white-space:nowrap">Marker Chart</div>
<div style="position:absolute;left:440px;top:341px;font-size:12px;line-height:14px;color:#0c0c0d;white-space:nowrap">Marker Table</div>
<svg style="position:absolute;left:2126px;top:341px" width="16" height="14" viewBox="0 0 16 14">
  <rect x="1" y="1" width="13" height="11" fill="none" stroke="#0c0c0d" stroke-width="1.2"/>
  <rect x="3" y="1" width="1.2" height="11" fill="#0c0c0d"/>
  <path d="M11 4 L7.5 6.5 L11 9 Z" fill="none" stroke="#0c0c0d" stroke-width="1"/>
</svg>


<div style="position:absolute;left:0;top:362px;width:2149px;height:26px;background:#fff;border-bottom:1px solid #d7d7db;box-sizing:border-box"></div>
<div style="position:absolute;left:6px;top:368px;width:5px;height:5px;border-radius:50%;border:4px solid #0a6af2;background:#fff"></div>
<div style="position:absolute;left:22px;top:368px;font-size:11px;line-height:13px;color:#0c0c0d;white-space:nowrap">All stacks</div>
<div style="position:absolute;left:78px;top:368px;width:11px;height:11px;border-radius:50%;border:1px solid #8f8f9d;background:#ececec"></div>
<div style="position:absolute;left:94px;top:368px;font-size:11px;line-height:13px;color:#0c0c0d;white-space:nowrap">JavaScript</div>
<div style="position:absolute;left:153px;top:368px;width:11px;height:11px;border-radius:50%;border:1px solid #8f8f9d;background:#ececec"></div>
<div style="position:absolute;left:169px;top:368px;font-size:11px;line-height:13px;color:#0c0c0d;white-space:nowrap">Native</div>
<div style="position:absolute;left:215px;top:362px;width:1px;height:25px;background:#e0e0e2"></div>
<div style="position:absolute;left:1781px;top:368px;font-size:11px;line-height:13px;color:#0c0c0d;white-space:nowrap">Filter stacks:</div>
<div style="position:absolute;left:1846px;top:364px;width:300px;height:19px;border:1px solid #8f8f9d;border-radius:2px;background:#fff;box-sizing:border-box"></div>
<svg style="position:absolute;left:1850px;top:366px" width="14" height="14" viewBox="0 0 14 14">
  <circle cx="5.8" cy="5.8" r="4" fill="none" stroke="#737373" stroke-width="1.2"/>
  <path d="M8.8 8.8 L12 12" stroke="#737373" stroke-width="1.3"/>
</svg>
<div style="position:absolute;left:1864px;top:366px;font-size:13px;line-height:15px;color:#737373;white-space:nowrap;letter-spacing:-0.1px">Enter filter terms</div>


<div style="position:absolute;left:0;top:388px;width:2149px;height:24px;background:#f9f9fa;border-bottom:1px solid #d7d7db;box-sizing:border-box"></div>
<div style="position:absolute;left:4px;top:394px;font-size:11px;line-height:13px;color:#0060df;white-space:nowrap">Complete “com.example.android.displayingbitmaps”</div>

<div style="position:absolute;left:0;top:412px;width:2149px;height:616px;overflow:hidden;background:#fff">
<div class="b" style="left:3px;top:-6px;width:30px;background:#fdf4a0">art…</div>
<div class="b" style="left:37px;top:-6px;width:26px;background:#fdf4a0">ar…</div>
<div class="s" style="left:98px;top:-6px;width:2px;background:#fdf4a0"></div>
<div class="b" style="left:109px;top:-6px;width:27px;background:#fdf4a0">a…</div>
<div class="s" style="left:136px;top:-6px;width:2px;background:#fdf4a0"></div>
<div class="b" style="left:140px;top:-6px;width:26px;background:#fdf4a0">an…</div>
<div class="b" style="left:172px;top:-6px;width:30px;background:#fdf4a0">and…</div>
<div class="s" style="left:254px;top:-6px;width:2px;background:#fdf4a0"></div>
<div class="s" style="left:259px;top:-6px;width:11px;background:#fdf4a0"></div>
<div class="s" style="left:289px;top:-6px;width:5px;background:#fdf4a0"></div>
<div class="b" style="left:303px;top:-6px;width:14px;background:#fdf4a0">…</div>
<div class="s" style="left:372px;top:-6px;width:3px;background:#fdf4a0"></div>
<div class="s" style="left:378px;top:-6px;width:2px;background:#fdf4a0"></div>
<div class="b" style="left:386px;top:-6px;width:31px;background:#fdf4a0">and…</div>
<div class="b" style="left:429px;top:-6px;width:24px;background:#fdf4a0">_J…</div>
<div class="s" style="left:481px;top:-6px;width:1px;background:#fdf4a0"></div>
<div class="b" style="left:499px;top:-6px;width:85px;background:#fdf4a0">com.example.…</div>
<div class="s" style="left:586px;top:-6px;width:4px;background:#fdf4a0"></div>
<div class="s" style="left:593px;top:-6px;width:3px;background:#fdf4a0"></div>
<div class="s" style="left:598px;top:-6px;width:3px;background:#fdf4a0"></div>
<div class="s" style="left:609px;top:-6px;width:6px;background:#fdf4a0"></div>
<div class="s" style="left:648px;top:-6px;width:8px;background:#fdf4a0"></div>
<div class="s" style="left:673px;top:-6px;width:3px;background:#fdf4a0"></div>
<div class="s" style="left:701px;top:-6px;width:3px;background:#fdf4a0"></div>
<div class="s" style="left:712px;top:-6px;width:9px;background:#fdf4a0"></div>
<div class="b" style="left:727px;top:-6px;width:102px;background:#fdf4a0">android.view.Vie…</div>
<div class="b" style="left:832px;top:-6px;width:65px;background:#fdf4a0">android.v…</div>
<div class="s" style="left:903px;top:-6px;width:10px;background:#fdf4a0"></div>
<div class="s" style="left:916px;top:-6px;width:21px;background:#fdf4a0"></div>
<div class="s" style="left:944px;top:-6px;width:3px;background:#fdf4a0"></div>
<div class="s" style="left:975px;top:-6px;width:11px;background:#fdf4a0"></div>
<div class="s" style="left:1041px;top:-6px;width:3px;background:#fdf4a0"></div>
<div class="s" style="left:1046px;top:-6px;width:3px;background:#fdf4a0"></div>
<div class="s" style="left:1174px;top:-6px;width:5px;background:#fdf4a0"></div>
<div class="s" style="left:1182px;top:-6px;width:4px;background:#fdf4a0"></div>
<div class="s" style="left:1189px;top:-6px;width:8px;background:#fdf4a0"></div>
<div class="s" style="left:1214px;top:-6px;width:11px;background:#fdf4a0"></div>
<div class="b" style="left:1226px;top:-6px;width:16px;background:#fdf4a0">…</div>
<div class="b" style="left:1243px;top:-6px;width:28px;background:#fdf4a0">an…</div>
<div class="s" style="left:1327px;top:-6px;width:6px;background:#fdf4a0"></div>
<div class="b" style="left:1341px;top:-6px;width:14px;background:#fdf4a0">…</div>
<div class="b" style="left:1441px;top:-6px;width:95px;background:#fdf4a0">JVM_GC</div>
<div class="b" style="left:1538px;top:-6px;width:131px;background:#fdf4a0">JVM_GC</div>
<div class="b" style="left:1673px;top:-6px;width:42px;background:#fdf4a0">com.e…</div>
<div class="b" style="left:1722px;top:-6px;width:14px;background:#fdf4a0">…</div>
<div class="s" style="left:1740px;top:-6px;width:5px;background:#fdf4a0"></div>
<div class="s" style="left:1748px;top:-6px;width:4px;background:#fdf4a0"></div>
<div class="s" style="left:1755px;top:-6px;width:7px;background:#fdf4a0"></div>
<div class="s" style="left:1775px;top:-6px;width:4px;background:#fdf4a0"></div>
<div class="s" style="left:1783px;top:-6px;width:5px;background:#fdf4a0"></div>
<div class="b" style="left:1790px;top:-6px;width:41px;background:#fdf4a0">andr…</div>
<div class="s" style="left:1837px;top:-6px;width:5px;background:#fdf4a0"></div>
<div class="s" style="left:1845px;top:-6px;width:5px;background:#fdf4a0"></div>
<div class="s" style="left:1853px;top:-6px;width:6px;background:#fdf4a0"></div>
<div class="s" style="left:1916px;top:-6px;width:8px;background:#fdf4a0"></div>
<div class="s" style="left:1930px;top:-6px;width:3px;background:#fdf4a0"></div>
<div class="s" style="left:2009px;top:-6px;width:1px;background:#ffc48c"></div>
<div class="b" style="left:3px;top:10px;width:30px;background:#fdf4a0">art…</div>
<div class="b" style="left:37px;top:10px;width:26px;background:#fdf4a0">ar…</div>
<div class="s" style="left:98px;top:10px;width:2px;background:#fdf4a0"></div>
<div class="b" style="left:109px;top:10px;width:27px;background:#fdf4a0">an…</div>
<div class="b" style="left:140px;top:10px;width:26px;background:#fdf4a0">an…</div>
<div class="b" style="left:172px;top:10px;width:30px;background:#fdf4a0">and…</div>
<div class="s" style="left:254px;top:10px;width:2px;background:#fdf4a0"></div>
<div class="s" style="left:259px;top:10px;width:11px;background:#fdf4a0"></div>
<div class="s" style="left:289px;top:10px;width:5px;background:#fdf4a0"></div>
<div class="b" style="left:303px;top:10px;width:14px;background:#fdf4a0">…</div>
<div class="s" style="left:372px;top:10px;width:3px;background:#fdf4a0"></div>
<div class="s" style="left:378px;top:10px;width:2px;background:#fdf4a0"></div>
<div class="b" style="left:386px;top:10px;width:31px;background:#fdf4a0">and…</div>
<div class="b" style="left:429px;top:10px;width:24px;background:#fdf4a0">an…</div>
<div class="s" style="left:481px;top:10px;width:1px;background:#fdf4a0"></div>
<div class="b" style="left:497px;top:10px;width:87px;background:#fdf4a0">android.app.A…</div>
<div class="s" style="left:587px;top:10px;width:5px;background:#fdf4a0"></div>
<div class="s" style="left:595px;top:10px;width:6px;background:#fdf4a0"></div>
<div class="s" style="left:609px;top:10px;width:8px;background:#fdf4a0"></div>
<div class="s" style="left:632px;top:10px;width:3px;background:#fdf4a0"></div>
<div class="s" style="left:639px;top:10px;width:3px;background:#fdf4a0"></div>
<div class="s" style="left:648px;top:10px;width:11px;background:#fdf4a0"></div>
<div class="s" style="left:673px;top:10px;width:5px;background:#fdf4a0"></div>
<div class="s" style="left:699px;top:10px;width:6px;background:#fdf4a0"></div>
<div class="s" style="left:712px;top:10px;width:11px;background:#fdf4a0"></div>
<div class="b" style="left:727px;top:10px;width:102px;background:#fdf4a0">android.view.Vie…</div>
<div class="b" style="left:832px;top:10px;width:71px;background:#fdf4a0">android.vi…</div>
<div class="s" style="left:905px;top:10px;width:8px;background:#fdf4a0"></div>
<div class="b" style="left:916px;top:10px;width:23px;background:#fdf4a0">a…</div>
<div class="s" style="left:965px;top:10px;width:3px;background:#fdf4a0"></div>
<div class="s" style="left:975px;top:10px;width:11px;background:#fdf4a0"></div>
<div class="s" style="left:1041px;top:10px;width:3px;background:#fdf4a0"></div>
<div class="s" style="left:1046px;top:10px;width:4px;background:#fdf4a0"></div>
<div class="s" style="left:1174px;top:10px;width:10px;background:#fdf4a0"></div>
<div class="s" style="left:1189px;top:10px;width:8px;background:#fdf4a0"></div>
<div class="b" style="left:1210px;top:10px;width:64px;background:#fdf4a0">android.v…</div>
<div class="s" style="left:1307px;top:10px;width:3px;background:#fdf4a0"></div>
<div class="s" style="left:1327px;top:10px;width:6px;background:#fdf4a0"></div>
<div class="b" style="left:1341px;top:10px;width:14px;background:#fdf4a0">…</div>
<div class="b" style="left:1441px;top:10px;width:95px;background:#fdf4a0">java.lang.Runtime.gc</div>
<div class="b" style="left:1538px;top:10px;width:131px;background:#fdf4a0">java.lang.Runtime.gc</div>
<div class="b" style="left:1670px;top:10px;width:45px;background:#fdf4a0">androi…</div>
<div class="b" style="left:1722px;top:10px;width:14px;background:#fdf4a0">…</div>
<div class="s" style="left:1740px;top:10px;width:5px;background:#fdf4a0"></div>
<div class="s" style="left:1748px;top:10px;width:9px;background:#fdf4a0"></div>
<div class="s" style="left:1775px;top:10px;width:4px;background:#fdf4a0"></div>
<div class="s" style="left:1783px;top:10px;width:5px;background:#fdf4a0"></div>
<div class="b" style="left:1790px;top:10px;width:42px;background:#fdf4a0">andro…</div>
<div class="b" style="left:1834px;top:10px;width:27px;background:#fdf4a0">an…</div>
<div class="s" style="left:1916px;top:10px;width:8px;background:#fdf4a0"></div>
<div class="s" style="left:1930px;top:10px;width:3px;background:#fdf4a0"></div>
<div class="s" style="left:2009px;top:10px;width:1px;background:#ffc48c"></div>
<div class="b" style="left:3px;top:26px;width:30px;background:#fdf4a0">art…</div>
<div class="b" style="left:37px;top:26px;width:26px;background:#fdf4a0">ar…</div>
<div class="s" style="left:98px;top:26px;width:2px;background:#fdf4a0"></div>
<div class="b" style="left:109px;top:26px;width:27px;background:#fdf4a0">an…</div>
<div class="b" style="left:140px;top:26px;width:26px;background:#fdf4a0">an…</div>
<div class="b" style="left:172px;top:26px;width:30px;background:#fdf4a0">and…</div>
<div class="s" style="left:254px;top:26px;width:2px;background:#fdf4a0"></div>
<div class="s" style="left:259px;top:26px;width:11px;background:#fdf4a0"></div>
<div class="s" style="left:289px;top:26px;width:5px;background:#fdf4a0"></div>
<div class="b" style="left:303px;top:26px;width:14px;background:#fdf4a0">…</div>
<div class="s" style="left:330px;top:26px;width:5px;background:#fdf4a0"></div>
<div class="s" style="left:372px;top:26px;width:3px;background:#fdf4a0"></div>
<div class="s" style="left:378px;top:26px;width:2px;background:#fdf4a0"></div>
<div class="b" style="left:386px;top:26px;width:31px;background:#fdf4a0">and…</div>
<div class="b" style="left:429px;top:26px;width:24px;background:#fdf4a0">an…</div>
<div class="s" style="left:476px;top:26px;width:2px;background:#fdf4a0"></div>
<div class="s" style="left:481px;top:26px;width:2px;background:#fdf4a0"></div>
<div class="s" style="left:486px;top:26px;width:2px;background:#fdf4a0"></div>
<div class="s" style="left:491px;top:26px;width:3px;background:#fdf4a0"></div>
<div class="b" style="left:497px;top:26px;width:87px;background:#fdf4a0">android.app.A…</div>
<div class="s" style="left:586px;top:26px;width:4px;background:#fdf4a0"></div>
<div class="s" style="left:609px;top:26px;width:8px;background:#fdf4a0"></div>
<div class="s" style="left:620px;top:26px;width:3px;background:#fdf4a0"></div>
<div class="b" style="left:625px;top:26px;width:39px;background:#fdf4a0">an…</div>
<div class="s" style="left:671px;top:26px;width:8px;background:#fdf4a0"></div>
<div class="s" style="left:690px;top:26px;width:3px;background:#fdf4a0"></div>
<div class="b" style="left:697px;top:26px;width:245px;background:#fdf4a0">android.view.ViewRootImpl.performTraversals</div>
<div class="s" style="left:947px;top:26px;width:4px;background:#fdf4a0"></div>
<div class="b" style="left:975px;top:26px;width:11px;background:#fdf4a0">…</div>
<div class="s" style="left:1022px;top:26px;width:5px;background:#fdf4a0"></div>
<div class="s" style="left:1033px;top:26px;width:3px;background:#fdf4a0"></div>
<div class="s" style="left:1042px;top:26px;width:10px;background:#fdf4a0"></div>
<div class="s" style="left:1063px;top:26px;width:2px;background:#fdf4a0"></div>
<div class="s" style="left:1134px;top:26px;width:3px;background:#fdf4a0"></div>
<div class="s" style="left:1174px;top:26px;width:10px;background:#fdf4a0"></div>
<div class="s" style="left:1187px;top:26px;width:11px;background:#fdf4a0"></div>
<div class="b" style="left:1210px;top:26px;width:64px;background:#fdf4a0">android.v…</div>
<div class="s" style="left:1307px;top:26px;width:3px;background:#fdf4a0"></div>
<div class="s" style="left:1327px;top:26px;width:6px;background:#fdf4a0"></div>
<div class="b" style="left:1341px;top:26px;width:14px;background:#fdf4a0">…</div>
<div class="b" style="left:1408px;top:26px;width:31px;background:#fdf4a0">art…</div>
<div class="b" style="left:1441px;top:26px;width:95px;background:#fdf4a0">java.lang.System.gc</div>
<div class="b" style="left:1538px;top:26px;width:131px;background:#fdf4a0">java.lang.System.runF…</div>
<div class="b" style="left:1670px;top:26px;width:45px;background:#fdf4a0">androi…</div>
<div class="b" style="left:1722px;top:26px;width:14px;background:#fdf4a0">…</div>
<div class="b" style="left:1740px;top:26px;width:20px;background:#fdf4a0">a…</div>
<div class="b" style="left:1771px;top:26px;width:92px;background:#fdf4a0">android.view.V…</div>
<div class="s" style="left:1886px;top:26px;width:2px;background:#fdf4a0"></div>
<div class="s" style="left:1915px;top:26px;width:8px;background:#fdf4a0"></div>
<div class="s" style="left:1930px;top:26px;width:4px;background:#fdf4a0"></div>
<div class="s" style="left:1936px;top:26px;width:6px;background:#fdf4a0"></div>
<div class="s" style="left:2009px;top:26px;width:1px;background:#fdf4a0"></div>
<div class="b" style="left:3px;top:42px;width:30px;background:#fdf4a0">art…</div>
<div class="b" style="left:37px;top:42px;width:26px;background:#fdf4a0">ar…</div>
<div class="s" style="left:98px;top:42px;width:2px;background:#fdf4a0"></div>
<div class="b" style="left:109px;top:42px;width:27px;background:#fdf4a0">an…</div>
<div class="b" style="left:140px;top:42px;width:26px;background:#fdf4a0">an…</div>
<div class="b" style="left:172px;top:42px;width:30px;background:#fdf4a0">and…</div>
<div class="s" style="left:233px;top:42px;width:3px;background:#fdf4a0"></div>
<div class="s" style="left:254px;top:42px;width:2px;background:#fdf4a0"></div>
<div class="s" style="left:259px;top:42px;width:11px;background:#fdf4a0"></div>
<div class="s" style="left:289px;top:42px;width:5px;background:#fdf4a0"></div>
<div class="b" style="left:303px;top:42px;width:14px;background:#fdf4a0">…</div>
<div class="s" style="left:330px;top:42px;width:5px;background:#fdf4a0"></div>
<div class="s" style="left:372px;top:42px;width:3px;background:#fdf4a0"></div>
<div class="s" style="left:378px;top:42px;width:2px;background:#fdf4a0"></div>
<div class="b" style="left:386px;top:42px;width:31px;background:#fdf4a0">and…</div>
<div class="b" style="left:425px;top:42px;width:29px;background:#fdf4a0">and…</div>
<div class="s" style="left:468px;top:42px;width:2px;background:#fdf4a0"></div>
<div class="s" style="left:476px;top:42px;width:2px;background:#fdf4a0"></div>
<div class="s" style="left:481px;top:42px;width:2px;background:#fdf4a0"></div>
<div class="s" style="left:486px;top:42px;width:2px;background:#fdf4a0"></div>
<div class="s" style="left:491px;top:42px;width:3px;background:#fdf4a0"></div>
<div class="b" style="left:497px;top:42px;width:89px;background:#fdf4a0">android.app.I…</div>
<div class="s" style="left:587px;top:42px;width:5px;background:#fdf4a0"></div>
<div class="s" style="left:609px;top:42px;width:9px;background:#fdf4a0"></div>
<div class="b" style="left:625px;top:42px;width:39px;background:#fdf4a0">andr…</div>
<div class="s" style="left:671px;top:42px;width:8px;background:#fdf4a0"></div>
<div class="s" style="left:690px;top:42px;width:3px;background:#fdf4a0"></div>
<div class="b" style="left:697px;top:42px;width:247px;background:#fdf4a0">android.view.ViewRootImpl.doTraversal</div>
<div class="s" style="left:947px;top:42px;width:6px;background:#fdf4a0"></div>
<div class="s" style="left:961px;top:42px;width:4px;background:#fdf4a0"></div>
<div class="b" style="left:975px;top:42px;width:11px;background:#fdf4a0">…</div>
<div class="s" style="left:1022px;top:42px;width:5px;background:#fdf4a0"></div>
<div class="s" style="left:1033px;top:42px;width:3px;background:#fdf4a0"></div>
<div class="s" style="left:1042px;top:42px;width:10px;background:#fdf4a0"></div>
<div class="s" style="left:1063px;top:42px;width:2px;background:#fdf4a0"></div>
<div class="s" style="left:1130px;top:42px;width:7px;background:#fdf4a0"></div>
<div class="s" style="left:1174px;top:42px;width:10px;background:#fdf4a0"></div>
<div class="b" style="left:1187px;top:42px;width:13px;background:#fdf4a0">…</div>
<div class="b" style="left:1210px;top:42px;width:64px;background:#fdf4a0">android.v…</div>
<div class="s" style="left:1327px;top:42px;width:6px;background:#fdf4a0"></div>
<div class="b" style="left:1341px;top:42px;width:16px;background:#fdf4a0">…</div>
<div class="s" style="left:1394px;top:42px;width:3px;background:#fdf4a0"></div>
<div class="b" style="left:1408px;top:42px;width:261px;background:#fdf4a0">android.os.StrictMode.decrementExpectedActivityCount</div>
<div class="b" style="left:1670px;top:42px;width:48px;background:#fdf4a0">androi…</div>
<div class="b" style="left:1722px;top:42px;width:14px;background:#fdf4a0">…</div>
<div class="b" style="left:1740px;top:42px;width:20px;background:#fdf4a0">a…</div>
<div class="b" style="left:1771px;top:42px;width:93px;background:#fdf4a0">android.view.V…</div>
<div class="s" style="left:1866px;top:42px;width:3px;background:#fdf4a0"></div>
<div class="s" style="left:1886px;top:42px;width:3px;background:#fdf4a0"></div>
<div class="s" style="left:1898px;top:42px;width:2px;background:#fdf4a0"></div>
<div class="s" style="left:1916px;top:42px;width:8px;background:#fdf4a0"></div>
<div class="s" style="left:1930px;top:42px;width:9px;background:#fdf4a0"></div>
<div class="s" style="left:1942px;top:42px;width:3px;background:#fdf4a0"></div>
<div class="s" style="left:2009px;top:42px;width:1px;background:#fdf4a0"></div>
<div class="b" style="left:3px;top:58px;width:30px;background:#fdf4a0">art…</div>
<div class="b" style="left:37px;top:58px;width:26px;background:#fdf4a0">da…</div>
<div class="s" style="left:98px;top:58px;width:2px;background:#fdf4a0"></div>
<div class="b" style="left:109px;top:58px;width:27px;background:#fdf4a0">an…</div>
<div class="b" style="left:140px;top:58px;width:26px;background:#fdf4a0">an…</div>
<div class="b" style="left:172px;top:58px;width:30px;background:#fdf4a0">and…</div>
<div class="s" style="left:233px;top:58px;width:3px;background:#fdf4a0"></div>
<div class="s" style="left:254px;top:58px;width:2px;background:#fdf4a0"></div>
<div class="b" style="left:255px;top:58px;width:16px;background:#fdf4a0">…</div>
<div class="b" style="left:303px;top:58px;width:14px;background:#fdf4a0">…</div>
<div class="s" style="left:328px;top:58px;width:10px;background:#fdf4a0"></div>
<div class="s" style="left:372px;top:58px;width:3px;background:#fdf4a0"></div>
<div class="s" style="left:378px;top:58px;width:2px;background:#fdf4a0"></div>
<div class="b" style="left:386px;top:58px;width:31px;background:#fdf4a0">and…</div>
<div class="b" style="left:425px;top:58px;width:29px;background:#fdf4a0">and…</div>
<div class="s" style="left:468px;top:58px;width:2px;background:#fdf4a0"></div>
<div class="s" style="left:476px;top:58px;width:2px;background:#fdf4a0"></div>
<div class="s" style="left:481px;top:58px;width:2px;background:#fdf4a0"></div>
<div class="s" style="left:486px;top:58px;width:2px;background:#fdf4a0"></div>
<div class="s" style="left:491px;top:58px;width:3px;background:#fdf4a0"></div>
<div class="b" style="left:497px;top:58px;width:93px;background:#fdf4a0">androidx.test.…</div>
<div class="s" style="left:592px;top:58px;width:12px;background:#fdf4a0"></div>
<div class="s" style="left:609px;top:58px;width:9px;background:#fdf4a0"></div>
<div class="b" style="left:625px;top:58px;width:39px;background:#fdf4a0">andro…</div>
<div class="s" style="left:670px;top:58px;width:11px;background:#fdf4a0"></div>
<div class="s" style="left:690px;top:58px;width:3px;background:#fdf4a0"></div>
<div class="b" style="left:697px;top:58px;width:247px;background:#fdf4a0">android.view.ViewRootImpl$TraversalRunnable.run</div>
<div class="s" style="left:947px;top:58px;width:6px;background:#fdf4a0"></div>
<div class="s" style="left:961px;top:58px;width:4px;background:#fdf4a0"></div>
<div class="b" style="left:974px;top:58px;width:12px;background:#fdf4a0">…</div>
<div class="s" style="left:996px;top:58px;width:3px;background:#fdf4a0"></div>
<div class="s" style="left:1021px;top:58px;width:6px;background:#fdf4a0"></div>
<div class="s" style="left:1033px;top:58px;width:3px;background:#fdf4a0"></div>
<div class="s" style="left:1042px;top:58px;width:10px;background:#fdf4a0"></div>
<div class="s" style="left:1063px;top:58px;width:3px;background:#fdf4a0"></div>
<div class="s" style="left:1126px;top:58px;width:11px;background:#fdf4a0"></div>
<div class="s" style="left:1174px;top:58px;width:10px;background:#fdf4a0"></div>
<div class="b" style="left:1187px;top:58px;width:13px;background:#fdf4a0">…</div>
<div class="b" style="left:1210px;top:58px;width:64px;background:#fdf4a0">android.v…</div>
<div class="s" style="left:1288px;top:58px;width:3px;background:#fdf4a0"></div>
<div class="s" style="left:1327px;top:58px;width:6px;background:#fdf4a0"></div>
<div class="b" style="left:1341px;top:58px;width:16px;background:#fdf4a0">…</div>
<div class="s" style="left:1394px;top:58px;width:3px;background:#fdf4a0"></div>
<div class="b" style="left:1408px;top:58px;width:310px;background:#fdf4a0">android.app.ActivityThread.performDestroyActivity</div>
<div class="b" style="left:1722px;top:58px;width:14px;background:#fdf4a0">…</div>
<div class="b" style="left:1740px;top:58px;width:20px;background:#fdf4a0">a…</div>
<div class="b" style="left:1771px;top:58px;width:94px;background:#fdf4a0">android.view.V…</div>
<div class="s" style="left:1867px;top:58px;width:3px;background:#fdf4a0"></div>
<div class="s" style="left:1886px;top:58px;width:3px;background:#fdf4a0"></div>
<div class="s" style="left:1899px;top:58px;width:3px;background:#fdf4a0"></div>
<div class="s" style="left:1916px;top:58px;width:8px;background:#fdf4a0"></div>
<div class="s" style="left:1930px;top:58px;width:17px;background:#fdf4a0"></div>
<div class="s" style="left:2009px;top:58px;width:3px;background:#fdf4a0"></div>
<div class="s" style="left:2038px;top:58px;width:3px;background:#fdf4a0"></div>
<div class="b" style="left:3px;top:74px;width:30px;background:#fdf4a0">dal…</div>
<div class="b" style="left:37px;top:74px;width:26px;background:#fdf4a0">da…</div>
<div class="s" style="left:98px;top:74px;width:2px;background:#fdf4a0"></div>
<div class="b" style="left:109px;top:74px;width:27px;background:#fdf4a0">an…</div>
<div class="b" style="left:140px;top:74px;width:26px;background:#fdf4a0">an…</div>
<div class="b" style="left:172px;top:74px;width:30px;background:#fdf4a0">and…</div>
<div class="s" style="left:233px;top:74px;width:3px;background:#fdf4a0"></div>
<div class="b" style="left:255px;top:74px;width:16px;background:#fdf4a0">…</div>
<div class="b" style="left:303px;top:74px;width:17px;background:#fdf4a0">…</div>
<div class="s" style="left:324px;top:74px;width:2px;background:#fdf4a0"></div>
<div class="s" style="left:328px;top:74px;width:10px;background:#fdf4a0"></div>
<div class="s" style="left:350px;top:74px;width:2px;background:#fdf4a0"></div>
<div class="b" style="left:372px;top:74px;width:11px;background:#fdf4a0">…</div>
<div class="b" style="left:386px;top:74px;width:31px;background:#fdf4a0">and…</div>
<div class="b" style="left:425px;top:74px;width:29px;background:#fdf4a0">and…</div>
<div class="b" style="left:475px;top:74px;width:119px;background:#fdf4a0">android.app.Activit…</div>
<div class="s" style="left:595px;top:74px;width:8px;background:#fdf4a0"></div>
<div class="s" style="left:611px;top:74px;width:7px;background:#fdf4a0"></div>
<div class="b" style="left:620px;top:74px;width:46px;background:#fdf4a0">androi…</div>
<div class="b" style="left:670px;top:74px;width:14px;background:#fdf4a0">…</div>
<div class="s" style="left:690px;top:74px;width:5px;background:#fdf4a0"></div>
<div class="b" style="left:697px;top:74px;width:247px;background:#fdf4a0">android.view.Choreographer$CallbackRecord.run</div>
<div class="s" style="left:947px;top:74px;width:6px;background:#fdf4a0"></div>
<div class="s" style="left:961px;top:74px;width:4px;background:#fdf4a0"></div>
<div class="b" style="left:972px;top:74px;width:20px;background:#fdf4a0">c…</div>
<div class="s" style="left:996px;top:74px;width:4px;background:#fdf4a0"></div>
<div class="s" style="left:1003px;top:74px;width:5px;background:#fdf4a0"></div>
<div class="s" style="left:1021px;top:74px;width:6px;background:#fdf4a0"></div>
<div class="s" style="left:1031px;top:74px;width:5px;background:#fdf4a0"></div>
<div class="s" style="left:1042px;top:74px;width:10px;background:#fdf4a0"></div>
<div class="s" style="left:1060px;top:74px;width:15px;background:#fdf4a0"></div>
<div class="s" style="left:1126px;top:74px;width:11px;background:#fdf4a0"></div>
<div class="s" style="left:1174px;top:74px;width:10px;background:#fdf4a0"></div>
<div class="b" style="left:1187px;top:74px;width:14px;background:#fdf4a0">…</div>
<div class="s" style="left:1206px;top:74px;width:3px;background:#fdf4a0"></div>
<div class="b" style="left:1210px;top:74px;width:66px;background:#fdf4a0">android.vi…</div>
<div class="s" style="left:1281px;top:74px;width:4px;background:#fdf4a0"></div>
<div class="s" style="left:1288px;top:74px;width:4px;background:#fdf4a0"></div>
<div class="s" style="left:1295px;top:74px;width:5px;background:#fdf4a0"></div>
<div class="s" style="left:1307px;top:74px;width:8px;background:#fdf4a0"></div>
<div class="b" style="left:1327px;top:74px;width:14px;background:#fdf4a0">…</div>
<div class="b" style="left:1341px;top:74px;width:16px;background:#fdf4a0">…</div>
<div class="b" style="left:1407px;top:74px;width:330px;background:#fdf4a0">android.app.ActivityThread.handleDestroyActivity</div>
<div class="b" style="left:1740px;top:74px;width:25px;background:#fdf4a0">an…</div>
<div class="b" style="left:1771px;top:74px;width:94px;background:#fdf4a0">android.view.C…</div>
<div class="s" style="left:1880px;top:74px;width:3px;background:#fdf4a0"></div>
<div class="s" style="left:1888px;top:74px;width:3px;background:#fdf4a0"></div>
<div class="s" style="left:1916px;top:74px;width:11px;background:#fdf4a0"></div>
<div class="b" style="left:1928px;top:74px;width:19px;background:#fdf4a0">a…</div>
<div class="s" style="left:2009px;top:74px;width:3px;background:#fdf4a0"></div>
<div class="s" style="left:2038px;top:74px;width:3px;background:#fdf4a0"></div>
<div class="b" style="left:3px;top:90px;width:30px;background:#fdf4a0">dal…</div>
<div class="b" style="left:37px;top:90px;width:26px;background:#fdf4a0">da…</div>
<div class="s" style="left:98px;top:90px;width:2px;background:#fdf4a0"></div>
<div class="b" style="left:109px;top:90px;width:27px;background:#fdf4a0">an…</div>
<div class="b" style="left:140px;top:90px;width:26px;background:#fdf4a0">an…</div>
<div class="b" style="left:172px;top:90px;width:30px;background:#fdf4a0">and…</div>
<div class="s" style="left:233px;top:90px;width:3px;background:#fdf4a0"></div>
<div class="b" style="left:255px;top:90px;width:16px;background:#fdf4a0">…</div>
<div class="b" style="left:303px;top:90px;width:21px;background:#fdf4a0">…</div>
<div class="b" style="left:327px;top:90px;width:15px;background:#fdf4a0">…</div>
<div class="s" style="left:350px;top:90px;width:2px;background:#fdf4a0"></div>
<div class="b" style="left:370px;top:90px;width:13px;background:#fdf4a0">…</div>
<div class="b" style="left:385px;top:90px;width:34px;background:#fdf4a0">andr…</div>
<div class="b" style="left:425px;top:90px;width:29px;background:#fdf4a0">art…</div>
<div class="s" style="left:457px;top:90px;width:3px;background:#fdf4a0"></div>
<div class="b" style="left:475px;top:90px;width:131px;background:#fdf4a0">android.app.ActivityT…</div>
<div class="b" style="left:620px;top:90px;width:46px;background:#fdf4a0">androi…</div>
<div class="b" style="left:670px;top:90px;width:14px;background:#fdf4a0">…</div>
<div class="s" style="left:690px;top:90px;width:5px;background:#fdf4a0"></div>
<div class="b" style="left:697px;top:90px;width:256px;background:#fdf4a0">android.view.Choreographer$CallbackRecord.run</div>
<div class="s" style="left:961px;top:90px;width:6px;background:#fdf4a0"></div>
<div class="b" style="left:970px;top:90px;width:22px;background:#fdf4a0">a…</div>
<div class="s" style="left:997px;top:90px;width:6px;background:#fdf4a0"></div>
<div class="s" style="left:1005px;top:90px;width:13px;background:#fdf4a0"></div>
<div class="s" style="left:1021px;top:90px;width:15px;background:#fdf4a0"></div>
<div class="b" style="left:1039px;top:90px;width:14px;background:#fdf4a0">…</div>
<div class="s" style="left:1060px;top:90px;width:15px;background:#fdf4a0"></div>
<div class="s" style="left:1102px;top:90px;width:3px;background:#fdf4a0"></div>
<div class="s" style="left:1126px;top:90px;width:11px;background:#fdf4a0"></div>
<div class="b" style="left:1174px;top:90px;width:27px;background:#fdf4a0">an…</div>
<div class="s" style="left:1206px;top:90px;width:3px;background:#fdf4a0"></div>
<div class="b" style="left:1210px;top:90px;width:66px;background:#fdf4a0">android.vi…</div>
<div class="s" style="left:1281px;top:90px;width:4px;background:#fdf4a0"></div>
<div class="s" style="left:1288px;top:90px;width:4px;background:#fdf4a0"></div>
<div class="s" style="left:1295px;top:90px;width:5px;background:#fdf4a0"></div>
<div class="s" style="left:1307px;top:90px;width:8px;background:#fdf4a0"></div>
<div class="b" style="left:1323px;top:90px;width:35px;background:#fdf4a0">andr…</div>
<div class="s" style="left:1394px;top:90px;width:3px;background:#fdf4a0"></div>
<div class="b" style="left:1407px;top:90px;width:330px;background:#fdf4a0">android.app.servertransaction.DestroyActivityItem.execute</div>
<div class="b" style="left:1740px;top:90px;width:25px;background:#fdf4a0">an…</div>
<div class="b" style="left:1771px;top:90px;width:100px;background:#fdf4a0">android.view.Ch…</div>
<div class="s" style="left:1880px;top:90px;width:5px;background:#fdf4a0"></div>
<div class="s" style="left:1888px;top:90px;width:5px;background:#fdf4a0"></div>
<div class="s" style="left:1899px;top:90px;width:3px;background:#fdf4a0"></div>
<div class="s" style="left:1916px;top:90px;width:11px;background:#fdf4a0"></div>
<div class="b" style="left:1928px;top:90px;width:22px;background:#fdf4a0">a…</div>
<div class="s" style="left:2009px;top:90px;width:3px;background:#fdf4a0"></div>
<div class="s" style="left:2038px;top:90px;width:3px;background:#fdf4a0"></div>
<div class="b" style="left:3px;top:106px;width:30px;background:#fdf4a0">dal…</div>
<div class="b" style="left:37px;top:106px;width:26px;background:#fdf4a0">da…</div>
<div class="s" style="left:98px;top:106px;width:2px;background:#fdf4a0"></div>
<div class="s" style="left:233px;top:106px;width:3px;background:#fdf4a0"></div>
<div class="b" style="left:109px;top:106px;width:27px;background:#fdf4a0">an…</div>
<div class="b" style="left:140px;top:106px;width:26px;background:#fdf4a0">an…</div>
<div class="b" style="left:172px;top:106px;width:30px;background:#fdf4a0">and…</div>
<div class="b" style="left:255px;top:106px;width:16px;background:#fdf4a0">…</div>
<div class="s" style="left:285px;top:106px;width:10px;background:#fdf4a0"></div>
<div class="b" style="left:302px;top:106px;width:22px;background:#fdf4a0">a…</div>
<div class="b" style="left:327px;top:106px;width:17px;background:#fdf4a0">…</div>
<div class="s" style="left:349px;top:106px;width:6px;background:#fdf4a0"></div>
<div class="b" style="left:370px;top:106px;width:52px;background:#fdf4a0">android…</div>
<div class="b" style="left:425px;top:106px;width:29px;background:#fdf4a0">and…</div>
<div class="b" style="left:472px;top:106px;width:134px;background:#fdf4a0">android.app.servertran…</div>
<div class="b" style="left:610px;top:106px;width:56px;background:#fdf4a0">android.…</div>
<div class="b" style="left:670px;top:106px;width:14px;background:#fdf4a0">…</div>
<div class="s" style="left:690px;top:106px;width:5px;background:#fdf4a0"></div>
<div class="b" style="left:697px;top:106px;width:258px;background:#fdf4a0">android.view.Choreographer.doCallbacks</div>
<div class="s" style="left:961px;top:106px;width:6px;background:#fdf4a0"></div>
<div class="b" style="left:970px;top:106px;width:22px;background:#fdf4a0">a…</div>
<div class="s" style="left:997px;top:106px;width:6px;background:#fdf4a0"></div>
<div class="s" style="left:1005px;top:106px;width:13px;background:#fdf4a0"></div>
<div class="b" style="left:1021px;top:106px;width:15px;background:#fdf4a0">…</div>
<div class="b" style="left:1039px;top:106px;width:14px;background:#fdf4a0">…</div>
<div class="b" style="left:1060px;top:106px;width:18px;background:#fdf4a0">a…</div>
<div class="s" style="left:1098px;top:106px;width:8px;background:#fdf4a0"></div>
<div class="s" style="left:1126px;top:106px;width:11px;background:#fdf4a0"></div>
<div class="s" style="left:1140px;top:106px;width:4px;background:#fdf4a0"></div>
<div class="b" style="left:1174px;top:106px;width:32px;background:#fdf4a0">and…</div>
<div class="b" style="left:1210px;top:106px;width:67px;background:#fdf4a0">android.vi…</div>
<div class="b" style="left:1281px;top:106px;width:20px;background:#fdf4a0">a…</div>
<div class="s" style="left:1302px;top:106px;width:13px;background:#fdf4a0"></div>
<div class="b" style="left:1323px;top:106px;width:35px;background:#fdf4a0">andr…</div>
<div class="s" style="left:1370px;top:106px;width:4px;background:#fdf4a0"></div>
<div class="s" style="left:1394px;top:106px;width:3px;background:#fdf4a0"></div>
<div class="b" style="left:1407px;top:106px;width:330px;background:#fdf4a0">android.app.servertransaction.ActivityTransactionItem.execute</div>
<div class="b" style="left:1740px;top:106px;width:25px;background:#fdf4a0">an…</div>
<div class="b" style="left:1771px;top:106px;width:100px;background:#fdf4a0">android.view.Cho…</div>
<div class="s" style="left:1878px;top:106px;width:4px;background:#fdf4a0"></div>
<div class="s" style="left:1886px;top:106px;width:4px;background:#fdf4a0"></div>
<div class="s" style="left:1894px;top:106px;width:6px;background:#fdf4a0"></div>
<div class="s" style="left:1913px;top:106px;width:11px;background:#fdf4a0"></div>
<div class="b" style="left:1925px;top:106px;width:32px;background:#fdf4a0">and…</div>
<div class="s" style="left:1958px;top:106px;width:2px;background:#fdf4a0"></div>
<div class="s" style="left:1986px;top:106px;width:2px;background:#fdf4a0"></div>
<div class="s" style="left:1989px;top:106px;width:3px;background:#fdf4a0"></div>
<div class="s" style="left:2009px;top:106px;width:3px;background:#fdf4a0"></div>
<div class="s" style="left:2025px;top:106px;width:2px;background:#fdf4a0"></div>
<div class="s" style="left:2038px;top:106px;width:3px;background:#fdf4a0"></div>
<div class="s" style="left:2070px;top:106px;width:2px;background:#fdf4a0"></div>
<div class="b" style="left:3px;top:122px;width:30px;background:#fdf4a0">dal…</div>
<div class="b" style="left:37px;top:122px;width:26px;background:#fdf4a0">da…</div>
<div class="s" style="left:98px;top:122px;width:2px;background:#fdf4a0"></div>
<div class="s" style="left:229px;top:122px;width:2px;background:#fdf4a0"></div>
<div class="b" style="left:109px;top:122px;width:28px;background:#fdf4a0">an…</div>
<div class="b" style="left:139px;top:122px;width:27px;background:#fdf4a0">and…</div>
<div class="b" style="left:172px;top:122px;width:30px;background:#fdf4a0">and…</div>
<div class="b" style="left:255px;top:122px;width:16px;background:#fdf4a0">…</div>
<div class="s" style="left:285px;top:122px;width:10px;background:#fdf4a0"></div>
<div class="b" style="left:302px;top:122px;width:23px;background:#fdf4a0">an…</div>
<div class="b" style="left:327px;top:122px;width:17px;background:#fdf4a0">…</div>
<div class="s" style="left:349px;top:122px;width:8px;background:#fdf4a0"></div>
<div class="b" style="left:370px;top:122px;width:90px;background:#fdf4a0">androidx.test.…</div>
<div class="b" style="left:470px;top:122px;width:137px;background:#fdf4a0">android.app.servertrans…</div>
<div class="b" style="left:610px;top:122px;width:73px;background:#fdf4a0">android.app…</div>
<div class="s" style="left:687px;top:122px;width:8px;background:#fdf4a0"></div>
<div class="b" style="left:696px;top:122px;width:260px;background:#fdf4a0">android.view.Choreographer.doFrame</div>
<div class="s" style="left:961px;top:122px;width:6px;background:#fdf4a0"></div>
<div class="b" style="left:969px;top:122px;width:25px;background:#fdf4a0">an…</div>
<div class="b" style="left:996px;top:122px;width:23px;background:#fdf4a0">a…</div>
<div class="b" style="left:1021px;top:122px;width:17px;background:#fdf4a0">…</div>
<div class="b" style="left:1039px;top:122px;width:14px;background:#fdf4a0">…</div>
<div class="b" style="left:1060px;top:122px;width:18px;background:#fdf4a0">a…</div>
<div class="s" style="left:1081px;top:122px;width:3px;background:#fdf4a0"></div>
<div class="s" style="left:1098px;top:122px;width:8px;background:#fdf4a0"></div>
<div class="s" style="left:1112px;top:122px;width:4px;background:#fdf4a0"></div>
<div class="s" style="left:1126px;top:122px;width:11px;background:#fdf4a0"></div>
<div class="s" style="left:1140px;top:122px;width:4px;background:#fdf4a0"></div>
<div class="s" style="left:1162px;top:122px;width:3px;background:#fdf4a0"></div>
<div class="b" style="left:1170px;top:122px;width:37px;background:#fdf4a0">andr…</div>
<div class="b" style="left:1210px;top:122px;width:69px;background:#fdf4a0">android.vi…</div>
<div class="b" style="left:1281px;top:122px;width:35px;background:#fdf4a0">andr…</div>
<div class="b" style="left:1323px;top:122px;width:37px;background:#fdf4a0">andr…</div>
<div class="s" style="left:1372px;top:122px;width:5px;background:#fdf4a0"></div>
<div class="s" style="left:1394px;top:122px;width:3px;background:#fdf4a0"></div>
<div class="b" style="left:1407px;top:122px;width:358px;background:#fdf4a0">android.app.servertransaction.TransactionExecutor.executeLifecycleState</div>
<div class="b" style="left:1770px;top:122px;width:104px;background:#fdf4a0">android.view.Cho…</div>
<div class="s" style="left:1878px;top:122px;width:6px;background:#fdf4a0"></div>
<div class="s" style="left:1887px;top:122px;width:7px;background:#fdf4a0"></div>
<div class="s" style="left:1899px;top:122px;width:3px;background:#fdf4a0"></div>
<div class="s" style="left:1913px;top:122px;width:11px;background:#fdf4a0"></div>
<div class="b" style="left:1925px;top:122px;width:31px;background:#fdf4a0">and…</div>
<div class="s" style="left:1958px;top:122px;width:2px;background:#fdf4a0"></div>
<div class="s" style="left:1966px;top:122px;width:1px;background:#fdf4a0"></div>
<div class="s" style="left:1968px;top:122px;width:2px;background:#fdf4a0"></div>
<div class="s" style="left:1982px;top:122px;width:2px;background:#fdf4a0"></div>
<div class="s" style="left:1986px;top:122px;width:6px;background:#fdf4a0"></div>
<div class="s" style="left:2009px;top:122px;width:3px;background:#fdf4a0"></div>
<div class="s" style="left:2025px;top:122px;width:2px;background:#fdf4a0"></div>
<div class="s" style="left:2034px;top:122px;width:3px;background:#fdf4a0"></div>
<div class="s" style="left:2038px;top:122px;width:3px;background:#fdf4a0"></div>
<div class="s" style="left:2070px;top:122px;width:2px;background:#fdf4a0"></div>
<div class="b" style="left:3px;top:138px;width:30px;background:#fdf4a0">dal…</div>
<div class="b" style="left:37px;top:138px;width:26px;background:#fdf4a0">da…</div>
<div class="s" style="left:80px;top:138px;width:3px;background:#fdf4a0"></div>
<div class="s" style="left:98px;top:138px;width:3px;background:#fdf4a0"></div>
<div class="b" style="left:109px;top:138px;width:28px;background:#fdf4a0">an…</div>
<div class="b" style="left:139px;top:138px;width:29px;background:#fdf4a0">com…</div>
<div class="b" style="left:172px;top:138px;width:30px;background:#fdf4a0">and…</div>
<div class="s" style="left:229px;top:138px;width:2px;background:#fdf4a0"></div>
<div class="b" style="left:251px;top:138px;width:24px;background:#fdf4a0">a…</div>
<div class="s" style="left:282px;top:138px;width:17px;background:#fdf4a0"></div>
<div class="b" style="left:302px;top:138px;width:54px;background:#fdf4a0">android…</div>
<div class="s" style="left:364px;top:138px;width:5px;background:#fdf4a0"></div>
<div class="b" style="left:370px;top:138px;width:90px;background:#fdf4a0">androidx.test.…</div>
<div class="b" style="left:470px;top:138px;width:214px;background:#fdf4a0">android.app.servertransaction.Transa…</div>
<div class="s" style="left:687px;top:138px;width:8px;background:#fdf4a0"></div>
<div class="b" style="left:696px;top:138px;width:260px;background:#fdf4a0">android.view.Choreographer$FrameDisplayEventR…</div>
<div class="b" style="left:961px;top:138px;width:31px;background:#fdf4a0">and…</div>
<div class="b" style="left:996px;top:138px;width:42px;background:#fdf4a0">andro…</div>
<div class="b" style="left:1039px;top:138px;width:14px;background:#fdf4a0">…</div>
<div class="b" style="left:1056px;top:138px;width:25px;background:#fdf4a0">an…</div>
<div class="s" style="left:1083px;top:138px;width:5px;background:#fdf4a0"></div>
<div class="s" style="left:1097px;top:138px;width:19px;background:#fdf4a0"></div>
<div class="s" style="left:1126px;top:138px;width:11px;background:#fdf4a0"></div>
<div class="s" style="left:1140px;top:138px;width:5px;background:#fdf4a0"></div>
<div class="s" style="left:1162px;top:138px;width:5px;background:#fdf4a0"></div>
<div class="b" style="left:1170px;top:138px;width:37px;background:#fdf4a0">andr…</div>
<div class="b" style="left:1209px;top:138px;width:70px;background:#fdf4a0">android.os…</div>
<div class="b" style="left:1281px;top:138px;width:35px;background:#fdf4a0">andr…</div>
<div class="b" style="left:1321px;top:138px;width:39px;background:#fdf4a0">art:…</div>
<div class="s" style="left:1361px;top:138px;width:3px;background:#fdf4a0"></div>
<div class="s" style="left:1394px;top:138px;width:3px;background:#fdf4a0"></div>
<div class="b" style="left:1407px;top:138px;width:358px;background:#fdf4a0">android.app.servertransaction.TransactionExecutor.execute</div>
<div class="b" style="left:1770px;top:138px;width:104px;background:#fdf4a0">android.view.Cho…</div>
<div class="s" style="left:1876px;top:138px;width:2px;background:#fdf4a0"></div>
<div class="b" style="left:1878px;top:138px;width:18px;background:#fdf4a0">…</div>
<div class="s" style="left:1899px;top:138px;width:3px;background:#fdf4a0"></div>
<div class="b" style="left:1910px;top:138px;width:54px;background:#fdf4a0">android…</div>
<div class="s" style="left:1966px;top:138px;width:1px;background:#fdf4a0"></div>
<div class="s" style="left:1969px;top:138px;width:2px;background:#fdf4a0"></div>
<div class="s" style="left:1982px;top:138px;width:12px;background:#fdf4a0"></div>
<div class="s" style="left:1996px;top:138px;width:2px;background:#fdf4a0"></div>
<div class="s" style="left:2009px;top:138px;width:3px;background:#fdf4a0"></div>
<div class="s" style="left:2025px;top:138px;width:2px;background:#fdf4a0"></div>
<div class="s" style="left:2034px;top:138px;width:3px;background:#fdf4a0"></div>
<div class="s" style="left:2038px;top:138px;width:3px;background:#fdf4a0"></div>
<div class="s" style="left:2070px;top:138px;width:2px;background:#fdf4a0"></div>
<div class="b" style="left:3px;top:154px;width:30px;background:#fdf4a0">dal…</div>
<div class="b" style="left:37px;top:154px;width:26px;background:#fdf4a0">da…</div>
<div class="s" style="left:80px;top:154px;width:3px;background:#fdf4a0"></div>
<div class="s" style="left:90px;top:154px;width:3px;background:#fdf4a0"></div>
<div class="s" style="left:98px;top:154px;width:3px;background:#fdf4a0"></div>
<div class="b" style="left:109px;top:154px;width:57px;background:#fdf4a0">android.…</div>
<div class="b" style="left:172px;top:154px;width:30px;background:#fdf4a0">and…</div>
<div class="s" style="left:229px;top:154px;width:2px;background:#fdf4a0"></div>
<div class="b" style="left:251px;top:154px;width:24px;background:#fdf4a0">a…</div>
<div class="s" style="left:282px;top:154px;width:17px;background:#fdf4a0"></div>
<div class="b" style="left:302px;top:154px;width:56px;background:#fdf4a0">android…</div>
<div class="s" style="left:364px;top:154px;width:5px;background:#fdf4a0"></div>
<div class="b" style="left:370px;top:154px;width:90px;background:#fdf4a0">androidx.test.…</div>
<div class="b" style="left:470px;top:154px;width:214px;background:#fdf4a0">android.app.ActivityThread$H.handleMessage</div>
<div class="b" style="left:685px;top:154px;width:308px;background:#fdf4a0">android.os.Handler.handleCallback</div>
<div class="b" style="left:996px;top:154px;width:42px;background:#fdf4a0">andro…</div>
<div class="b" style="left:1039px;top:154px;width:14px;background:#fdf4a0">…</div>
<div class="b" style="left:1056px;top:154px;width:25px;background:#fdf4a0">ar…</div>
<div class="s" style="left:1084px;top:154px;width:4px;background:#fdf4a0"></div>
<div class="b" style="left:1097px;top:154px;width:20px;background:#fdf4a0">a…</div>
<div class="s" style="left:1126px;top:154px;width:4px;background:#fdf4a0"></div>
<div class="s" style="left:1139px;top:154px;width:5px;background:#fdf4a0"></div>
<div class="s" style="left:1150px;top:154px;width:4px;background:#fdf4a0"></div>
<div class="s" style="left:1164px;top:154px;width:3px;background:#fdf4a0"></div>
<div class="b" style="left:1170px;top:154px;width:148px;background:#fdf4a0">android.os.Handler.dispa…</div>
<div class="b" style="left:1321px;top:154px;width:39px;background:#fdf4a0">andro…</div>
<div class="s" style="left:1362px;top:154px;width:6px;background:#fdf4a0"></div>
<div class="s" style="left:1374px;top:154px;width:3px;background:#fdf4a0"></div>
<div class="s" style="left:1389px;top:154px;width:3px;background:#fdf4a0"></div>
<div class="s" style="left:1395px;top:154px;width:4px;background:#fdf4a0"></div>
<div class="b" style="left:1403px;top:154px;width:362px;background:#fdf4a0">android.app.ActivityThread$H.handleMessage</div>
<div class="b" style="left:1766px;top:154px;width:111px;background:#fdf4a0">android.os.Handle…</div>
<div class="b" style="left:1878px;top:154px;width:18px;background:#fdf4a0">…</div>
<div class="s" style="left:1899px;top:154px;width:3px;background:#fdf4a0"></div>
<div class="b" style="left:1910px;top:154px;width:54px;background:#fdf4a0">art::Me…</div>
<div class="s" style="left:1966px;top:154px;width:7px;background:#fdf4a0"></div>
<div class="b" style="left:1982px;top:154px;width:18px;background:#fdf4a0">…</div>
<div class="s" style="left:2008px;top:154px;width:5px;background:#fdf4a0"></div>
<div class="s" style="left:2025px;top:154px;width:3px;background:#fdf4a0"></div>
<div class="s" style="left:2034px;top:154px;width:7px;background:#fdf4a0"></div>
<div class="s" style="left:2070px;top:154px;width:3px;background:#fdf4a0"></div>
<div class="b" style="left:3px;top:170px;width:30px;background:#fdf4a0">dal…</div>
<div class="b" style="left:37px;top:170px;width:26px;background:#fdf4a0">da…</div>
<div class="s" style="left:80px;top:170px;width:3px;background:#fdf4a0"></div>
<div class="s" style="left:90px;top:170px;width:3px;background:#fdf4a0"></div>
<div class="s" style="left:98px;top:170px;width:3px;background:#fdf4a0"></div>
<div class="b" style="left:109px;top:170px;width:57px;background:#fdf4a0">android.…</div>
<div class="b" style="left:172px;top:170px;width:30px;background:#fdf4a0">and…</div>
<div class="s" style="left:230px;top:170px;width:11px;background:#fdf4a0"></div>
<div class="s" style="left:247px;top:170px;width:2px;background:#fdf4a0"></div>
<div class="b" style="left:251px;top:170px;width:24px;background:#fdf4a0">a…</div>
<div class="b" style="left:280px;top:170px;width:20px;background:#fdf4a0">a…</div>
<div class="b" style="left:302px;top:170px;width:56px;background:#fdf4a0">androidx…</div>
<div class="b" style="left:364px;top:170px;width:98px;background:#fdf4a0">androidx.test.e…</div>
<div class="b" style="left:470px;top:170px;width:583px;background:#fdf4a0">android.os.Handler.dispatchMessage</div>
<div class="b" style="left:1056px;top:170px;width:25px;background:#fdf4a0">an…</div>
<div class="s" style="left:1083px;top:170px;width:8px;background:#fdf4a0"></div>
<div class="b" style="left:1097px;top:170px;width:20px;background:#fdf4a0">a…</div>
<div class="s" style="left:1122px;top:170px;width:3px;background:#fdf4a0"></div>
<div class="s" style="left:1128px;top:170px;width:6px;background:#fdf4a0"></div>
<div class="s" style="left:1139px;top:170px;width:5px;background:#fdf4a0"></div>
<div class="s" style="left:1147px;top:170px;width:7px;background:#fdf4a0"></div>
<div class="s" style="left:1164px;top:170px;width:3px;background:#fdf4a0"></div>
<div class="b" style="left:1170px;top:170px;width:209px;background:#fdf4a0">androidx.test.espresso.base.Interro…</div>
<div class="s" style="left:1382px;top:170px;width:2px;background:#fdf4a0"></div>
<div class="s" style="left:1390px;top:170px;width:9px;background:#fdf4a0"></div>
<div class="b" style="left:1403px;top:170px;width:501px;background:#fdf4a0">android.os.Handler.dispatchMessage</div>
<div class="s" style="left:1905px;top:170px;width:1px;background:#fdf4a0"></div>
<div class="b" style="left:1907px;top:170px;width:57px;background:#fdf4a0">androidx…</div>
<div class="b" style="left:1966px;top:170px;width:12px;background:#fdf4a0">…</div>
<div class="s" style="left:1979px;top:170px;width:2px;background:#fdf4a0"></div>
<div class="b" style="left:1982px;top:170px;width:18px;background:#fdf4a0">a…</div>
<div class="s" style="left:2008px;top:170px;width:5px;background:#fdf4a0"></div>
<div class="s" style="left:2025px;top:170px;width:3px;background:#fdf4a0"></div>
<div class="s" style="left:2034px;top:170px;width:8px;background:#fdf4a0"></div>
<div class="s" style="left:2045px;top:170px;width:2px;background:#fdf4a0"></div>
<div class="s" style="left:2050px;top:170px;width:2px;background:#fdf4a0"></div>
<div class="s" style="left:2070px;top:170px;width:3px;background:#fdf4a0"></div>
<div class="s" style="left:2112px;top:170px;width:1px;background:#fdf4a0"></div>
<div class="b" style="left:3px;top:186px;width:30px;background:#fdf4a0">dal…</div>
<div class="b" style="left:37px;top:186px;width:26px;background:#fdf4a0">da…</div>
<div class="s" style="left:80px;top:186px;width:3px;background:#fdf4a0"></div>
<div class="s" style="left:90px;top:186px;width:3px;background:#fdf4a0"></div>
<div class="s" style="left:98px;top:186px;width:5px;background:#fdf4a0"></div>
<div class="b" style="left:109px;top:186px;width:57px;background:#fdf4a0">android.…</div>
<div class="b" style="left:172px;top:186px;width:30px;background:#fdf4a0">com…</div>
<div class="s" style="left:230px;top:186px;width:11px;background:#fdf4a0"></div>
<div class="b" style="left:249px;top:186px;width:28px;background:#fdf4a0">and…</div>
<div class="b" style="left:278px;top:186px;width:81px;background:#fdf4a0">androidx.tes…</div>
<div class="b" style="left:362px;top:186px;width:100px;background:#fdf4a0">androidx.test.es…</div>
<div class="b" style="left:469px;top:186px;width:650px;background:#fdf4a0">androidx.test.espresso.base.Interrogator.loopAndInterrogate</div>
<div class="b" style="left:1125px;top:186px;width:19px;background:#fdf4a0">a…</div>
<div class="s" style="left:1147px;top:186px;width:7px;background:#fdf4a0"></div>
<div class="s" style="left:1164px;top:186px;width:3px;background:#fdf4a0"></div>
<div class="b" style="left:1170px;top:186px;width:209px;background:#fdf4a0">androidx.test.espresso.base.UiContr…</div>
<div class="s" style="left:1382px;top:186px;width:3px;background:#fdf4a0"></div>
<div class="s" style="left:1387px;top:186px;width:12px;background:#fdf4a0"></div>
<div class="b" style="left:1403px;top:186px;width:598px;background:#fdf4a0">androidx.test.espresso.base.Interrogator.loopAndInterrogate</div>
<div class="s" style="left:2008px;top:186px;width:5px;background:#fdf4a0"></div>
<div class="s" style="left:2025px;top:186px;width:3px;background:#fdf4a0"></div>
<div class="s" style="left:2034px;top:186px;width:8px;background:#fdf4a0"></div>
<div class="s" style="left:2045px;top:186px;width:4px;background:#fdf4a0"></div>
<div class="s" style="left:2050px;top:186px;width:3px;background:#fdf4a0"></div>
<div class="s" style="left:2058px;top:186px;width:2px;background:#fdf4a0"></div>
<div class="s" style="left:2070px;top:186px;width:3px;background:#fdf4a0"></div>
<div class="s" style="left:2091px;top:186px;width:3px;background:#fdf4a0"></div>
<div class="s" style="left:2098px;top:186px;width:2px;background:#fdf4a0"></div>
<div class="s" style="left:2112px;top:186px;width:1px;background:#fdf4a0"></div>
<div class="b" style="left:3px;top:202px;width:30px;background:#fdf4a0">dal…</div>
<div class="b" style="left:37px;top:202px;width:26px;background:#fdf4a0">co…</div>
<div class="s" style="left:80px;top:202px;width:3px;background:#fdf4a0"></div>
<div class="s" style="left:90px;top:202px;width:3px;background:#fdf4a0"></div>
<div class="b" style="left:106px;top:202px;width:62px;background:#fdf4a0">android.…</div>
<div class="b" style="left:172px;top:202px;width:30px;background:#fdf4a0">and…</div>
<div class="s" style="left:230px;top:202px;width:11px;background:#fdf4a0"></div>
<div class="b" style="left:246px;top:202px;width:113px;background:#fdf4a0">androidx.test.espr…</div>
<div class="b" style="left:362px;top:202px;width:100px;background:#fdf4a0">androidx.test.es…</div>
<div class="b" style="left:469px;top:202px;width:650px;background:#fdf4a0">androidx.test.espresso.base.UiControllerImpl.loopUntil</div>
<div class="b" style="left:1125px;top:202px;width:31px;background:#fdf4a0">and…</div>
<div class="s" style="left:1161px;top:202px;width:6px;background:#fdf4a0"></div>
<div class="b" style="left:1170px;top:202px;width:209px;background:#fdf4a0">androidx.test.espresso.base.UiContr…</div>
<div class="s" style="left:1382px;top:202px;width:4px;background:#fdf4a0"></div>
<div class="s" style="left:1389px;top:202px;width:4px;background:#fdf4a0"></div>
<div class="s" style="left:1395px;top:202px;width:4px;background:#fdf4a0"></div>
<div class="b" style="left:1403px;top:202px;width:598px;background:#fdf4a0">androidx.test.espresso.base.UiControllerImpl.loopUntil</div>
<div class="s" style="left:2008px;top:202px;width:5px;background:#fdf4a0"></div>
<div class="s" style="left:2025px;top:202px;width:3px;background:#fdf4a0"></div>
<div class="s" style="left:2034px;top:202px;width:9px;background:#fdf4a0"></div>
<div class="s" style="left:2045px;top:202px;width:4px;background:#fdf4a0"></div>
<div class="s" style="left:2050px;top:202px;width:3px;background:#fdf4a0"></div>
<div class="s" style="left:2058px;top:202px;width:2px;background:#fdf4a0"></div>
<div class="s" style="left:2070px;top:202px;width:3px;background:#fdf4a0"></div>
<div class="s" style="left:2091px;top:202px;width:3px;background:#fdf4a0"></div>
<div class="s" style="left:2098px;top:202px;width:2px;background:#fdf4a0"></div>
<div class="s" style="left:2112px;top:202px;width:1px;background:#fdf4a0"></div>
<div class="b" style="left:3px;top:218px;width:30px;background:#fdf4a0">com…</div>
<div class="b" style="left:37px;top:218px;width:26px;background:#fdf4a0">co…</div>
<div class="s" style="left:73px;top:218px;width:2px;background:#fdf4a0"></div>
<div class="s" style="left:80px;top:218px;width:3px;background:#fdf4a0"></div>
<div class="s" style="left:90px;top:218px;width:3px;background:#fdf4a0"></div>
<div class="s" style="left:96px;top:218px;width:9px;background:#fdf4a0"></div>
<div class="b" style="left:106px;top:218px;width:64px;background:#fdf4a0">android.v…</div>
<div class="b" style="left:172px;top:218px;width:30px;background:#fdf4a0">and…</div>
<div class="s" style="left:230px;top:218px;width:11px;background:#fdf4a0"></div>
<div class="b" style="left:246px;top:218px;width:216px;background:#fdf4a0">androidx.test.espresso.action.Tap.sen…</div>
<div class="s" style="left:464px;top:218px;width:3px;background:#fdf4a0"></div>
<div class="b" style="left:469px;top:218px;width:650px;background:#fdf4a0">androidx.test.espresso.base.UiControllerImpl.loopUntil</div>
<div class="b" style="left:1125px;top:218px;width:31px;background:#fdf4a0">and…</div>
<div class="b" style="left:1161px;top:218px;width:221px;background:#fdf4a0">androidx.test.espresso.base.UiControll…</div>
<div class="b" style="left:1385px;top:218px;width:17px;background:#fdf4a0">…</div>
<div class="b" style="left:1403px;top:218px;width:598px;background:#fdf4a0">androidx.test.espresso.base.UiControllerImpl.loopUntil</div>
<div class="s" style="left:2008px;top:218px;width:5px;background:#fdf4a0"></div>
<div class="s" style="left:2025px;top:218px;width:4px;background:#fdf4a0"></div>
<div class="s" style="left:2034px;top:218px;width:9px;background:#fdf4a0"></div>
<div class="s" style="left:2045px;top:218px;width:4px;background:#fdf4a0"></div>
<div class="s" style="left:2050px;top:218px;width:3px;background:#fdf4a0"></div>
<div class="s" style="left:2058px;top:218px;width:2px;background:#fdf4a0"></div>
<div class="s" style="left:2061px;top:218px;width:2px;background:#fdf4a0"></div>
<div class="s" style="left:2070px;top:218px;width:4px;background:#fdf4a0"></div>
<div class="s" style="left:2091px;top:218px;width:3px;background:#fdf4a0"></div>
<div class="s" style="left:2098px;top:218px;width:2px;background:#fdf4a0"></div>
<div class="s" style="left:2110px;top:218px;width:4px;background:#fdf4a0"></div>
<div class="b" style="left:3px;top:234px;width:30px;background:#fdf4a0">and…</div>
<div class="b" style="left:37px;top:234px;width:26px;background:#fdf4a0">an…</div>
<div class="s" style="left:70px;top:234px;width:6px;background:#fdf4a0"></div>
<div class="s" style="left:80px;top:234px;width:3px;background:#fdf4a0"></div>
<div class="s" style="left:90px;top:234px;width:3px;background:#fdf4a0"></div>
<div class="s" style="left:96px;top:234px;width:9px;background:#fdf4a0"></div>
<div class="b" style="left:106px;top:234px;width:64px;background:#fdf4a0">android.v…</div>
<div class="b" style="left:172px;top:234px;width:30px;background:#fdf4a0">and…</div>
<div class="s" style="left:219px;top:234px;width:3px;background:#fdf4a0"></div>
<div class="s" style="left:230px;top:234px;width:11px;background:#fdf4a0"></div>
<div class="b" style="left:246px;top:234px;width:216px;background:#fdf4a0">androidx.test.espresso.action.Tap.access$100</div>
<div class="b" style="left:464px;top:234px;width:655px;background:#fdf4a0">androidx.test.espresso.base.UiControllerImpl.loopMainThreadForAtLeast</div>
<div class="s" style="left:1120px;top:234px;width:3px;background:#fdf4a0"></div>
<div class="b" style="left:1125px;top:234px;width:31px;background:#fdf4a0">and…</div>
<div class="b" style="left:1159px;top:234px;width:223px;background:#fdf4a0">androidx.test.espresso.action.KeyEvent…</div>
<div class="b" style="left:1383px;top:234px;width:621px;background:#fdf4a0">androidx.test.espresso.base.UiControllerImpl.loopMainThreadForAtLeast</div>
<div class="s" style="left:2005px;top:234px;width:12px;background:#fdf4a0"></div>
<div class="s" style="left:2018px;top:234px;width:1px;background:#fdf4a0"></div>
<div class="s" style="left:2025px;top:234px;width:4px;background:#fdf4a0"></div>
<div class="s" style="left:2034px;top:234px;width:9px;background:#fdf4a0"></div>
<div class="s" style="left:2046px;top:234px;width:8px;background:#fdf4a0"></div>
<div class="s" style="left:2058px;top:234px;width:2px;background:#fdf4a0"></div>
<div class="s" style="left:2061px;top:234px;width:2px;background:#fdf4a0"></div>
<div class="s" style="left:2069px;top:234px;width:7px;background:#fdf4a0"></div>
<div class="s" style="left:2091px;top:234px;width:3px;background:#fdf4a0"></div>
<div class="s" style="left:2098px;top:234px;width:2px;background:#fdf4a0"></div>
<div class="s" style="left:2110px;top:234px;width:4px;background:#fdf4a0"></div>
<div class="b" style="left:3px;top:250px;width:30px;background:#fdf4a0">and…</div>
<div class="b" style="left:37px;top:250px;width:26px;background:#fdf4a0">an…</div>
<div class="s" style="left:70px;top:250px;width:6px;background:#fdf4a0"></div>
<div class="s" style="left:80px;top:250px;width:3px;background:#fdf4a0"></div>
<div class="b" style="left:90px;top:250px;width:117px;background:#fdf4a0">android.view.ViewRo…</div>
<div class="s" style="left:219px;top:250px;width:3px;background:#fdf4a0"></div>
<div class="b" style="left:226px;top:250px;width:17px;background:#fdf4a0">…</div>
<div class="b" style="left:246px;top:250px;width:873px;background:#fdf4a0">androidx.test.espresso.action.Tap$1.sendTap</div>
<div class="b" style="left:1120px;top:250px;width:36px;background:#fdf4a0">andr…</div>
<div class="b" style="left:1159px;top:250px;width:223px;background:#fdf4a0">androidx.test.espresso.action.KeyEvent…</div>
<div class="b" style="left:1383px;top:250px;width:635px;background:#fdf4a0">androidx.test.espresso.action.KeyEventActionBase.waitForPendingForegroundActivities</div>
<div class="s" style="left:2025px;top:250px;width:4px;background:#fdf4a0"></div>
<div class="s" style="left:2030px;top:250px;width:1px;background:#fdf4a0"></div>
<div class="s" style="left:2034px;top:250px;width:10px;background:#fdf4a0"></div>
<div class="s" style="left:2046px;top:250px;width:8px;background:#fdf4a0"></div>
<div class="s" style="left:2058px;top:250px;width:5px;background:#fdf4a0"></div>
<div class="s" style="left:2068px;top:250px;width:10px;background:#fdf4a0"></div>
<div class="s" style="left:2085px;top:250px;width:2px;background:#fdf4a0"></div>
<div class="s" style="left:2091px;top:250px;width:3px;background:#fdf4a0"></div>
<div class="s" style="left:2098px;top:250px;width:2px;background:#fdf4a0"></div>
<div class="s" style="left:2106px;top:250px;width:1px;background:#fdf4a0"></div>
<div class="s" style="left:2110px;top:250px;width:5px;background:#fdf4a0"></div>
<div class="b" style="left:3px;top:266px;width:30px;background:#fdf4a0">and…</div>
<div class="b" style="left:37px;top:266px;width:26px;background:#fdf4a0">an…</div>
<div class="s" style="left:70px;top:266px;width:6px;background:#fdf4a0"></div>
<div class="s" style="left:80px;top:266px;width:3px;background:#fdf4a0"></div>
<div class="b" style="left:90px;top:266px;width:118px;background:#fdf4a0">android.view.ViewRo…</div>
<div class="s" style="left:215px;top:266px;width:3px;background:#fdf4a0"></div>
<div class="b" style="left:223px;top:266px;width:21px;background:#fdf4a0">a…</div>
<div class="b" style="left:246px;top:266px;width:910px;background:#fdf4a0">androidx.test.espresso.action.GeneralClickAction.perform</div>
<div class="b" style="left:1158px;top:266px;width:862px;background:#fdf4a0">androidx.test.espresso.action.PressBackAction.perform</div>
<div class="s" style="left:2025px;top:266px;width:4px;background:#fdf4a0"></div>
<div class="s" style="left:2030px;top:266px;width:1px;background:#fdf4a0"></div>
<div class="s" style="left:2034px;top:266px;width:10px;background:#fdf4a0"></div>
<div class="s" style="left:2046px;top:266px;width:8px;background:#fdf4a0"></div>
<div class="s" style="left:2058px;top:266px;width:8px;background:#fdf4a0"></div>
<div class="s" style="left:2068px;top:266px;width:10px;background:#fdf4a0"></div>
<div class="s" style="left:2085px;top:266px;width:2px;background:#fdf4a0"></div>
<div class="s" style="left:2091px;top:266px;width:3px;background:#fdf4a0"></div>
<div class="s" style="left:2098px;top:266px;width:4px;background:#fdf4a0"></div>
<div class="s" style="left:2106px;top:266px;width:1px;background:#fdf4a0"></div>
<div class="s" style="left:2110px;top:266px;width:5px;background:#fdf4a0"></div>
<div class="b" style="left:3px;top:282px;width:30px;background:#fdf4a0">and…</div>
<div class="b" style="left:37px;top:282px;width:26px;background:#fdf4a0">an…</div>
<div class="s" style="left:70px;top:282px;width:6px;background:#fdf4a0"></div>
<div class="s" style="left:80px;top:282px;width:3px;background:#fdf4a0"></div>
<div class="b" style="left:90px;top:282px;width:118px;background:#fdf4a0">android.view.ViewRo…</div>
<div class="s" style="left:215px;top:282px;width:3px;background:#fdf4a0"></div>
<div class="b" style="left:223px;top:282px;width:1797px;background:#fdf4a0">androidx.test.espresso.ViewInteraction$SingleExecutionViewAction.perform</div>
<div class="s" style="left:2021px;top:282px;width:12px;background:#fdf4a0"></div>
<div class="b" style="left:2034px;top:282px;width:22px;background:#fdf4a0">a…</div>
<div class="s" style="left:2057px;top:282px;width:9px;background:#fdf4a0"></div>
<div class="s" style="left:2067px;top:282px;width:11px;background:#fdf4a0"></div>
<div class="s" style="left:2084px;top:282px;width:3px;background:#fdf4a0"></div>
<div class="s" style="left:2091px;top:282px;width:5px;background:#fdf4a0"></div>
<div class="s" style="left:2098px;top:282px;width:5px;background:#fdf4a0"></div>
<div class="s" style="left:2106px;top:282px;width:3px;background:#fdf4a0"></div>
<div class="s" style="left:2110px;top:282px;width:5px;background:#fdf4a0"></div>
<div class="s" style="left:2119px;top:282px;width:2px;background:#fdf4a0"></div>
<div class="s" style="left:2130px;top:282px;width:3px;background:#fdf4a0"></div>
<div class="b" style="left:3px;top:298px;width:30px;background:#fdf4a0">and…</div>
<div class="b" style="left:37px;top:298px;width:27px;background:#fdf4a0">an…</div>
<div class="s" style="left:68px;top:298px;width:7px;background:#fdf4a0"></div>
<div class="s" style="left:80px;top:298px;width:3px;background:#fdf4a0"></div>
<div class="b" style="left:89px;top:298px;width:119px;background:#fdf4a0">android.view.Choreo…</div>
<div class="b" style="left:215px;top:298px;width:1863px;background:#fdf4a0">androidx.test.espresso.ViewInteraction.doPerform</div>
<div class="s" style="left:2084px;top:298px;width:4px;background:#fdf4a0"></div>
<div class="s" style="left:2091px;top:298px;width:5px;background:#fdf4a0"></div>
<div class="s" style="left:2098px;top:298px;width:5px;background:#fdf4a0"></div>
<div class="s" style="left:2106px;top:298px;width:3px;background:#fdf4a0"></div>
<div class="s" style="left:2110px;top:298px;width:5px;background:#fdf4a0"></div>
<div class="s" style="left:2119px;top:298px;width:2px;background:#fdf4a0"></div>
<div class="s" style="left:2130px;top:298px;width:3px;background:#fdf4a0"></div>
<div class="b" style="left:3px;top:314px;width:30px;background:#fdf4a0">and…</div>
<div class="b" style="left:37px;top:314px;width:27px;background:#fdf4a0">an…</div>
<div class="s" style="left:68px;top:314px;width:7px;background:#fdf4a0"></div>
<div class="s" style="left:80px;top:314px;width:3px;background:#fdf4a0"></div>
<div class="b" style="left:89px;top:314px;width:120px;background:#fdf4a0">android.view.Choreo…</div>
<div class="b" style="left:215px;top:314px;width:1863px;background:#fdf4a0">androidx.test.espresso.ViewInteraction.access$100</div>
<div class="s" style="left:2081px;top:314px;width:7px;background:#fdf4a0"></div>
<div class="b" style="left:2092px;top:314px;width:12px;background:#fdf4a0">…</div>
<div class="s" style="left:2106px;top:314px;width:7px;background:#fdf4a0"></div>
<div class="s" style="left:2119px;top:314px;width:2px;background:#fdf4a0"></div>
<div class="s" style="left:2130px;top:314px;width:2px;background:#fdf4a0"></div>
<div class="b" style="left:3px;top:330px;width:30px;background:#fdf4a0">and…</div>
<div class="b" style="left:37px;top:330px;width:27px;background:#fdf4a0">an…</div>
<div class="s" style="left:68px;top:330px;width:7px;background:#fdf4a0"></div>
<div class="s" style="left:80px;top:330px;width:3px;background:#fdf4a0"></div>
<div class="b" style="left:89px;top:330px;width:122px;background:#fdf4a0">android.view.Choreog…</div>
<div class="b" style="left:215px;top:330px;width:1863px;background:#ffe900">androidx.test.espresso.ViewInteraction$1.call</div>
<div class="b" style="left:2080px;top:330px;width:29px;background:#fdf4a0">and…</div>
<div class="s" style="left:2110px;top:330px;width:5px;background:#fdf4a0"></div>
<div class="s" style="left:2118px;top:330px;width:3px;background:#fdf4a0"></div>
<div class="s" style="left:2129px;top:330px;width:10px;background:#fdf4a0"></div>
<div class="b" style="left:3px;top:346px;width:64px;background:#fdf4a0">android.a…</div>
<div class="s" style="left:68px;top:346px;width:7px;background:#fdf4a0"></div>
<div class="s" style="left:80px;top:346px;width:4px;background:#fdf4a0"></div>
<div class="b" style="left:88px;top:346px;width:124px;background:#fdf4a0">android.view.Choreog…</div>
<div class="b" style="left:215px;top:346px;width:1863px;background:#fdf4a0">androidx.test.espresso.ViewInteraction$1.call</div>
<div class="b" style="left:2080px;top:346px;width:29px;background:#fdf4a0">and…</div>
<div class="s" style="left:2110px;top:346px;width:6px;background:#fdf4a0"></div>
<div class="s" style="left:2129px;top:346px;width:11px;background:#fdf4a0"></div>
<div class="b" style="left:3px;top:362px;width:64px;background:#fdf4a0">android.a…</div>
<div class="b" style="left:68px;top:362px;width:16px;background:#fdf4a0">…</div>
<div class="b" style="left:88px;top:362px;width:124px;background:#fdf4a0">android.view.Choreog…</div>
<div class="b" style="left:215px;top:362px;width:1902px;background:#fdf4a0">java.util.concurrent.FutureTask.run</div>
<div class="s" style="left:2118px;top:362px;width:2px;background:#fdf4a0"></div>
<div class="s" style="left:2122px;top:362px;width:4px;background:#fdf4a0"></div>
<div class="b" style="left:2127px;top:362px;width:16px;background:#fdf4a0">…</div>
<div class="b" style="left:3px;top:378px;width:79px;background:#fdf4a0">android.app.…</div>
<div class="b" style="left:85px;top:378px;width:2032px;background:#fdf4a0">android.os.Handler.handleCallback</div>
<div class="s" style="left:2118px;top:378px;width:2px;background:#fdf4a0"></div>
<div class="b" style="left:2127px;top:378px;width:16px;background:#fdf4a0">…</div>
<div class="b" style="left:3px;top:394px;width:2118px;background:#fdf4a0">android.os.Handler.dispatchMessage</div>
<div class="b" style="left:2123px;top:394px;width:23px;background:#fdf4a0">an…</div>
<div class="b" style="left:3px;top:410px;width:2146px;background:#fdf4a0">android.os.Looper.loopOnce</div>
<div class="b" style="left:3px;top:426px;width:2146px;background:#fdf4a0">android.os.Looper.loop</div>
<div class="b" style="left:3px;top:442px;width:2146px;background:#fdf4a0">android.app.ActivityThread.main</div>
<div class="b" style="left:3px;top:458px;width:2146px;background:#fdf4a0">art::Method_invoke(_JNIEnv*, _jobject*, _jobject*, _jobjectArray*)</div>
<div class="b" style="left:3px;top:474px;width:2146px;background:#fdf4a0">com.android.internal.os.RuntimeInit$MethodAndArgsCaller.run</div>
<div class="b" style="left:3px;top:490px;width:2146px;background:#a4e6a0">com.android.internal.os.ZygoteInit.main</div>
<div class="b" style="left:3px;top:506px;width:2146px;background:#fdf4a0">art_quick_invoke_static_stub</div>
<div class="b" style="left:3px;top:522px;width:2146px;background:#fdf4a0">art::JValue art::InvokeWithVarArgs&lt;_jmethodID*&gt;(art::ScopedObjectAccessAlreadyRunnable const&amp;, _jobject*, _jmethodID*, std::__va_list)</div>
<div class="b" style="left:3px;top:538px;width:2146px;background:#ffe900">art::JNI&lt;true&gt;::CallStaticVoidMethodV(_JNIEnv*, _jclass*, _jmethodID*, std::__va_list)</div>
<div class="b" style="left:3px;top:554px;width:2146px;background:#fdf4a0">_JNIEnv::CallStaticVoidMethod(_jclass*, _jmethodID*, ...)</div>
<div class="b" style="left:3px;top:570px;width:2146px;background:#fdf4a0">android::AndroidRuntime::start(char const*, android::Vector&lt;android::String8&gt; const&amp;, bool)</div>
<div class="b" style="left:3px;top:586px;width:2146px;background:#fdf4a0">main</div>
<div class="b" style="left:3px;top:602px;width:2146px;background:#fdf4a0">__libc_init</div>
</div>

<div style="position:absolute;left:1173px;top:771px;width:570px;height:175px;background:#f9f9fa;border:1px solid #c8c8cc;box-shadow:0 1px 4px rgba(0,0,0,0.25);box-sizing:border-box"></div>
<div style="position:absolute;left:1182px;top:781px;font-size:12px;line-height:14px;font-weight:bold;color:#737373;white-space:nowrap">60,019ms (100%)</div>
<div style="position:absolute;left:1283px;top:781px;font-size:12px;line-height:14px;color:#0c0c0d;white-space:nowrap;letter-spacing:-0.13px">art::JNI&lt;true&gt;::CallStaticVoidMethodV(_JNIEnv*, _jclass*, _jmethodID*, std::__va_list)</div>
<div style="position:absolute;left:1182px;top:805px;width:552px;height:1px;background:#a0a0a5"></div>
<div style="position:absolute;left:1391px;top:811px;width:1px;height:14px;background:#d7d7db"></div>
<div style="position:absolute;left:1399px;top:813px;width:9px;height:9px;background:#45a1ff"></div>
<div style="position:absolute;left:1411px;top:812px;font-size:11px;line-height:13px;color:#737373;white-space:nowrap">Running</div>
<div style="position:absolute;left:1480px;top:811px;width:1px;height:14px;background:#d7d7db"></div>
<div style="position:absolute;left:1488px;top:813px;width:9px;height:9px;background:#0060df"></div>
<div style="position:absolute;left:1500px;top:812px;font-size:11px;line-height:13px;color:#737373;white-space:nowrap">Self</div>
<div style="position:absolute;left:1524px;top:811px;width:1px;height:14px;background:#d7d7db"></div>
<div style="position:absolute;left:1162px;top:829px;width:78px;text-align:right;font-size:11px;line-height:13px;color:#737373;white-space:nowrap">Overall</div>
<div style="position:absolute;left:1242px;top:830px;width:150px;height:10px;border-radius:2px;background:#45a1ff"></div>
<div style="position:absolute;left:1399px;top:829px;font-size:11px;line-height:13px;color:#0c0c0d;white-space:nowrap">32,077 samples</div>
<div style="position:absolute;left:1513px;top:835px;width:8px;height:1px;background:#202020"></div>
<div style="position:absolute;left:1162px;top:847px;width:78px;text-align:right;font-size:11px;line-height:13px;color:#737373;white-space:nowrap">Native code</div>
<div style="position:absolute;left:1242px;top:848px;width:150px;height:10px;border-radius:2px;background:#45a1ff"></div>
<div style="position:absolute;left:1399px;top:847px;font-size:11px;line-height:13px;color:#0c0c0d;white-space:nowrap">32,077 samples</div>
<div style="position:absolute;left:1513px;top:853px;width:8px;height:1px;background:#202020"></div>
<div style="position:absolute;left:1182px;top:871px;width:552px;height:1px;background:#d7d7db"></div>
<div style="position:absolute;left:1170px;top:883px;width:78px;text-align:right;font-size:11px;line-height:13px;color:#737373;white-space:nowrap">Stack Type:</div>
<div style="position:absolute;left:1253px;top:883px;font-size:11px;line-height:13px;color:#0c0c0d;white-space:nowrap">Native</div>
<div style="position:absolute;left:1170px;top:900px;width:78px;text-align:right;font-size:11px;line-height:13px;color:#737373;white-space:nowrap">Category:</div>
<div style="position:absolute;left:1253px;top:901px;width:9px;height:9px;background:#ffe900;border:1px solid #d7c300;box-sizing:border-box"></div>
<div style="position:absolute;left:1265px;top:900px;font-size:11px;line-height:13px;color:#0c0c0d;white-space:nowrap">Native</div>
<div style="position:absolute;left:1170px;top:918px;width:78px;text-align:right;font-size:11px;line-height:13px;color:#737373;white-space:nowrap">Resource:</div>
<div style="position:absolute;left:1253px;top:918px;font-size:11px;line-height:13px;color:#0c0c0d;white-space:nowrap;letter-spacing:0.25px">/apex/com.android.art/lib64/libart.so</div>


<div style="position:absolute;left:1993px;top:1011px;width:156px;height:17px;background:#ededf0;border-top:1px solid #b1b1b3;border-left:1px solid #b1b1b3;box-sizing:border-box"></div>
<div style="position:absolute;left:2003px;top:1014px;font-size:11px;line-height:13px;color:#0060df;white-space:nowrap">✕</div>
<div style="position:absolute;left:2021px;top:1014px;font-size:11px;line-height:13px;color:#0060df;white-space:nowrap">Legal</div>
<div style="position:absolute;left:2058px;top:1014px;font-size:11px;line-height:13px;color:#0060df;white-space:nowrap">Privacy</div>
<div style="position:absolute;left:2103px;top:1014px;font-size:11px;line-height:13px;color:#0060df;white-space:nowrap">Cookies</div>

</body></html>
